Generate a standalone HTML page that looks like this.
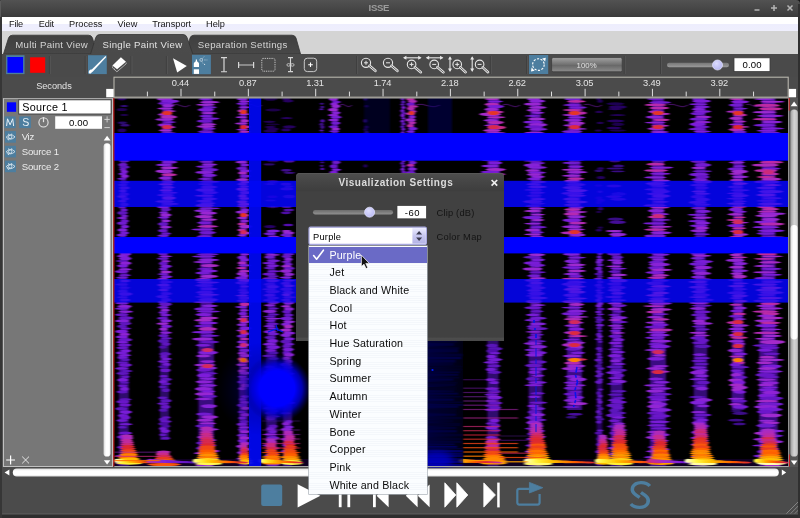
<!DOCTYPE html>
<html><head><meta charset="utf-8"><title>ISSE</title>
<style>
html,body{margin:0;padding:0;}
body{width:800px;height:518px;position:relative;overflow:hidden;background:#4b4b4b;font-family:"Liberation Sans",sans-serif;}
.a{position:absolute;}
.t{position:absolute;white-space:nowrap;line-height:1;}
#w{position:absolute;left:0;top:0;width:800px;height:518px;overflow:hidden;will-change:transform;}
</style></head><body><div id="w">
<div class="a" style="left:0px;top:0px;width:800px;height:8px;background:#161616;"></div>
<div class="a" style="left:0px;top:0px;width:800px;height:17px;background:linear-gradient(#525252 0,#4a4a4a 35%,#424242 70%,#3a3a3a 100%);border-radius:1px 4px 0 0"></div>
<div class="a" style="left:0px;top:1px;width:1.4px;height:16px;background:#5a5a5a;"></div>
<div class="t" style="left:368.60px;top:3px;font-size:9.6px;color:#9c9c9c;letter-spacing:-0.359px;font-weight:bold;">ISSE</div>
<svg class="a" style="left:750px;top:0" width="50" height="17" viewBox="750 0 50 17"><g stroke="#b4b4b4" stroke-width="1.5" fill="none"><path d="M754.5 10h5"/><path d="M771 8h6M774 5v6"/><path d="M787.5 5.5l5 5M792.5 5.5l-5 5"/></g></svg>
<div class="a" style="left:2px;top:16.6px;width:797px;height:14.2px;background:linear-gradient(#fff 0,#fff 7px,#eeeefd 7.5px,#efeffd 100%);"></div>
<div class="t" style="left:9.00px;top:20px;font-size:9.2px;color:#151515;letter-spacing:-0.207px;font-weight:normal;">File</div>
<div class="t" style="left:38.80px;top:20px;font-size:9.2px;color:#151515;letter-spacing:-0.151px;font-weight:normal;">Edit</div>
<div class="t" style="left:69.00px;top:20px;font-size:9.2px;color:#151515;letter-spacing:0.045px;font-weight:normal;">Process</div>
<div class="t" style="left:117.40px;top:20px;font-size:9.2px;color:#151515;letter-spacing:0.067px;font-weight:normal;">View</div>
<div class="t" style="left:152.20px;top:20px;font-size:9.2px;color:#151515;letter-spacing:-0.003px;font-weight:normal;">Transport</div>
<div class="t" style="left:206.00px;top:20px;font-size:9.2px;color:#151515;letter-spacing:0.025px;font-weight:normal;">Help</div>
<div class="a" style="left:2px;top:30.8px;width:797px;height:23.2px;background:#d4d4d4;"></div>
<svg class="a" style="left:0;top:31px" width="320" height="23" viewBox="0 31 320 23"><defs><linearGradient id="tg1" x1="0" y1="0" x2="0" y2="1"><stop offset="0" stop-color="#3f3f3f"/><stop offset="1" stop-color="#484848"/></linearGradient><linearGradient id="tg2" x1="0" y1="0" x2="0" y2="1"><stop offset="0" stop-color="#4c4c4c"/><stop offset="1" stop-color="#4a4a4a"/></linearGradient></defs><path d="M186 54 L190 38 Q191 35.2 194 35.2 L292 35.2 Q295 35.2 296 38 L300.5 54 Z" fill="url(#tg1)" stroke="#333" stroke-width="0.8"/><path d="M3.5 54 L8.5 38 Q9.5 35.2 12.5 35.2 L88.5 35.2 Q91.5 35.2 92.5 38 L97 54 Z" fill="url(#tg1)" stroke="#333" stroke-width="0.8"/><path d="M90.4 54.5 L95.8 37.4 Q96.8 34.5 99.8 34.5 L183 34.5 Q186 34.5 187 37.4 L193 54.5 Z" fill="url(#tg2)" stroke="#333" stroke-width="0.8"/></svg>
<div class="t" style="left:15.30px;top:40px;font-size:9.6px;color:#d4d4d4;letter-spacing:0.290px;font-weight:normal;">Multi Paint View</div>
<div class="t" style="left:102.50px;top:40px;font-size:9.6px;color:#e2e2e2;letter-spacing:0.321px;font-weight:normal;">Single Paint View</div>
<div class="t" style="left:197.80px;top:40px;font-size:9.6px;color:#d4d4d4;letter-spacing:0.317px;font-weight:normal;">Separation Settings</div>
<div class="a" style="left:2px;top:53.5px;width:797px;height:24px;background:#4a4a4a;"></div>
<svg class="a" style="left:0;top:53px" width="800" height="25" viewBox="0 53 800 25"><path d="M49.4 56v18" stroke="#3e3e3e" stroke-width="1"/><path d="M50.4 56v18" stroke="#545454" stroke-width="1"/><path d="M85.2 56v18" stroke="#3e3e3e" stroke-width="1"/><path d="M86.2 56v18" stroke="#545454" stroke-width="1"/><path d="M131 56v18" stroke="#3e3e3e" stroke-width="1"/><path d="M132 56v18" stroke="#545454" stroke-width="1"/><path d="M166.4 56v18" stroke="#3e3e3e" stroke-width="1"/><path d="M167.4 56v18" stroke="#545454" stroke-width="1"/><path d="M356.6 56v18" stroke="#3e3e3e" stroke-width="1"/><path d="M357.6 56v18" stroke="#545454" stroke-width="1"/><path d="M490.4 56v18" stroke="#3e3e3e" stroke-width="1"/><path d="M491.4 56v18" stroke="#545454" stroke-width="1"/><path d="M526.6 56v18" stroke="#3e3e3e" stroke-width="1"/><path d="M527.6 56v18" stroke="#545454" stroke-width="1"/><path d="M624.3 56v18" stroke="#3e3e3e" stroke-width="1"/><path d="M625.3 56v18" stroke="#545454" stroke-width="1"/><path d="M660.5 56v18" stroke="#3e3e3e" stroke-width="1"/><path d="M661.5 56v18" stroke="#545454" stroke-width="1"/><rect x="6.1" y="55.2" width="18.4" height="18.9" fill="#4d7e9f"/><rect x="7.4" y="57" width="15.7" height="15.8" fill="#0000ff"/><rect x="30.1" y="57.3" width="15.1" height="15.5" fill="#ff0000"/><rect x="88" y="55.2" width="18.8" height="18.9" fill="#4d7e9f"/><path d="M90.8 70.4 L105.5 56.1 L106.3 56.9 L92.4 72 Z" fill="#fff"/><ellipse cx="90.5" cy="71.5" rx="1.5" ry="2.3" transform="rotate(38 90.5 71.5)" fill="#fff"/><path d="M112.4 65.4 L120.9 57.3 L126 61.7 L117.1 69.2 Z" fill="#fff"/><path d="M112.5 66.4 V67.8 L116.9 71.8 L126.2 63.8 V62.6 M114.6 68.6 v1.2" fill="none" stroke="#d4d4d4" stroke-width=".7"/><path d="M173 58.2 L186.8 66 L177.2 72.6 Z" fill="#fff"/><rect x="192" y="54.8" width="18.9" height="19.4" fill="#4d7e9f"/><path d="M193.8 67 V63.6 Q193.8 62.4 195.8 61.2 V59.4 H197 V61.2 Q199 62.4 199 63.6 V67 Z" fill="#fff"/><rect x="193.8" y="69.3" width="5.2" height="4.6" fill="#fff"/><circle cx="201.2" cy="59.9" r="1.4" fill="none" stroke="#dfe8ee" stroke-width=".6"/><path d="M202.4 58.6l2 -2.4M202 61.4l.6 1.6" stroke="#dfe8ee" stroke-width=".6" stroke-dasharray="1 .7"/><g fill="#dfe8ee"><circle cx="204.6" cy="59.9" r=".45"/><circle cx="205.8" cy="59.9" r=".45"/><circle cx="207" cy="59.9" r=".45"/><circle cx="204.6" cy="64.4" r=".55"/><circle cx="203" cy="63.2" r=".4"/></g><path d="M224 57.6v14.2" stroke="#b4b4b4" stroke-width="1.6" fill="none"/><path d="M221 57.6h6M221 71.8h6" stroke="#d8d8d8" stroke-width="1.1" fill="none"/><path d="M238.6 62v6M253.6 62v6" stroke="#d8d8d8" stroke-width="1.2" fill="none"/><path d="M238.6 65h15" stroke="#d8d8d8" stroke-width=".9" fill="none"/><rect x="261.8" y="58.4" width="13.2" height="12.8" rx="1.6" fill="none" stroke="#e4e4e4" stroke-width=".9" stroke-dasharray=".9 .9"/><path d="M290.5 57.4v14.4M288 57.6h5M288 71.6h5" stroke="#d4d4d4" stroke-width="1.1" fill="none"/><ellipse cx="288.6" cy="64.9" rx="1.7" ry="1.3" fill="none" stroke="#d4d4d4" stroke-width=".8"/><ellipse cx="292.4" cy="64.9" rx="1.7" ry="1.3" fill="none" stroke="#d4d4d4" stroke-width=".8"/><rect x="304.3" y="58.2" width="12.4" height="13.4" rx="3" fill="none" stroke="#c8c8c8" stroke-width="1"/><path d="M308.2 64.7h4.6M310.5 62.4v4.6" stroke="#fff" stroke-width="1.1"/><circle cx="366" cy="62.8" r="4.6" fill="none" stroke="#e6e6e6" stroke-width="1.1"/><path d="M369.50 65.78L375.4 70.8" stroke="#e6e6e6" stroke-width="2.6" stroke-linecap="round"/><path d="M369.50 65.78L375.4 70.8" stroke="#555" stroke-width="0.9" stroke-linecap="round"/><path d="M364 62.8h4" stroke="#e6e6e6" stroke-width="1"/><path d="M366 60.8v4" stroke="#e6e6e6" stroke-width="1"/><circle cx="388" cy="62.8" r="4.6" fill="none" stroke="#e6e6e6" stroke-width="1.1"/><path d="M391.50 65.78L397.4 70.8" stroke="#e6e6e6" stroke-width="2.6" stroke-linecap="round"/><path d="M391.50 65.78L397.4 70.8" stroke="#555" stroke-width="0.9" stroke-linecap="round"/><path d="M386 62.8h4" stroke="#e6e6e6" stroke-width="1"/><circle cx="411.6" cy="64.4" r="4.3" fill="none" stroke="#e6e6e6" stroke-width="1.1"/><path d="M414.88 67.18L420.8 72.2" stroke="#e6e6e6" stroke-width="2.6" stroke-linecap="round"/><path d="M414.88 67.18L420.8 72.2" stroke="#555" stroke-width="0.9" stroke-linecap="round"/><path d="M409.6 64.4h4" stroke="#e6e6e6" stroke-width="1"/><path d="M411.6 62.400000000000006v4" stroke="#e6e6e6" stroke-width="1"/><path d="M404 57.8h16.6" stroke="#e6e6e6" stroke-width="1.1"/><path d="M403 57.8l3.4 -2v4zM421.6 57.8l-3.4 -2v4z" fill="#e6e6e6"/><circle cx="434.2" cy="64.4" r="4.3" fill="none" stroke="#e6e6e6" stroke-width="1.1"/><path d="M437.48 67.18L443.4 72.2" stroke="#e6e6e6" stroke-width="2.6" stroke-linecap="round"/><path d="M437.48 67.18L443.4 72.2" stroke="#555" stroke-width="0.9" stroke-linecap="round"/><path d="M432.2 64.4h4" stroke="#e6e6e6" stroke-width="1"/><path d="M426.8 57.8h15.6" stroke="#e6e6e6" stroke-width="1.1"/><path d="M425.8 57.8l3.4 -2v4zM443.4 57.8l-3.4 -2v4z" fill="#e6e6e6"/><circle cx="457.2" cy="64.4" r="4.3" fill="none" stroke="#e6e6e6" stroke-width="1.1"/><path d="M460.35 67.33L465.6 72.2" stroke="#e6e6e6" stroke-width="2.6" stroke-linecap="round"/><path d="M460.35 67.33L465.6 72.2" stroke="#555" stroke-width="0.9" stroke-linecap="round"/><path d="M455.2 64.4h4" stroke="#e6e6e6" stroke-width="1"/><path d="M457.2 62.400000000000006v4" stroke="#e6e6e6" stroke-width="1"/><path d="M450 57.6v13" stroke="#e6e6e6" stroke-width="1.1"/><path d="M450 56.2l-2 3.4h4zM450 72l-2 -3.4h4z" fill="#e6e6e6"/><circle cx="479.6" cy="64.4" r="4.3" fill="none" stroke="#e6e6e6" stroke-width="1.1"/><path d="M482.75 67.33L488 72.2" stroke="#e6e6e6" stroke-width="2.6" stroke-linecap="round"/><path d="M482.75 67.33L488 72.2" stroke="#555" stroke-width="0.9" stroke-linecap="round"/><path d="M477.6 64.4h4" stroke="#e6e6e6" stroke-width="1"/><path d="M472.2 57.6v13" stroke="#e6e6e6" stroke-width="1.1"/><path d="M472.2 56.2l-2 3.4h4zM472.2 72l-2 -3.4h4z" fill="#e6e6e6"/><rect x="529" y="55" width="19.2" height="19" fill="#4d7e9f"/><circle cx="538.4" cy="64.6" r="5.8" fill="none" stroke="#fff" stroke-width="1.1" stroke-dasharray="2.2 1.4"/><path d="M542.2 58.4l3.6 -0.6l-0.6 3.8z" fill="#fff"/><path d="M534.6 70.8l-3.6 0.6l0.6 -3.8z" fill="#fff"/><defs><linearGradient id="pg" x1="0" y1="0" x2="0" y2="1"><stop offset="0" stop-color="#b0b0b0"/><stop offset=".12" stop-color="#969696"/><stop offset=".5" stop-color="#707070"/><stop offset=".52" stop-color="#666"/><stop offset="1" stop-color="#8c8c8c"/></linearGradient><linearGradient id="trk" x1="0" y1="0" x2="0" y2="1"><stop offset="0" stop-color="#777"/><stop offset="1" stop-color="#9a9a9a"/></linearGradient><radialGradient id="knob" cx=".4" cy=".35" r=".7"><stop offset="0" stop-color="#dcdcff"/><stop offset="1" stop-color="#b4b4f0"/></radialGradient></defs><rect x="551.6" y="57.6" width="70.6" height="14.2" rx="1.5" fill="url(#pg)" stroke="#3c3c3c" stroke-width=".8"/><rect x="667" y="62.8" width="62" height="4.4" rx="2.2" fill="url(#trk)"/><circle cx="717.5" cy="65" r="5" fill="url(#knob)" stroke="#e8e8ff" stroke-width=".7"/><rect x="734" y="57.8" width="36" height="13.8" fill="#fff" stroke="#3a3a3a" stroke-width=".8"/></svg>
<div class="t" style="left:576.50px;top:62px;font-size:7.8px;color:#e0e0e0;letter-spacing:0.083px;font-weight:normal;">100%</div>
<div class="t" style="left:742.60px;top:60px;font-size:9.6px;color:#000;letter-spacing:0.073px;font-weight:normal;">0.00</div>
<div class="a" style="left:2px;top:76.5px;width:797px;height:21.5px;background:#4b4b4b;"></div>
<svg class="a" style="left:100px;top:76px" width="700" height="23" viewBox="100 76 700 23"><rect x="114" y="77.2" width="674.2" height="20" fill="#4b4b4b" stroke="#b9b7ae" stroke-width="1.1"/><rect x="106.2" y="88.9" width="7.4" height="8.4" fill="#fff"/><rect x="788.9" y="88.9" width="7.2" height="8.4" fill="#fff"/><path d="M181.00 88.8v7.6" stroke="#e0e0e0" stroke-width="1"/><path d="M248.35 88.8v7.6" stroke="#e0e0e0" stroke-width="1"/><path d="M315.70 88.8v7.6" stroke="#e0e0e0" stroke-width="1"/><path d="M383.05 88.8v7.6" stroke="#e0e0e0" stroke-width="1"/><path d="M450.40 88.8v7.6" stroke="#e0e0e0" stroke-width="1"/><path d="M517.75 88.8v7.6" stroke="#e0e0e0" stroke-width="1"/><path d="M585.10 88.8v7.6" stroke="#e0e0e0" stroke-width="1"/><path d="M652.45 88.8v7.6" stroke="#e0e0e0" stroke-width="1"/><path d="M719.80 88.8v7.6" stroke="#e0e0e0" stroke-width="1"/><path d="M147.40 91.6v4.8" stroke="#e0e0e0" stroke-width="1"/><path d="M214.75 91.6v4.8" stroke="#e0e0e0" stroke-width="1"/><path d="M282.10 91.6v4.8" stroke="#e0e0e0" stroke-width="1"/><path d="M349.45 91.6v4.8" stroke="#e0e0e0" stroke-width="1"/><path d="M416.80 91.6v4.8" stroke="#e0e0e0" stroke-width="1"/><path d="M484.15 91.6v4.8" stroke="#e0e0e0" stroke-width="1"/><path d="M551.50 91.6v4.8" stroke="#e0e0e0" stroke-width="1"/><path d="M618.85 91.6v4.8" stroke="#e0e0e0" stroke-width="1"/><path d="M686.20 91.6v4.8" stroke="#e0e0e0" stroke-width="1"/><path d="M753.55 91.6v4.8" stroke="#e0e0e0" stroke-width="1"/></svg>
<div class="t" style="left:36.20px;top:82px;font-size:9.2px;color:#e4e4e4;letter-spacing:-0.034px;font-weight:normal;">Seconds</div>
<div class="t" style="left:140.40px;width:80px;text-align:center;top:79px;font-size:9.3px;color:#e4e4e4;letter-spacing:-0.15px;font-weight:normal;">0.44</div>
<div class="t" style="left:207.75px;width:80px;text-align:center;top:79px;font-size:9.3px;color:#e4e4e4;letter-spacing:-0.15px;font-weight:normal;">0.87</div>
<div class="t" style="left:275.10px;width:80px;text-align:center;top:79px;font-size:9.3px;color:#e4e4e4;letter-spacing:-0.15px;font-weight:normal;">1.31</div>
<div class="t" style="left:342.45px;width:80px;text-align:center;top:79px;font-size:9.3px;color:#e4e4e4;letter-spacing:-0.15px;font-weight:normal;">1.74</div>
<div class="t" style="left:409.80px;width:80px;text-align:center;top:79px;font-size:9.3px;color:#e4e4e4;letter-spacing:-0.15px;font-weight:normal;">2.18</div>
<div class="t" style="left:477.15px;width:80px;text-align:center;top:79px;font-size:9.3px;color:#e4e4e4;letter-spacing:-0.15px;font-weight:normal;">2.62</div>
<div class="t" style="left:544.50px;width:80px;text-align:center;top:79px;font-size:9.3px;color:#e4e4e4;letter-spacing:-0.15px;font-weight:normal;">3.05</div>
<div class="t" style="left:611.85px;width:80px;text-align:center;top:79px;font-size:9.3px;color:#e4e4e4;letter-spacing:-0.15px;font-weight:normal;">3.49</div>
<div class="t" style="left:679.20px;width:80px;text-align:center;top:79px;font-size:9.3px;color:#e4e4e4;letter-spacing:-0.15px;font-weight:normal;">3.92</div>
<div class="a" style="left:2px;top:98px;width:797px;height:369px;background:#555;"></div>
<div class="a" style="left:3px;top:98px;width:109.5px;height:368.6px;background:#777;box-sizing:border-box;border:1px solid #c0c0c0;border-top-color:#a8a8a8"></div>
<svg class="a" style="left:0;top:98px" width="114" height="370" viewBox="0 98 114 370"><rect x="6.9" y="102.3" width="9.2" height="9.5" fill="#0000ff"/><rect x="18.7" y="99.8" width="92.4" height="14.2" fill="#fff" stroke="#3a3a3a" stroke-width=".9"/><rect x="4.6" y="116.4" width="11.1" height="11.7" fill="#4d7e9f"/><rect x="19.2" y="116.4" width="11.7" height="11.7" fill="#4d7e9f"/><path d="M6.6 126 L7.5 118.8 L10.1 124.8 L12.7 118.8 L13.6 126" fill="none" stroke="#e8f0f6" stroke-width="1" stroke-linejoin="round"/><circle cx="43.5" cy="122.4" r="4.6" fill="none" stroke="#e6e6e6" stroke-width="1.1"/><path d="M43.5 117.2v5" stroke="#e6e6e6" stroke-width="1.2"/><rect x="55.2" y="116.3" width="46.8" height="12.5" fill="#fff"/><path d="M104.4 119.4h5.4M107.1 116.4v6" stroke="#d8d8d8" stroke-width=".9"/><path d="M104.4 127.6h5.4" stroke="#d8d8d8" stroke-width=".9"/><rect x="4.9" y="131.1" width="11.1" height="11.6" fill="#4d7e9f"/><path d="M6.200000000000001 137.1q4.2 -4.6 8.8 -.2q-4.4 4.4 -8.8 .2z" fill="none" stroke="#e4eef4" stroke-width=".8"/><circle cx="10.200000000000001" cy="136.9" r="1.7" fill="none" stroke="#e4eef4" stroke-width=".8"/><path d="M8.000000000000002 134.29999999999998h1.2M11.000000000000002 134.2h1.2M7.200000000000001 138.7q.6 1.4 2 1.2" stroke="#e4eef4" stroke-width=".8" fill="none"/><rect x="4.9" y="145.8" width="11.1" height="11.6" fill="#4d7e9f"/><path d="M6.200000000000001 151.8q4.2 -4.6 8.8 -.2q-4.4 4.4 -8.8 .2z" fill="none" stroke="#e4eef4" stroke-width=".8"/><circle cx="10.200000000000001" cy="151.60000000000002" r="1.7" fill="none" stroke="#e4eef4" stroke-width=".8"/><path d="M8.000000000000002 149.0h1.2M11.000000000000002 148.9h1.2M7.200000000000001 153.4q.6 1.4 2 1.2" stroke="#e4eef4" stroke-width=".8" fill="none"/><rect x="4.9" y="160.6" width="11.1" height="11.6" fill="#4d7e9f"/><path d="M6.200000000000001 166.6q4.2 -4.6 8.8 -.2q-4.4 4.4 -8.8 .2z" fill="none" stroke="#e4eef4" stroke-width=".8"/><circle cx="10.200000000000001" cy="166.4" r="1.7" fill="none" stroke="#e4eef4" stroke-width=".8"/><path d="M8.000000000000002 163.79999999999998h1.2M11.000000000000002 163.7h1.2M7.200000000000001 168.2q.6 1.4 2 1.2" stroke="#e4eef4" stroke-width=".8" fill="none"/><defs><linearGradient id="vs" x1="0" y1="0" x2="1" y2="0"><stop offset="0" stop-color="#d8d8d8"/><stop offset=".35" stop-color="#fff"/><stop offset=".8" stop-color="#fff"/><stop offset="1" stop-color="#e0e0e0"/></linearGradient></defs><path d="M107.1 135.8l3.4 4.6h-6.8z" fill="#fff"/><rect x="103.6" y="143.2" width="6.9" height="313.4" rx="3.4" fill="url(#vs)"/><path d="M107.1 464.6l3.2 -4.4h-6.4z" fill="#fff"/><path d="M6.2 460h8.8M10.6 455.6v8.8" stroke="#fff" stroke-width="1.2"/><path d="M22.2 456.6l6.8 6.8M29 456.6l-6.8 6.8" stroke="#f0f0f0" stroke-width=".9"/></svg>
<div class="t" style="left:22.30px;top:102px;font-size:10.8px;color:#000;letter-spacing:0.283px;font-weight:normal;">Source 1</div>
<div class="t" style="left:22.30px;top:117px;font-size:10.6px;color:#e8f0f6;letter-spacing:-1.570px;font-weight:normal;">S</div>
<div class="t" style="left:69.00px;top:118px;font-size:9.6px;color:#000;letter-spacing:0.173px;font-weight:normal;">0.00</div>
<div class="t" style="left:21.70px;top:132px;font-size:9.6px;color:#ececec;letter-spacing:-0.331px;font-weight:normal;">Viz</div>
<div class="t" style="left:21.70px;top:147px;font-size:9.6px;color:#ececec;letter-spacing:-0.160px;font-weight:normal;">Source 1</div>
<div class="t" style="left:21.70px;top:162px;font-size:9.6px;color:#ececec;letter-spacing:-0.160px;font-weight:normal;">Source 2</div>
<svg class="a" style="left:113px;top:98px" width="677" height="370" viewBox="113 98 677 370"><defs><filter id="sb" x="-2%" y="-2%" width="104%" height="104%"><feGaussianBlur stdDeviation="1.2 0.7"/></filter><filter id="sb2"><feGaussianBlur stdDeviation="0.8 0.35"/></filter><filter id="sb3"><feGaussianBlur stdDeviation="3"/></filter><radialGradient id="blob"><stop offset="0" stop-color="#0000ff"/><stop offset=".52" stop-color="#0000ff"/><stop offset=".74" stop-color="#0000d8" stop-opacity=".8"/><stop offset="1" stop-color="#000080" stop-opacity="0"/></radialGradient><radialGradient id="blob2"><stop offset="0" stop-color="#0000a0" stop-opacity=".55"/><stop offset="1" stop-color="#000060" stop-opacity="0"/></radialGradient><linearGradient id="dk" x1="0" y1="0" x2="1" y2="0"><stop offset="0" stop-color="#000070"/><stop offset=".5" stop-color="#000048"/><stop offset="1" stop-color="#000020"/></linearGradient><clipPath id="semi"><rect x="114" y="180.8" width="674" height="26.2"/><rect x="114" y="279" width="674" height="23.6"/></clipPath><g id="stripes"><g filter="url(#sb)"><rect x="114" y="459" width="674" height="7" fill="#2a0860" opacity=".35"/><ellipse cx="122.0" cy="99.0" rx="4.3" ry="1.4" fill="#29066a"/><ellipse cx="124.1" cy="106.0" rx="4.0" ry="1.0" fill="#2f0874"/><ellipse cx="121.9" cy="109.4" rx="5.3" ry="1.5" fill="#200553"/><ellipse cx="124.2" cy="115.0" rx="3.9" ry="0.9" fill="#200554"/><ellipse cx="122.4" cy="122.8" rx="4.7" ry="1.3" fill="#2b076d"/><ellipse cx="124.9" cy="125.3" rx="4.8" ry="1.2" fill="#35097d"/><ellipse cx="122.0" cy="130.4" rx="4.2" ry="1.8" fill="#260663"/><rect x="120.8" y="160" width="5.4" height="77" fill="#440d97" opacity="0.8"/><ellipse cx="124.3" cy="161.0" rx="5.2" ry="1.3" fill="#5812b8"/><ellipse cx="122.9" cy="164.7" rx="4.7" ry="1.6" fill="#6a18c9"/><ellipse cx="124.4" cy="167.1" rx="5.3" ry="1.6" fill="#5c13bc"/><ellipse cx="122.9" cy="169.3" rx="3.5" ry="1.6" fill="#6e19cc"/><ellipse cx="124.5" cy="171.6" rx="3.8" ry="1.6" fill="#7f1fd9"/><ellipse cx="122.8" cy="173.9" rx="4.3" ry="1.1" fill="#751cd4"/><ellipse cx="124.9" cy="176.3" rx="4.0" ry="1.7" fill="#8822d7"/><ellipse cx="122.0" cy="178.7" rx="4.7" ry="1.0" fill="#6a18c9"/><ellipse cx="124.3" cy="182.3" rx="4.9" ry="1.2" fill="#6215c1"/><ellipse cx="122.9" cy="184.9" rx="4.6" ry="1.1" fill="#6115c0"/><ellipse cx="124.5" cy="187.9" rx="5.3" ry="1.3" fill="#761cd5"/><ellipse cx="122.8" cy="190.9" rx="3.7" ry="1.7" fill="#8120d9"/><ellipse cx="124.2" cy="194.2" rx="4.9" ry="1.7" fill="#6416c3"/><ellipse cx="122.0" cy="196.6" rx="4.6" ry="1.3" fill="#8722d7"/><ellipse cx="125.1" cy="198.8" rx="3.9" ry="1.5" fill="#6e19cd"/><ellipse cx="122.3" cy="201.2" rx="4.0" ry="1.1" fill="#7e1fd9"/><ellipse cx="124.3" cy="204.4" rx="4.5" ry="1.7" fill="#5b13bb"/><ellipse cx="122.0" cy="207.5" rx="3.8" ry="0.9" fill="#6516c4"/><ellipse cx="124.1" cy="209.9" rx="3.8" ry="1.2" fill="#6c19cb"/><ellipse cx="122.6" cy="212.9" rx="5.2" ry="1.8" fill="#5e14be"/><ellipse cx="124.7" cy="216.0" rx="3.7" ry="0.9" fill="#781dd6"/><ellipse cx="122.2" cy="218.0" rx="5.3" ry="0.9" fill="#8421d8"/><ellipse cx="124.8" cy="221.1" rx="4.1" ry="1.8" fill="#6e19cd"/><ellipse cx="122.2" cy="223.2" rx="5.2" ry="1.6" fill="#711ad0"/><ellipse cx="125.0" cy="226.4" rx="4.1" ry="1.5" fill="#7c1eda"/><ellipse cx="122.5" cy="230.0" rx="5.0" ry="1.7" fill="#8220d8"/><ellipse cx="124.5" cy="232.9" rx="4.6" ry="1.4" fill="#751cd3"/><ellipse cx="121.9" cy="235.1" rx="5.2" ry="1.6" fill="#751cd4"/><rect x="120.0" y="253" width="7.5" height="87" fill="#480e9e" opacity="0.8"/><rect x="118.8" y="340" width="10.0" height="126" fill="#3c0b8a" opacity="0.8"/><ellipse cx="125.4" cy="254.0" rx="6.0" ry="1.7" fill="#801fd9"/><ellipse cx="123.0" cy="256.1" rx="6.4" ry="1.3" fill="#8120d9"/><ellipse cx="125.2" cy="258.5" rx="6.4" ry="1.7" fill="#7e1fda"/><ellipse cx="122.5" cy="261.0" rx="6.6" ry="1.1" fill="#5d14bc"/><ellipse cx="125.5" cy="263.3" rx="6.0" ry="1.7" fill="#8c23d5"/><ellipse cx="122.7" cy="265.8" rx="5.9" ry="1.6" fill="#7c1eda"/><ellipse cx="125.1" cy="269.4" rx="6.4" ry="1.2" fill="#8b23d6"/><ellipse cx="121.7" cy="271.6" rx="7.1" ry="1.5" fill="#741bd2"/><ellipse cx="124.8" cy="275.2" rx="6.0" ry="1.1" fill="#6918c8"/><ellipse cx="122.1" cy="277.6" rx="6.1" ry="1.2" fill="#701ace"/><ellipse cx="125.2" cy="281.0" rx="5.0" ry="0.9" fill="#9225d4"/><ellipse cx="121.9" cy="284.5" rx="6.3" ry="1.2" fill="#5e14be"/><ellipse cx="124.7" cy="287.8" rx="6.0" ry="0.9" fill="#5d14bd"/><ellipse cx="122.8" cy="291.2" rx="4.9" ry="1.5" fill="#6717c6"/><ellipse cx="125.5" cy="294.0" rx="7.0" ry="1.8" fill="#7a1dd8"/><ellipse cx="122.3" cy="297.2" rx="5.2" ry="0.9" fill="#6516c5"/><ellipse cx="124.8" cy="300.0" rx="5.5" ry="1.2" fill="#7f1fd9"/><ellipse cx="122.1" cy="303.2" rx="6.8" ry="1.3" fill="#751cd3"/><ellipse cx="124.6" cy="306.5" rx="7.3" ry="1.6" fill="#8c23d5"/><ellipse cx="122.1" cy="308.7" rx="7.3" ry="1.2" fill="#711ad0"/><ellipse cx="125.7" cy="311.7" rx="7.3" ry="1.3" fill="#8a23d6"/><ellipse cx="121.9" cy="314.8" rx="7.0" ry="1.5" fill="#6617c5"/><ellipse cx="125.8" cy="318.0" rx="7.4" ry="1.8" fill="#6617c5"/><ellipse cx="122.5" cy="320.9" rx="7.3" ry="1.7" fill="#8421d8"/><ellipse cx="125.2" cy="323.5" rx="6.3" ry="1.6" fill="#6015bf"/><ellipse cx="121.8" cy="326.3" rx="4.9" ry="1.6" fill="#5d14bd"/><ellipse cx="125.7" cy="328.6" rx="5.1" ry="1.0" fill="#6c19cb"/><ellipse cx="121.7" cy="331.5" rx="6.6" ry="1.8" fill="#7f1fd9"/><ellipse cx="124.6" cy="334.4" rx="5.4" ry="1.4" fill="#8f24d5"/><ellipse cx="122.0" cy="336.9" rx="6.2" ry="1.7" fill="#801fd9"/><ellipse cx="125.1" cy="339.8" rx="7.1" ry="1.7" fill="#6b18ca"/><ellipse cx="122.2" cy="342.2" rx="5.8" ry="1.3" fill="#7d1eda"/><ellipse cx="124.5" cy="345.1" rx="6.9" ry="1.6" fill="#6d19cc"/><ellipse cx="122.3" cy="347.8" rx="6.2" ry="1.2" fill="#6b18ca"/><ellipse cx="125.9" cy="350.7" rx="5.0" ry="1.5" fill="#7c1eda"/><ellipse cx="121.6" cy="352.9" rx="5.6" ry="1.4" fill="#761cd4"/><ellipse cx="124.7" cy="355.2" rx="6.4" ry="1.1" fill="#7b1ed9"/><ellipse cx="122.5" cy="357.5" rx="5.2" ry="1.7" fill="#701acf"/><ellipse cx="125.3" cy="359.7" rx="4.9" ry="1.3" fill="#5812b8"/><ellipse cx="122.4" cy="362.6" rx="5.7" ry="1.2" fill="#6316c3"/><ellipse cx="125.3" cy="365.0" rx="6.6" ry="1.7" fill="#6e19cd"/><ellipse cx="121.8" cy="368.4" rx="6.7" ry="1.4" fill="#731bd1"/><ellipse cx="126.0" cy="371.0" rx="6.7" ry="1.2" fill="#5c13bc"/><ellipse cx="122.9" cy="373.4" rx="6.5" ry="1.5" fill="#5e14be"/><ellipse cx="125.5" cy="376.7" rx="4.3" ry="1.3" fill="#6416c4"/><ellipse cx="122.8" cy="379.9" rx="5.6" ry="1.8" fill="#7d1eda"/><ellipse cx="124.6" cy="382.7" rx="4.5" ry="1.1" fill="#5b13bb"/><ellipse cx="122.8" cy="385.7" rx="4.8" ry="1.3" fill="#6b18ca"/><ellipse cx="124.6" cy="389.1" rx="4.4" ry="2.0" fill="#7b1ed9"/><ellipse cx="122.3" cy="391.9" rx="5.7" ry="1.5" fill="#6115c1"/><ellipse cx="125.2" cy="399.5" rx="6.3" ry="1.5" fill="#5b13bb"/><ellipse cx="123.0" cy="401.8" rx="6.7" ry="1.8" fill="#6918c8"/><ellipse cx="125.1" cy="405.0" rx="5.9" ry="1.6" fill="#6e19cd"/><ellipse cx="121.6" cy="408.7" rx="6.3" ry="1.8" fill="#5e14be"/><ellipse cx="125.8" cy="412.1" rx="6.2" ry="1.8" fill="#791dd8"/><ellipse cx="122.9" cy="415.4" rx="5.2" ry="1.5" fill="#721bd1"/><ellipse cx="125.4" cy="417.4" rx="4.9" ry="2.0" fill="#6e19cd"/><ellipse cx="122.1" cy="420.5" rx="5.7" ry="1.5" fill="#6f1ace"/><ellipse cx="125.6" cy="424.2" rx="6.9" ry="1.1" fill="#711ad0"/><ellipse cx="122.4" cy="427.3" rx="4.4" ry="1.3" fill="#5e14be"/><ellipse cx="125.3" cy="433.2" rx="6.9" ry="1.6" fill="#6b18ca"/><ellipse cx="122.9" cy="436.9" rx="5.9" ry="1.8" fill="#761cd4"/><ellipse cx="125.2" cy="438.9" rx="4.7" ry="1.5" fill="#5a13ba"/><ellipse cx="122.1" cy="447.3" rx="5.3" ry="1.4" fill="#6a18c9"/><ellipse cx="125.6" cy="450.4" rx="5.1" ry="1.1" fill="#5f14bf"/><ellipse cx="121.7" cy="455.8" rx="6.3" ry="1.1" fill="#6416c3"/><ellipse cx="125.9" cy="459.5" rx="5.4" ry="1.5" fill="#5611b4"/><ellipse cx="121.6" cy="463.1" rx="6.2" ry="1.5" fill="#6a18c9"/><ellipse cx="127.2" cy="436.0" rx="6.1" ry="1.5" fill="#b12bb6"/><ellipse cx="127.4" cy="438.1" rx="6.1" ry="1.5" fill="#ac2bbe"/><ellipse cx="126.7" cy="440.2" rx="6.2" ry="1.5" fill="#bf2ca0"/><ellipse cx="127.5" cy="442.3" rx="6.4" ry="1.5" fill="#c12c9e"/><ellipse cx="127.5" cy="444.4" rx="6.7" ry="1.5" fill="#cc2b7d"/><ellipse cx="127.7" cy="446.5" rx="7.1" ry="1.5" fill="#dd2832"/><ellipse cx="128.1" cy="448.6" rx="7.5" ry="1.5" fill="#df2a2f"/><ellipse cx="128.6" cy="450.7" rx="8.0" ry="1.5" fill="#ed421a"/><ellipse cx="129.2" cy="452.8" rx="8.6" ry="1.5" fill="#f95708"/><ellipse cx="128.8" cy="454.9" rx="9.3" ry="1.5" fill="#ff8200"/><ellipse cx="127.7" cy="457.0" rx="10.1" ry="1.5" fill="#ff7000"/><ellipse cx="129.2" cy="459.1" rx="10.9" ry="1.5" fill="#ffb800"/><ellipse cx="128.5" cy="461.2" rx="11.8" ry="1.5" fill="#ffd61a"/><ellipse cx="129.3" cy="463.3" rx="12.8" ry="1.5" fill="#fff036"/><rect x="162.2" y="98" width="9.6" height="108" fill="#5a13ba" opacity="0.8"/><ellipse cx="164.9" cy="99.0" rx="8.3" ry="1.6" fill="#9526d3"/><ellipse cx="169.8" cy="101.3" rx="9.3" ry="1.7" fill="#7b1ed9"/><ellipse cx="165.5" cy="103.4" rx="7.6" ry="1.5" fill="#701acf"/><ellipse cx="168.1" cy="105.6" rx="6.4" ry="1.5" fill="#9326d4"/><ellipse cx="165.3" cy="108.5" rx="7.8" ry="1.1" fill="#9b28d1"/><ellipse cx="169.6" cy="111.1" rx="6.3" ry="1.0" fill="#a62ac7"/><ellipse cx="164.6" cy="114.5" rx="6.8" ry="1.3" fill="#9f2ad0"/><ellipse cx="168.7" cy="116.9" rx="8.4" ry="1.8" fill="#ad2bbc"/><ellipse cx="164.6" cy="119.5" rx="9.3" ry="1.3" fill="#9426d3"/><ellipse cx="169.6" cy="122.1" rx="6.4" ry="1.0" fill="#721bd1"/><ellipse cx="164.7" cy="125.0" rx="7.1" ry="1.6" fill="#8e24d5"/><ellipse cx="169.2" cy="127.2" rx="6.4" ry="1.2" fill="#a22acc"/><ellipse cx="165.5" cy="130.4" rx="6.6" ry="1.2" fill="#a02ad0"/><ellipse cx="168.2" cy="133.6" rx="8.6" ry="1.4" fill="#8421d8"/><ellipse cx="164.3" cy="137.2" rx="7.6" ry="1.6" fill="#bb2ba6"/><ellipse cx="168.7" cy="139.7" rx="9.4" ry="1.7" fill="#801fd9"/><ellipse cx="165.3" cy="142.1" rx="7.4" ry="1.3" fill="#8421d8"/><ellipse cx="169.0" cy="144.8" rx="8.9" ry="1.4" fill="#781dd6"/><ellipse cx="165.7" cy="148.2" rx="8.8" ry="1.7" fill="#9526d3"/><ellipse cx="169.0" cy="150.7" rx="8.0" ry="1.4" fill="#6e19cd"/><ellipse cx="164.5" cy="154.3" rx="6.3" ry="1.4" fill="#9c29d1"/><ellipse cx="168.1" cy="157.7" rx="8.7" ry="1.7" fill="#721bd0"/><ellipse cx="165.8" cy="159.8" rx="8.7" ry="1.5" fill="#9b28d1"/><ellipse cx="169.4" cy="162.2" rx="7.9" ry="1.6" fill="#791dd7"/><ellipse cx="164.2" cy="164.9" rx="8.4" ry="1.3" fill="#8220d8"/><ellipse cx="169.3" cy="167.8" rx="9.3" ry="1.3" fill="#a32acb"/><ellipse cx="164.4" cy="171.2" rx="8.9" ry="1.7" fill="#9e29d1"/><ellipse cx="169.2" cy="174.7" rx="7.9" ry="1.5" fill="#bd2ca3"/><ellipse cx="165.2" cy="178.1" rx="6.6" ry="1.6" fill="#8922d6"/><ellipse cx="168.3" cy="181.8" rx="6.8" ry="1.3" fill="#8521d7"/><ellipse cx="165.9" cy="184.3" rx="7.2" ry="1.0" fill="#bf2ca1"/><ellipse cx="168.3" cy="187.4" rx="6.3" ry="1.3" fill="#a92ac2"/><ellipse cx="166.0" cy="190.4" rx="6.5" ry="1.1" fill="#b82bab"/><ellipse cx="169.3" cy="192.7" rx="8.2" ry="1.1" fill="#7a1dd8"/><ellipse cx="165.7" cy="195.1" rx="8.7" ry="1.2" fill="#7d1eda"/><ellipse cx="168.9" cy="198.0" rx="7.0" ry="1.7" fill="#ae2bbb"/><ellipse cx="165.0" cy="201.5" rx="9.4" ry="1.3" fill="#8220d8"/><ellipse cx="169.8" cy="203.9" rx="8.9" ry="1.2" fill="#701ace"/><rect x="161.2" y="206" width="6.6" height="134" fill="#4e10a8" opacity="0.8"/><ellipse cx="163.5" cy="207.0" rx="6.6" ry="1.5" fill="#7c1eda"/><ellipse cx="165.8" cy="209.4" rx="5.1" ry="1.6" fill="#6215c2"/><ellipse cx="163.6" cy="212.6" rx="4.6" ry="1.2" fill="#8220d8"/><ellipse cx="165.8" cy="215.1" rx="5.7" ry="1.8" fill="#9627d3"/><ellipse cx="163.6" cy="217.5" rx="6.0" ry="0.9" fill="#7d1eda"/><ellipse cx="166.2" cy="220.9" rx="4.4" ry="1.1" fill="#9426d3"/><ellipse cx="163.2" cy="224.1" rx="5.3" ry="1.8" fill="#6617c6"/><ellipse cx="165.6" cy="227.1" rx="6.1" ry="1.3" fill="#9526d3"/><ellipse cx="162.7" cy="230.7" rx="4.7" ry="1.4" fill="#6d19cc"/><ellipse cx="166.3" cy="233.6" rx="4.9" ry="1.2" fill="#6a18c9"/><ellipse cx="163.2" cy="235.7" rx="5.9" ry="1.2" fill="#711ad0"/><ellipse cx="165.7" cy="238.9" rx="5.3" ry="1.8" fill="#6717c6"/><ellipse cx="163.8" cy="242.3" rx="5.1" ry="1.5" fill="#8621d7"/><ellipse cx="165.8" cy="244.7" rx="4.2" ry="1.8" fill="#7f1fd9"/><ellipse cx="163.0" cy="248.0" rx="4.9" ry="1.2" fill="#6c19cb"/><ellipse cx="165.6" cy="251.0" rx="5.1" ry="1.5" fill="#711acf"/><ellipse cx="162.9" cy="253.4" rx="5.0" ry="1.8" fill="#6c19cb"/><ellipse cx="165.6" cy="256.4" rx="6.2" ry="1.0" fill="#8b23d6"/><ellipse cx="162.9" cy="258.6" rx="5.9" ry="1.1" fill="#6617c6"/><ellipse cx="165.9" cy="261.3" rx="4.4" ry="1.1" fill="#9426d3"/><ellipse cx="163.3" cy="263.5" rx="4.4" ry="1.7" fill="#6817c7"/><ellipse cx="166.0" cy="266.3" rx="6.0" ry="1.6" fill="#7b1ed9"/><ellipse cx="163.3" cy="268.9" rx="4.2" ry="1.3" fill="#721bd1"/><ellipse cx="166.2" cy="272.1" rx="5.8" ry="1.4" fill="#9f2ad0"/><ellipse cx="163.4" cy="274.1" rx="5.8" ry="1.0" fill="#721bd1"/><ellipse cx="166.2" cy="276.8" rx="6.2" ry="1.5" fill="#7b1ed9"/><ellipse cx="162.6" cy="279.1" rx="5.5" ry="1.2" fill="#8e24d5"/><ellipse cx="166.1" cy="281.9" rx="6.6" ry="1.4" fill="#6918c8"/><ellipse cx="163.6" cy="285.1" rx="6.5" ry="1.5" fill="#9426d3"/><ellipse cx="165.5" cy="287.5" rx="5.6" ry="1.5" fill="#6617c5"/><ellipse cx="163.4" cy="290.0" rx="5.3" ry="1.0" fill="#9b28d1"/><ellipse cx="166.4" cy="293.7" rx="5.5" ry="1.4" fill="#6817c8"/><ellipse cx="162.6" cy="296.6" rx="6.6" ry="1.6" fill="#6f1ace"/><ellipse cx="166.2" cy="299.7" rx="4.9" ry="1.7" fill="#6817c7"/><ellipse cx="162.7" cy="302.1" rx="4.6" ry="1.4" fill="#801fd9"/><ellipse cx="165.4" cy="304.2" rx="6.6" ry="1.7" fill="#6316c3"/><ellipse cx="163.0" cy="307.3" rx="6.0" ry="1.2" fill="#711ad0"/><ellipse cx="165.2" cy="310.3" rx="4.7" ry="1.3" fill="#9125d4"/><ellipse cx="163.1" cy="312.6" rx="4.6" ry="1.4" fill="#751cd3"/><ellipse cx="165.6" cy="315.0" rx="5.7" ry="0.9" fill="#7f1fd9"/><ellipse cx="162.6" cy="318.2" rx="5.6" ry="1.3" fill="#6918c8"/><ellipse cx="166.1" cy="320.8" rx="6.0" ry="1.6" fill="#8421d8"/><ellipse cx="162.7" cy="323.7" rx="6.2" ry="1.3" fill="#a02ad0"/><ellipse cx="166.4" cy="326.4" rx="5.5" ry="1.4" fill="#7f1fd9"/><ellipse cx="163.4" cy="329.1" rx="4.3" ry="1.6" fill="#9928d2"/><ellipse cx="165.9" cy="332.7" rx="6.0" ry="1.2" fill="#8c23d6"/><ellipse cx="163.7" cy="335.7" rx="5.3" ry="1.4" fill="#6516c4"/><ellipse cx="166.1" cy="338.4" rx="5.5" ry="1.1" fill="#6416c4"/><rect x="160.1" y="340" width="8.8" height="100" fill="#370a81" opacity="0.8"/><ellipse cx="163.7" cy="341.0" rx="5.9" ry="2.0" fill="#5712b7"/><ellipse cx="166.2" cy="344.1" rx="4.3" ry="1.8" fill="#5f14bf"/><ellipse cx="162.8" cy="347.1" rx="4.0" ry="1.6" fill="#5010ab"/><ellipse cx="165.2" cy="353.9" rx="5.9" ry="1.8" fill="#5b13bb"/><ellipse cx="163.8" cy="356.6" rx="3.8" ry="1.9" fill="#6617c5"/><ellipse cx="166.5" cy="359.1" rx="4.9" ry="1.3" fill="#731bd2"/><ellipse cx="163.6" cy="361.6" rx="5.8" ry="1.4" fill="#721bd0"/><ellipse cx="166.5" cy="364.4" rx="4.2" ry="1.7" fill="#711ad0"/><ellipse cx="163.7" cy="366.8" rx="5.5" ry="1.4" fill="#4e0fa7"/><ellipse cx="165.3" cy="370.3" rx="5.4" ry="1.9" fill="#6b18ca"/><ellipse cx="163.6" cy="376.2" rx="4.2" ry="1.3" fill="#6a18c9"/><ellipse cx="166.0" cy="379.4" rx="5.9" ry="1.6" fill="#5d14bd"/><ellipse cx="163.0" cy="381.7" rx="4.4" ry="1.7" fill="#731bd2"/><ellipse cx="165.9" cy="383.9" rx="5.0" ry="1.1" fill="#6015bf"/><ellipse cx="162.8" cy="386.9" rx="4.0" ry="1.4" fill="#5812b8"/><ellipse cx="165.9" cy="390.2" rx="4.2" ry="1.9" fill="#5912b9"/><ellipse cx="162.6" cy="397.8" rx="4.9" ry="1.3" fill="#5d14bd"/><ellipse cx="166.0" cy="400.7" rx="5.6" ry="1.6" fill="#5c13bc"/><ellipse cx="163.2" cy="403.6" rx="6.0" ry="1.3" fill="#6918c8"/><ellipse cx="165.5" cy="406.9" rx="4.8" ry="1.8" fill="#6617c6"/><ellipse cx="163.2" cy="410.2" rx="4.3" ry="1.6" fill="#5712b7"/><ellipse cx="166.3" cy="417.4" rx="4.2" ry="1.2" fill="#6516c4"/><ellipse cx="163.3" cy="419.4" rx="4.4" ry="1.8" fill="#5f14bf"/><ellipse cx="165.9" cy="421.5" rx="5.7" ry="1.3" fill="#6516c4"/><ellipse cx="163.4" cy="423.8" rx="5.2" ry="1.6" fill="#4d0fa6"/><ellipse cx="166.2" cy="426.2" rx="4.2" ry="1.3" fill="#5010aa"/><ellipse cx="162.8" cy="428.5" rx="3.9" ry="1.5" fill="#6f1ace"/><ellipse cx="165.2" cy="431.1" rx="4.9" ry="1.8" fill="#751cd3"/><ellipse cx="162.9" cy="434.8" rx="3.8" ry="1.3" fill="#6015c0"/><ellipse cx="165.6" cy="438.3" rx="4.8" ry="1.2" fill="#5e14bd"/><ellipse cx="167.0" cy="113" rx="5.4" ry="2" fill="#e33029"/><ellipse cx="167.0" cy="127" rx="5.4" ry="2" fill="#d7294d"/><ellipse cx="163.5" cy="452.0" rx="7.2" ry="1.5" fill="#b52bb0"/><ellipse cx="162.8" cy="454.1" rx="7.4" ry="1.5" fill="#c92c8b"/><ellipse cx="163.8" cy="456.2" rx="8.2" ry="1.5" fill="#d42a5c"/><ellipse cx="164.0" cy="458.3" rx="9.5" ry="1.5" fill="#e93b20"/><ellipse cx="164.1" cy="460.4" rx="11.3" ry="1.5" fill="#ff6200"/><ellipse cx="165.7" cy="462.5" rx="13.6" ry="1.5" fill="#f24913"/><ellipse cx="164.2" cy="464.6" rx="16.5" ry="1.5" fill="#f8540a"/><rect x="202.4" y="98" width="10.2" height="102" fill="#5211af" opacity="0.8"/><ellipse cx="205.2" cy="99.0" rx="6.7" ry="1.2" fill="#7a1dd9"/><ellipse cx="209.7" cy="102.2" rx="9.8" ry="1.3" fill="#9e29d1"/><ellipse cx="205.7" cy="104.8" rx="9.4" ry="1.1" fill="#9c29d1"/><ellipse cx="209.6" cy="107.4" rx="7.1" ry="1.1" fill="#6f1ace"/><ellipse cx="205.9" cy="109.8" rx="8.1" ry="1.8" fill="#7f1fd9"/><ellipse cx="208.9" cy="113.0" rx="7.9" ry="1.0" fill="#9e29d1"/><ellipse cx="205.9" cy="116.1" rx="6.5" ry="1.1" fill="#781dd7"/><ellipse cx="210.4" cy="118.6" rx="9.1" ry="1.1" fill="#7a1dd8"/><ellipse cx="204.6" cy="121.2" rx="7.8" ry="1.6" fill="#6d19cc"/><ellipse cx="208.6" cy="124.4" rx="7.7" ry="1.2" fill="#a22acd"/><ellipse cx="205.8" cy="126.6" rx="9.3" ry="1.4" fill="#9f2ad0"/><ellipse cx="209.0" cy="128.7" rx="6.6" ry="1.0" fill="#7a1dd8"/><ellipse cx="205.8" cy="131.7" rx="8.0" ry="1.4" fill="#6717c6"/><ellipse cx="209.1" cy="133.9" rx="9.2" ry="1.5" fill="#9225d4"/><ellipse cx="205.9" cy="136.2" rx="9.1" ry="1.3" fill="#701acf"/><ellipse cx="209.0" cy="138.8" rx="7.6" ry="1.2" fill="#9e29d1"/><ellipse cx="206.4" cy="141.2" rx="8.8" ry="1.4" fill="#6717c7"/><ellipse cx="209.1" cy="144.6" rx="9.0" ry="1.7" fill="#a92ac2"/><ellipse cx="205.1" cy="146.9" rx="10.0" ry="1.7" fill="#9025d4"/><ellipse cx="208.7" cy="149.3" rx="8.1" ry="1.3" fill="#8c23d6"/><ellipse cx="205.8" cy="151.4" rx="8.3" ry="1.2" fill="#791dd8"/><ellipse cx="209.5" cy="153.7" rx="7.1" ry="1.5" fill="#7a1dd9"/><ellipse cx="205.8" cy="156.1" rx="8.0" ry="1.0" fill="#6a18c9"/><ellipse cx="209.6" cy="159.1" rx="9.1" ry="0.9" fill="#9125d4"/><ellipse cx="206.4" cy="161.8" rx="8.0" ry="0.9" fill="#781dd7"/><ellipse cx="209.5" cy="164.6" rx="7.7" ry="1.1" fill="#8822d7"/><ellipse cx="204.7" cy="166.6" rx="8.6" ry="1.1" fill="#781dd6"/><ellipse cx="209.5" cy="169.8" rx="8.8" ry="1.8" fill="#6f1ace"/><ellipse cx="204.6" cy="172.4" rx="9.3" ry="1.5" fill="#8722d7"/><ellipse cx="209.4" cy="175.4" rx="7.5" ry="1.6" fill="#7b1ed9"/><ellipse cx="204.6" cy="178.9" rx="6.6" ry="1.0" fill="#791dd8"/><ellipse cx="209.3" cy="181.8" rx="10.1" ry="1.0" fill="#761cd4"/><ellipse cx="205.1" cy="184.1" rx="7.3" ry="0.9" fill="#711ad0"/><ellipse cx="209.0" cy="187.1" rx="8.3" ry="1.5" fill="#7a1dd8"/><ellipse cx="205.3" cy="190.0" rx="9.6" ry="1.8" fill="#8b23d6"/><ellipse cx="210.3" cy="192.6" rx="7.6" ry="1.5" fill="#781dd6"/><ellipse cx="204.5" cy="195.7" rx="9.5" ry="1.0" fill="#9025d4"/><ellipse cx="209.7" cy="198.8" rx="7.8" ry="1.2" fill="#8120d9"/><rect x="200.4" y="200" width="11.7" height="140" fill="#5712b6" opacity="0.8"/><rect x="198.4" y="340" width="15.6" height="126" fill="#490e9f" opacity="0.8"/><ellipse cx="204.5" cy="201.0" rx="8.5" ry="1.2" fill="#8b23d6"/><ellipse cx="207.7" cy="203.3" rx="7.7" ry="1.0" fill="#8a23d6"/><ellipse cx="204.8" cy="205.5" rx="9.3" ry="1.6" fill="#9928d2"/><ellipse cx="209.4" cy="208.3" rx="11.1" ry="0.9" fill="#721bd0"/><ellipse cx="203.2" cy="210.7" rx="9.1" ry="1.5" fill="#8922d6"/><ellipse cx="208.2" cy="213.2" rx="8.8" ry="1.6" fill="#9a28d2"/><ellipse cx="203.8" cy="216.6" rx="9.2" ry="1.5" fill="#a42ac9"/><ellipse cx="209.3" cy="219.6" rx="7.9" ry="1.2" fill="#a52ac9"/><ellipse cx="204.6" cy="222.8" rx="7.5" ry="1.4" fill="#761cd4"/><ellipse cx="207.7" cy="226.4" rx="10.4" ry="1.3" fill="#b42bb2"/><ellipse cx="202.9" cy="229.5" rx="11.7" ry="0.9" fill="#801fd9"/><ellipse cx="207.5" cy="232.7" rx="8.6" ry="1.6" fill="#701ace"/><ellipse cx="204.3" cy="236.4" rx="7.5" ry="1.4" fill="#701ace"/><ellipse cx="208.1" cy="239.2" rx="10.8" ry="1.7" fill="#7e1fd9"/><ellipse cx="203.6" cy="241.7" rx="10.7" ry="1.8" fill="#801fd9"/><ellipse cx="208.7" cy="244.3" rx="10.8" ry="1.0" fill="#9827d2"/><ellipse cx="202.9" cy="246.6" rx="8.5" ry="1.3" fill="#6f1ace"/><ellipse cx="207.5" cy="248.8" rx="9.8" ry="1.0" fill="#7b1ed9"/><ellipse cx="204.5" cy="251.9" rx="9.5" ry="1.2" fill="#781dd6"/><ellipse cx="207.6" cy="254.3" rx="11.2" ry="1.2" fill="#6c19cb"/><ellipse cx="203.9" cy="256.5" rx="11.7" ry="1.1" fill="#731bd2"/><ellipse cx="208.4" cy="259.9" rx="10.9" ry="1.3" fill="#8722d7"/><ellipse cx="203.5" cy="262.0" rx="10.1" ry="1.1" fill="#8d24d5"/><ellipse cx="209.7" cy="265.6" rx="9.3" ry="1.7" fill="#a82ac3"/><ellipse cx="205.0" cy="268.9" rx="8.1" ry="1.0" fill="#731bd1"/><ellipse cx="209.2" cy="271.0" rx="8.7" ry="1.4" fill="#7d1eda"/><ellipse cx="202.8" cy="273.0" rx="7.5" ry="1.4" fill="#751cd3"/><ellipse cx="209.1" cy="276.4" rx="9.1" ry="1.6" fill="#a02acf"/><ellipse cx="202.8" cy="279.8" rx="7.8" ry="1.8" fill="#9e29d0"/><ellipse cx="208.0" cy="282.5" rx="11.3" ry="0.9" fill="#9928d2"/><ellipse cx="204.2" cy="285.5" rx="9.0" ry="1.5" fill="#751cd4"/><ellipse cx="208.9" cy="288.8" rx="8.9" ry="1.2" fill="#7d1eda"/><ellipse cx="204.9" cy="292.4" rx="8.8" ry="1.6" fill="#7b1ed9"/><ellipse cx="208.7" cy="294.7" rx="10.3" ry="1.1" fill="#9c29d1"/><ellipse cx="204.3" cy="296.9" rx="9.3" ry="0.9" fill="#711acf"/><ellipse cx="208.2" cy="299.8" rx="9.7" ry="1.8" fill="#8120d9"/><ellipse cx="204.3" cy="302.1" rx="10.6" ry="1.0" fill="#aa2bc1"/><ellipse cx="209.7" cy="305.8" rx="8.4" ry="1.3" fill="#8320d8"/><ellipse cx="204.4" cy="309.0" rx="10.3" ry="1.8" fill="#731bd1"/><ellipse cx="208.3" cy="311.5" rx="11.7" ry="1.0" fill="#731bd2"/><ellipse cx="203.6" cy="314.6" rx="8.3" ry="1.5" fill="#7f1fd9"/><ellipse cx="208.9" cy="318.1" rx="9.6" ry="1.4" fill="#a72ac5"/><ellipse cx="203.5" cy="320.3" rx="9.4" ry="1.5" fill="#a52ac8"/><ellipse cx="208.0" cy="323.0" rx="10.0" ry="1.4" fill="#7f1fd9"/><ellipse cx="203.6" cy="325.9" rx="9.3" ry="1.4" fill="#6b18ca"/><ellipse cx="207.8" cy="328.9" rx="9.4" ry="1.8" fill="#af2bb8"/><ellipse cx="203.4" cy="332.2" rx="11.7" ry="1.3" fill="#7a1dd8"/><ellipse cx="209.7" cy="335.7" rx="9.5" ry="1.1" fill="#701acf"/><ellipse cx="202.9" cy="339.1" rx="11.0" ry="1.6" fill="#9526d3"/><ellipse cx="209.5" cy="342.0" rx="9.7" ry="1.3" fill="#6215c2"/><ellipse cx="203.1" cy="345.3" rx="7.5" ry="1.4" fill="#791dd7"/><ellipse cx="208.0" cy="352.6" rx="10.1" ry="1.9" fill="#8120d9"/><ellipse cx="203.2" cy="355.9" rx="7.3" ry="1.4" fill="#9326d4"/><ellipse cx="207.7" cy="361.6" rx="7.4" ry="1.4" fill="#8e24d5"/><ellipse cx="204.9" cy="365.0" rx="10.9" ry="1.3" fill="#9627d3"/><ellipse cx="207.9" cy="368.1" rx="9.5" ry="1.5" fill="#8922d6"/><ellipse cx="203.6" cy="370.1" rx="7.8" ry="1.6" fill="#6e19cd"/><ellipse cx="209.0" cy="373.3" rx="8.6" ry="1.2" fill="#6516c5"/><ellipse cx="204.2" cy="375.5" rx="7.5" ry="2.0" fill="#7d1eda"/><ellipse cx="208.1" cy="378.7" rx="8.4" ry="1.2" fill="#8421d8"/><ellipse cx="204.1" cy="381.8" rx="8.6" ry="1.6" fill="#8d24d5"/><ellipse cx="208.0" cy="385.4" rx="9.1" ry="1.4" fill="#8421d8"/><ellipse cx="203.5" cy="388.9" rx="8.6" ry="1.9" fill="#8f24d5"/><ellipse cx="208.5" cy="391.5" rx="6.9" ry="1.5" fill="#7d1eda"/><ellipse cx="204.4" cy="394.0" rx="9.6" ry="1.7" fill="#9727d3"/><ellipse cx="209.5" cy="396.4" rx="7.7" ry="1.5" fill="#6516c5"/><ellipse cx="203.7" cy="399.0" rx="9.0" ry="1.2" fill="#8f24d5"/><ellipse cx="209.0" cy="406.1" rx="8.1" ry="1.9" fill="#8621d7"/><ellipse cx="204.0" cy="414.1" rx="8.0" ry="1.7" fill="#711acf"/><ellipse cx="209.7" cy="417.1" rx="8.3" ry="1.8" fill="#9827d2"/><ellipse cx="204.9" cy="420.2" rx="8.6" ry="1.5" fill="#9a28d2"/><ellipse cx="207.9" cy="423.4" rx="8.2" ry="1.2" fill="#9928d2"/><ellipse cx="204.7" cy="426.0" rx="9.4" ry="1.7" fill="#6316c2"/><ellipse cx="209.1" cy="429.3" rx="10.0" ry="1.2" fill="#8c23d6"/><ellipse cx="205.0" cy="437.2" rx="8.1" ry="1.6" fill="#9225d4"/><ellipse cx="208.1" cy="440.1" rx="8.8" ry="1.2" fill="#8a23d6"/><ellipse cx="203.9" cy="443.0" rx="7.9" ry="1.8" fill="#6316c3"/><ellipse cx="207.9" cy="445.5" rx="8.6" ry="1.6" fill="#6215c1"/><ellipse cx="203.1" cy="448.2" rx="7.3" ry="2.0" fill="#6416c3"/><ellipse cx="209.4" cy="451.1" rx="10.8" ry="1.5" fill="#7d1eda"/><ellipse cx="203.4" cy="453.2" rx="9.7" ry="1.2" fill="#8d24d5"/><ellipse cx="208.9" cy="458.9" rx="10.3" ry="1.1" fill="#9727d2"/><ellipse cx="204.3" cy="464.9" rx="8.7" ry="1.7" fill="#9426d3"/><ellipse cx="207.5" cy="350" rx="5.8" ry="2" fill="#d02a6a"/><ellipse cx="207.5" cy="366" rx="5.8" ry="2" fill="#d42a5c"/><ellipse cx="206.6" cy="428.0" rx="6.3" ry="1.5" fill="#b42bb1"/><ellipse cx="207.4" cy="430.1" rx="6.4" ry="1.5" fill="#b22bb4"/><ellipse cx="206.3" cy="432.2" rx="6.4" ry="1.5" fill="#b92baa"/><ellipse cx="206.4" cy="434.3" rx="6.6" ry="1.5" fill="#c92c8a"/><ellipse cx="206.8" cy="436.4" rx="6.7" ry="1.5" fill="#c92c8a"/><ellipse cx="206.8" cy="438.5" rx="7.0" ry="1.5" fill="#d12a67"/><ellipse cx="207.1" cy="440.6" rx="7.2" ry="1.5" fill="#d7294f"/><ellipse cx="208.0" cy="442.7" rx="7.6" ry="1.5" fill="#d72950"/><ellipse cx="207.5" cy="444.8" rx="8.0" ry="1.5" fill="#dd2834"/><ellipse cx="207.3" cy="446.9" rx="8.4" ry="1.5" fill="#f04715"/><ellipse cx="206.9" cy="449.0" rx="8.9" ry="1.5" fill="#f04716"/><ellipse cx="207.4" cy="451.1" rx="9.4" ry="1.5" fill="#fb5906"/><ellipse cx="207.4" cy="453.2" rx="10.0" ry="1.5" fill="#ff6f00"/><ellipse cx="208.0" cy="455.3" rx="10.6" ry="1.5" fill="#ff9100"/><ellipse cx="207.9" cy="457.4" rx="11.3" ry="1.5" fill="#ff7e00"/><ellipse cx="207.3" cy="459.5" rx="12.0" ry="1.5" fill="#ffd81c"/><ellipse cx="209.3" cy="461.6" rx="12.8" ry="1.5" fill="#ffe82d"/><ellipse cx="208.7" cy="463.7" rx="13.7" ry="1.5" fill="#fff857"/><rect x="240.2" y="98" width="6.6" height="242" fill="#5a13ba" opacity="0.8"/><rect x="239.1" y="340" width="8.8" height="126" fill="#4c0fa5" opacity="0.8"/><ellipse cx="242.4" cy="99.0" rx="5.7" ry="1.4" fill="#8421d8"/><ellipse cx="244.8" cy="101.5" rx="6.0" ry="0.9" fill="#8f24d5"/><ellipse cx="242.5" cy="103.7" rx="6.1" ry="1.3" fill="#7b1ed9"/><ellipse cx="244.5" cy="107.2" rx="5.8" ry="1.0" fill="#8722d7"/><ellipse cx="242.4" cy="110.8" rx="4.9" ry="1.6" fill="#af2bb9"/><ellipse cx="244.2" cy="114.2" rx="6.0" ry="0.9" fill="#9c29d1"/><ellipse cx="241.6" cy="117.2" rx="5.7" ry="0.9" fill="#9426d3"/><ellipse cx="244.9" cy="120.8" rx="4.2" ry="1.6" fill="#a72ac6"/><ellipse cx="241.5" cy="123.5" rx="6.4" ry="1.0" fill="#9f2ad0"/><ellipse cx="245.2" cy="126.9" rx="5.1" ry="1.3" fill="#ac2bbd"/><ellipse cx="242.4" cy="129.6" rx="6.0" ry="1.0" fill="#8f24d5"/><ellipse cx="245.0" cy="131.8" rx="5.5" ry="1.0" fill="#b02bb8"/><ellipse cx="241.6" cy="134.0" rx="5.5" ry="1.7" fill="#801fd9"/><ellipse cx="244.9" cy="136.4" rx="6.2" ry="1.0" fill="#8822d7"/><ellipse cx="242.8" cy="139.8" rx="5.2" ry="1.2" fill="#8d24d5"/><ellipse cx="244.8" cy="143.0" rx="5.8" ry="1.2" fill="#ba2ba8"/><ellipse cx="241.9" cy="146.3" rx="4.6" ry="1.4" fill="#731bd1"/><ellipse cx="244.4" cy="148.7" rx="5.0" ry="1.4" fill="#8320d8"/><ellipse cx="242.1" cy="151.5" rx="6.2" ry="1.2" fill="#8621d7"/><ellipse cx="245.5" cy="154.5" rx="5.0" ry="1.5" fill="#8e24d5"/><ellipse cx="241.9" cy="156.9" rx="5.6" ry="1.1" fill="#7c1eda"/><ellipse cx="244.7" cy="159.0" rx="5.9" ry="1.3" fill="#af2bba"/><ellipse cx="241.6" cy="162.1" rx="6.4" ry="1.3" fill="#9526d3"/><ellipse cx="245.2" cy="164.9" rx="4.4" ry="1.2" fill="#7a1dd8"/><ellipse cx="241.9" cy="168.4" rx="5.6" ry="1.4" fill="#6f1ace"/><ellipse cx="245.4" cy="170.9" rx="6.0" ry="1.6" fill="#7f1fd9"/><ellipse cx="242.6" cy="173.1" rx="4.7" ry="1.4" fill="#aa2bc1"/><ellipse cx="245.2" cy="176.1" rx="5.6" ry="1.7" fill="#741bd2"/><ellipse cx="242.4" cy="179.7" rx="6.5" ry="1.5" fill="#a02ad0"/><ellipse cx="245.1" cy="182.2" rx="4.8" ry="1.1" fill="#b22bb4"/><ellipse cx="242.5" cy="184.2" rx="4.9" ry="1.1" fill="#9326d4"/><ellipse cx="244.5" cy="186.5" rx="4.9" ry="1.1" fill="#8e24d5"/><ellipse cx="242.6" cy="189.3" rx="6.3" ry="1.7" fill="#b42bb1"/><ellipse cx="245.1" cy="192.4" rx="5.5" ry="1.5" fill="#9326d4"/><ellipse cx="242.5" cy="195.9" rx="4.3" ry="1.7" fill="#a92ac2"/><ellipse cx="244.5" cy="198.5" rx="5.3" ry="1.2" fill="#aa2bc0"/><ellipse cx="242.2" cy="201.8" rx="5.5" ry="1.2" fill="#bc2ba5"/><ellipse cx="244.3" cy="204.2" rx="6.5" ry="1.5" fill="#bd2ca4"/><ellipse cx="242.7" cy="206.3" rx="5.5" ry="1.0" fill="#b72bad"/><ellipse cx="245.3" cy="210.0" rx="4.3" ry="1.5" fill="#7f1fd9"/><ellipse cx="242.1" cy="212.1" rx="6.6" ry="1.5" fill="#9326d4"/><ellipse cx="244.8" cy="215.5" rx="4.4" ry="1.4" fill="#b02bb7"/><ellipse cx="242.4" cy="217.9" rx="5.4" ry="1.1" fill="#9326d4"/><ellipse cx="244.8" cy="221.1" rx="4.4" ry="1.3" fill="#8922d7"/><ellipse cx="242.1" cy="224.0" rx="4.5" ry="1.2" fill="#bf2ca0"/><ellipse cx="245.4" cy="226.6" rx="6.5" ry="1.8" fill="#a12acf"/><ellipse cx="241.6" cy="230.1" rx="4.2" ry="1.3" fill="#b22bb4"/><ellipse cx="245.0" cy="233.1" rx="5.7" ry="1.7" fill="#9f2ad0"/><ellipse cx="241.6" cy="235.3" rx="4.3" ry="1.0" fill="#9125d4"/><ellipse cx="244.2" cy="238.8" rx="4.3" ry="1.6" fill="#bd2ca3"/><ellipse cx="242.1" cy="241.9" rx="6.0" ry="1.6" fill="#9125d4"/><ellipse cx="245.2" cy="243.9" rx="6.5" ry="1.7" fill="#711acf"/><ellipse cx="242.4" cy="246.6" rx="4.2" ry="1.6" fill="#8220d8"/><ellipse cx="244.9" cy="249.1" rx="5.0" ry="1.5" fill="#9727d3"/><ellipse cx="241.7" cy="251.9" rx="4.6" ry="1.0" fill="#7a1dd8"/><ellipse cx="245.2" cy="254.3" rx="5.0" ry="1.1" fill="#8e24d5"/><ellipse cx="242.1" cy="257.4" rx="4.8" ry="1.7" fill="#7c1eda"/><ellipse cx="244.6" cy="259.7" rx="5.0" ry="1.6" fill="#7a1dd8"/><ellipse cx="242.1" cy="262.9" rx="4.4" ry="1.6" fill="#ab2bc0"/><ellipse cx="244.7" cy="265.3" rx="6.6" ry="1.2" fill="#791dd7"/><ellipse cx="241.5" cy="267.9" rx="5.1" ry="1.0" fill="#b82bab"/><ellipse cx="244.6" cy="271.2" rx="6.1" ry="1.2" fill="#aa2bc1"/><ellipse cx="241.9" cy="273.7" rx="5.3" ry="1.6" fill="#9727d2"/><ellipse cx="244.7" cy="275.7" rx="4.3" ry="1.7" fill="#8f24d5"/><ellipse cx="241.7" cy="278.0" rx="6.5" ry="1.7" fill="#781dd7"/><ellipse cx="244.3" cy="280.6" rx="5.9" ry="1.8" fill="#ba2ba8"/><ellipse cx="241.9" cy="282.9" rx="6.3" ry="1.6" fill="#741bd3"/><ellipse cx="244.7" cy="286.5" rx="4.5" ry="1.1" fill="#8c23d6"/><ellipse cx="242.6" cy="290.1" rx="5.0" ry="0.9" fill="#711acf"/><ellipse cx="244.3" cy="292.6" rx="5.5" ry="1.4" fill="#771cd5"/><ellipse cx="242.1" cy="295.6" rx="6.5" ry="1.0" fill="#a82ac4"/><ellipse cx="244.6" cy="298.0" rx="6.0" ry="1.7" fill="#711ad0"/><ellipse cx="242.4" cy="300.8" rx="5.6" ry="1.2" fill="#761cd4"/><ellipse cx="244.8" cy="304.2" rx="5.6" ry="1.7" fill="#bf2ca0"/><ellipse cx="241.6" cy="307.0" rx="6.5" ry="0.9" fill="#781dd6"/><ellipse cx="244.2" cy="310.3" rx="4.6" ry="1.1" fill="#8722d7"/><ellipse cx="242.8" cy="313.5" rx="4.7" ry="1.6" fill="#791dd7"/><ellipse cx="244.8" cy="316.4" rx="4.6" ry="0.9" fill="#9d29d1"/><ellipse cx="242.5" cy="318.9" rx="5.7" ry="1.2" fill="#9426d3"/><ellipse cx="244.6" cy="321.7" rx="5.0" ry="1.7" fill="#9a28d2"/><ellipse cx="242.1" cy="324.7" rx="5.3" ry="1.2" fill="#8922d7"/><ellipse cx="245.4" cy="328.2" rx="6.2" ry="1.7" fill="#7b1ed9"/><ellipse cx="241.5" cy="330.5" rx="4.9" ry="1.1" fill="#9326d4"/><ellipse cx="244.9" cy="333.7" rx="4.6" ry="1.8" fill="#9125d4"/><ellipse cx="241.9" cy="336.2" rx="5.0" ry="1.4" fill="#721bd1"/><ellipse cx="244.8" cy="339.0" rx="5.1" ry="0.9" fill="#ba2ba9"/><ellipse cx="242.0" cy="341.9" rx="4.9" ry="1.2" fill="#8120d9"/><ellipse cx="245.4" cy="344.7" rx="4.4" ry="1.5" fill="#9627d3"/><ellipse cx="241.7" cy="346.9" rx="5.7" ry="1.3" fill="#8421d8"/><ellipse cx="244.9" cy="350.4" rx="6.0" ry="1.5" fill="#781dd6"/><ellipse cx="242.2" cy="353.2" rx="4.6" ry="1.3" fill="#9627d3"/><ellipse cx="245.5" cy="355.6" rx="6.0" ry="1.7" fill="#9326d4"/><ellipse cx="241.8" cy="359.0" rx="4.2" ry="1.8" fill="#c92b89"/><ellipse cx="244.2" cy="361.5" rx="5.0" ry="1.4" fill="#c42c99"/><ellipse cx="241.6" cy="364.8" rx="5.3" ry="1.2" fill="#9b28d1"/><ellipse cx="245.3" cy="368.0" rx="4.5" ry="1.3" fill="#a02acf"/><ellipse cx="242.0" cy="371.1" rx="4.0" ry="1.8" fill="#a12acf"/><ellipse cx="245.2" cy="373.2" rx="5.9" ry="1.6" fill="#9025d4"/><ellipse cx="242.3" cy="376.8" rx="4.6" ry="1.1" fill="#7b1ed9"/><ellipse cx="245.0" cy="379.1" rx="5.6" ry="1.7" fill="#6e19cd"/><ellipse cx="242.6" cy="382.0" rx="5.3" ry="1.7" fill="#701acf"/><ellipse cx="245.4" cy="385.6" rx="4.4" ry="2.0" fill="#9c29d1"/><ellipse cx="242.4" cy="388.6" rx="4.4" ry="1.6" fill="#9125d4"/><ellipse cx="245.1" cy="396.6" rx="4.3" ry="1.3" fill="#7a1dd8"/><ellipse cx="242.7" cy="399.5" rx="3.9" ry="1.4" fill="#731bd1"/><ellipse cx="244.7" cy="402.4" rx="4.7" ry="1.3" fill="#8621d7"/><ellipse cx="242.3" cy="405.2" rx="5.4" ry="1.8" fill="#6918c8"/><ellipse cx="245.4" cy="408.2" rx="4.3" ry="1.6" fill="#9d29d1"/><ellipse cx="241.8" cy="411.9" rx="3.9" ry="1.2" fill="#6c19cb"/><ellipse cx="245.1" cy="414.8" rx="4.5" ry="1.8" fill="#8c23d5"/><ellipse cx="242.3" cy="417.9" rx="4.0" ry="1.5" fill="#7a1dd8"/><ellipse cx="244.3" cy="421.6" rx="4.4" ry="1.7" fill="#6516c4"/><ellipse cx="242.1" cy="424.3" rx="5.5" ry="1.5" fill="#781dd6"/><ellipse cx="244.2" cy="427.4" rx="5.5" ry="1.2" fill="#8421d8"/><ellipse cx="242.7" cy="429.5" rx="4.7" ry="1.5" fill="#6316c3"/><ellipse cx="244.8" cy="431.7" rx="5.2" ry="1.4" fill="#9627d3"/><ellipse cx="242.5" cy="435.3" rx="5.8" ry="1.6" fill="#721bd0"/><ellipse cx="244.5" cy="438.0" rx="5.7" ry="1.7" fill="#9928d2"/><ellipse cx="242.2" cy="440.8" rx="4.5" ry="1.7" fill="#791dd7"/><ellipse cx="244.8" cy="443.5" rx="4.9" ry="1.9" fill="#9025d4"/><ellipse cx="241.6" cy="446.3" rx="5.6" ry="1.5" fill="#9a28d2"/><ellipse cx="245.1" cy="449.4" rx="6.0" ry="1.7" fill="#711ad0"/><ellipse cx="242.5" cy="452.6" rx="5.6" ry="1.6" fill="#8722d7"/><ellipse cx="244.2" cy="456.2" rx="4.7" ry="1.8" fill="#8c23d6"/><ellipse cx="242.3" cy="458.7" rx="6.1" ry="1.3" fill="#6e19cc"/><ellipse cx="243.5" cy="112" rx="3.7" ry="2" fill="#e53426"/><ellipse cx="243.5" cy="127" rx="3.7" ry="2" fill="#de2830"/><ellipse cx="243.5" cy="215" rx="3.7" ry="2" fill="#e53426"/><ellipse cx="243.5" cy="232" rx="3.7" ry="2" fill="#d42a5c"/><ellipse cx="243.5" cy="320" rx="3.7" ry="2" fill="#d42a5c"/><ellipse cx="243.5" cy="332" rx="3.7" ry="2" fill="#d7294d"/><ellipse cx="243.5" cy="345" rx="3.7" ry="2" fill="#cd2b79"/><ellipse cx="243.5" cy="360" rx="3.7" ry="2" fill="#ff6c00"/><ellipse cx="244.2" cy="444.0" rx="3.6" ry="1.5" fill="#b12bb6"/><ellipse cx="243.9" cy="446.1" rx="3.6" ry="1.5" fill="#b72bad"/><ellipse cx="244.4" cy="448.2" rx="3.8" ry="1.5" fill="#cc2b7c"/><ellipse cx="244.3" cy="450.3" rx="4.0" ry="1.5" fill="#d82949"/><ellipse cx="244.8" cy="452.4" rx="4.3" ry="1.5" fill="#db283c"/><ellipse cx="244.6" cy="454.5" rx="4.7" ry="1.5" fill="#f14815"/><ellipse cx="244.0" cy="456.6" rx="5.3" ry="1.5" fill="#ff7600"/><ellipse cx="244.6" cy="458.7" rx="5.9" ry="1.5" fill="#ff8b00"/><ellipse cx="246.1" cy="460.8" rx="6.6" ry="1.5" fill="#ffb900"/><ellipse cx="245.5" cy="462.9" rx="7.3" ry="1.5" fill="#ffdf24"/><ellipse cx="270.5" cy="99.0" rx="6.7" ry="1.7" fill="#1e044d"/><ellipse cx="273.1" cy="110.0" rx="7.8" ry="1.4" fill="#1d044c"/><ellipse cx="269.4" cy="121.8" rx="6.0" ry="1.1" fill="#200553"/><ellipse cx="272.9" cy="124.4" rx="6.8" ry="1.0" fill="#18043e"/><ellipse cx="270.3" cy="126.9" rx="5.4" ry="1.0" fill="#23055b"/><ellipse cx="272.7" cy="129.1" rx="6.3" ry="1.5" fill="#210555"/><ellipse cx="270.4" cy="131.1" rx="7.0" ry="1.5" fill="#220559"/><ellipse cx="273.0" cy="161.0" rx="5.8" ry="1.3" fill="#23055b"/><ellipse cx="269.2" cy="164.4" rx="5.6" ry="1.1" fill="#2a076c"/><ellipse cx="272.5" cy="181.6" rx="6.0" ry="1.5" fill="#2c076f"/><ellipse cx="270.4" cy="184.0" rx="6.0" ry="1.1" fill="#310878"/><ellipse cx="272.4" cy="196.8" rx="5.1" ry="1.2" fill="#2a066b"/><ellipse cx="270.6" cy="200.5" rx="5.2" ry="0.9" fill="#310877"/><ellipse cx="272.8" cy="207.0" rx="6.3" ry="1.2" fill="#2d0770"/><ellipse cx="269.9" cy="226.6" rx="5.8" ry="1.7" fill="#270666"/><rect x="267.6" y="230" width="7.8" height="110" fill="#4a0fa1" opacity="0.8"/><rect x="266.3" y="340" width="10.4" height="126" fill="#3e0c8d" opacity="0.8"/><ellipse cx="273.3" cy="231.0" rx="6.9" ry="1.4" fill="#7c1eda"/><ellipse cx="269.9" cy="233.7" rx="6.3" ry="1.4" fill="#711acf"/><ellipse cx="273.7" cy="236.6" rx="5.6" ry="0.9" fill="#8822d7"/><ellipse cx="269.5" cy="239.1" rx="6.7" ry="1.2" fill="#5f14bf"/><ellipse cx="273.6" cy="241.4" rx="6.9" ry="1.5" fill="#8e24d5"/><ellipse cx="270.1" cy="244.7" rx="6.5" ry="1.7" fill="#741bd2"/><ellipse cx="273.6" cy="248.4" rx="5.2" ry="1.1" fill="#9125d4"/><ellipse cx="269.9" cy="252.0" rx="5.8" ry="1.7" fill="#781dd6"/><ellipse cx="272.4" cy="254.9" rx="7.8" ry="0.9" fill="#9727d3"/><ellipse cx="269.7" cy="257.2" rx="5.3" ry="1.4" fill="#711acf"/><ellipse cx="273.5" cy="260.8" rx="6.6" ry="1.4" fill="#731bd1"/><ellipse cx="269.3" cy="263.1" rx="6.9" ry="1.1" fill="#741bd3"/><ellipse cx="272.8" cy="265.8" rx="6.6" ry="1.5" fill="#781dd6"/><ellipse cx="269.7" cy="267.9" rx="5.6" ry="1.0" fill="#6918c8"/><ellipse cx="273.8" cy="271.2" rx="6.5" ry="1.0" fill="#6e19cd"/><ellipse cx="269.4" cy="274.2" rx="7.0" ry="1.6" fill="#6b18ca"/><ellipse cx="273.5" cy="276.3" rx="5.3" ry="1.1" fill="#6015bf"/><ellipse cx="270.0" cy="278.4" rx="7.7" ry="1.2" fill="#6617c5"/><ellipse cx="272.6" cy="280.8" rx="6.8" ry="1.5" fill="#8b23d6"/><ellipse cx="269.8" cy="284.4" rx="6.0" ry="1.6" fill="#6015c0"/><ellipse cx="272.6" cy="286.8" rx="6.4" ry="1.8" fill="#8320d8"/><ellipse cx="269.3" cy="289.3" rx="6.9" ry="1.0" fill="#6b18ca"/><ellipse cx="272.7" cy="291.6" rx="7.4" ry="1.5" fill="#6918c8"/><ellipse cx="269.7" cy="295.2" rx="6.0" ry="1.5" fill="#7f1fd9"/><ellipse cx="273.0" cy="298.1" rx="6.0" ry="1.4" fill="#6115c0"/><ellipse cx="269.2" cy="300.2" rx="6.0" ry="1.2" fill="#5f14bf"/><ellipse cx="273.7" cy="302.4" rx="5.5" ry="1.4" fill="#7b1ed9"/><ellipse cx="269.8" cy="305.3" rx="5.6" ry="1.1" fill="#8621d7"/><ellipse cx="273.6" cy="308.5" rx="5.0" ry="1.1" fill="#6215c1"/><ellipse cx="269.8" cy="311.3" rx="7.1" ry="1.6" fill="#8c23d6"/><ellipse cx="273.6" cy="314.5" rx="5.4" ry="1.0" fill="#6015c0"/><ellipse cx="269.4" cy="316.6" rx="6.0" ry="1.0" fill="#5f14bf"/><ellipse cx="273.2" cy="318.7" rx="7.6" ry="0.9" fill="#8c23d5"/><ellipse cx="270.4" cy="320.8" rx="5.3" ry="1.1" fill="#6c19cb"/><ellipse cx="272.5" cy="323.9" rx="6.5" ry="1.2" fill="#6617c5"/><ellipse cx="269.9" cy="326.2" rx="6.0" ry="1.3" fill="#791dd7"/><ellipse cx="272.6" cy="328.3" rx="5.9" ry="0.9" fill="#7c1eda"/><ellipse cx="270.1" cy="331.8" rx="6.5" ry="1.7" fill="#7a1dd8"/><ellipse cx="273.4" cy="334.0" rx="6.0" ry="1.5" fill="#701acf"/><ellipse cx="270.3" cy="337.5" rx="5.8" ry="1.6" fill="#6015bf"/><ellipse cx="272.6" cy="340.9" rx="5.5" ry="1.9" fill="#7e1fda"/><ellipse cx="269.6" cy="344.2" rx="6.9" ry="1.4" fill="#8120d9"/><ellipse cx="273.2" cy="347.2" rx="7.0" ry="2.0" fill="#7c1eda"/><ellipse cx="270.5" cy="350.6" rx="5.6" ry="1.6" fill="#801fd9"/><ellipse cx="273.3" cy="352.9" rx="5.2" ry="1.4" fill="#5712b7"/><ellipse cx="269.4" cy="355.9" rx="7.2" ry="1.3" fill="#6817c7"/><ellipse cx="273.6" cy="358.5" rx="5.0" ry="1.6" fill="#5d14bd"/><ellipse cx="269.7" cy="367.1" rx="4.6" ry="1.7" fill="#8220d8"/><ellipse cx="273.6" cy="369.5" rx="7.1" ry="1.5" fill="#741bd3"/><ellipse cx="269.6" cy="372.0" rx="5.7" ry="1.7" fill="#6215c2"/><ellipse cx="272.6" cy="374.3" rx="6.2" ry="1.2" fill="#801fd9"/><ellipse cx="269.6" cy="376.3" rx="6.1" ry="1.7" fill="#5d14bd"/><ellipse cx="273.1" cy="386.6" rx="6.9" ry="1.4" fill="#731bd1"/><ellipse cx="270.4" cy="388.8" rx="4.5" ry="1.2" fill="#5511b4"/><ellipse cx="273.2" cy="390.9" rx="6.8" ry="1.4" fill="#5a13ba"/><ellipse cx="269.3" cy="393.1" rx="6.0" ry="1.6" fill="#751cd3"/><ellipse cx="272.7" cy="396.6" rx="6.6" ry="1.7" fill="#8120d9"/><ellipse cx="269.9" cy="403.3" rx="5.9" ry="1.2" fill="#6f1ace"/><ellipse cx="273.8" cy="405.6" rx="6.7" ry="1.4" fill="#731bd1"/><ellipse cx="270.1" cy="408.3" rx="7.1" ry="1.5" fill="#781dd6"/><ellipse cx="273.8" cy="411.0" rx="4.6" ry="1.5" fill="#6416c4"/><ellipse cx="270.5" cy="413.1" rx="5.6" ry="1.6" fill="#5b13bb"/><ellipse cx="272.9" cy="416.4" rx="7.0" ry="1.3" fill="#6215c1"/><ellipse cx="270.5" cy="418.5" rx="4.8" ry="1.9" fill="#6a18c9"/><ellipse cx="273.2" cy="426.3" rx="4.6" ry="1.9" fill="#6817c7"/><ellipse cx="270.5" cy="428.8" rx="4.5" ry="1.7" fill="#771cd5"/><ellipse cx="272.6" cy="431.6" rx="4.5" ry="1.6" fill="#771cd6"/><ellipse cx="270.4" cy="434.4" rx="6.3" ry="1.2" fill="#7d1eda"/><ellipse cx="272.8" cy="438.0" rx="6.5" ry="1.9" fill="#701ace"/><ellipse cx="269.2" cy="445.4" rx="6.9" ry="1.3" fill="#6d19cc"/><ellipse cx="273.4" cy="448.3" rx="6.6" ry="1.4" fill="#5c13bc"/><ellipse cx="270.0" cy="451.0" rx="4.8" ry="1.2" fill="#751cd3"/><ellipse cx="273.3" cy="453.3" rx="5.5" ry="1.4" fill="#6a18c9"/><ellipse cx="270.5" cy="455.6" rx="6.4" ry="1.6" fill="#6f1ace"/><ellipse cx="273.6" cy="458.7" rx="7.2" ry="1.5" fill="#6f1ace"/><ellipse cx="270.1" cy="461.8" rx="6.3" ry="1.4" fill="#6717c6"/><ellipse cx="273.3" cy="464.4" rx="6.8" ry="1.4" fill="#781dd6"/><ellipse cx="270.6" cy="440.0" rx="5.0" ry="1.5" fill="#a42acb"/><ellipse cx="271.8" cy="442.1" rx="5.0" ry="1.5" fill="#ad2bbc"/><ellipse cx="271.0" cy="444.2" rx="5.1" ry="1.5" fill="#cc2b7d"/><ellipse cx="270.8" cy="446.3" rx="5.4" ry="1.5" fill="#cc2b7c"/><ellipse cx="272.0" cy="448.4" rx="5.7" ry="1.5" fill="#d22a64"/><ellipse cx="271.0" cy="450.5" rx="6.1" ry="1.5" fill="#ec401c"/><ellipse cx="272.6" cy="452.6" rx="6.6" ry="1.5" fill="#ea3c1f"/><ellipse cx="273.0" cy="454.7" rx="7.1" ry="1.5" fill="#f44d10"/><ellipse cx="272.3" cy="456.8" rx="7.8" ry="1.5" fill="#ff6700"/><ellipse cx="272.2" cy="458.9" rx="8.6" ry="1.5" fill="#ff7200"/><ellipse cx="272.3" cy="461.0" rx="9.4" ry="1.5" fill="#ff7f00"/><ellipse cx="272.0" cy="463.1" rx="10.4" ry="1.5" fill="#ff9100"/><ellipse cx="286.4" cy="99.0" rx="4.6" ry="1.0" fill="#280669"/><ellipse cx="288.2" cy="101.1" rx="5.3" ry="1.4" fill="#250661"/><ellipse cx="286.7" cy="118.1" rx="6.1" ry="1.0" fill="#250660"/><ellipse cx="289.3" cy="126.8" rx="6.5" ry="1.6" fill="#250660"/><ellipse cx="286.0" cy="129.9" rx="4.6" ry="1.4" fill="#280668"/><ellipse cx="289.1" cy="161.0" rx="5.6" ry="1.6" fill="#5010aa"/><ellipse cx="286.3" cy="170.3" rx="5.3" ry="1.4" fill="#3f0c8f"/><ellipse cx="289.3" cy="172.8" rx="6.1" ry="0.9" fill="#400c90"/><ellipse cx="286.0" cy="184.2" rx="5.2" ry="1.4" fill="#4b0fa2"/><ellipse cx="289.1" cy="186.5" rx="4.4" ry="1.0" fill="#3d0b8b"/><ellipse cx="286.8" cy="188.9" rx="6.6" ry="1.7" fill="#4a0fa1"/><ellipse cx="289.2" cy="196.5" rx="6.2" ry="1.7" fill="#3a0b86"/><ellipse cx="286.7" cy="207.0" rx="5.0" ry="1.1" fill="#460d9a"/><ellipse cx="288.7" cy="210.1" rx="5.3" ry="1.3" fill="#5211ae"/><ellipse cx="285.9" cy="212.8" rx="5.0" ry="1.4" fill="#4f10a8"/><ellipse cx="288.2" cy="225.0" rx="4.9" ry="1.2" fill="#5511b2"/><rect x="284.2" y="230" width="6.6" height="110" fill="#5211af" opacity="0.8"/><rect x="283.1" y="340" width="8.8" height="126" fill="#450d99" opacity="0.8"/><ellipse cx="286.3" cy="231.0" rx="4.6" ry="1.0" fill="#9c29d1"/><ellipse cx="288.5" cy="233.0" rx="5.9" ry="1.6" fill="#9627d3"/><ellipse cx="286.4" cy="235.2" rx="6.0" ry="1.6" fill="#6f1ace"/><ellipse cx="288.6" cy="237.7" rx="5.3" ry="1.6" fill="#7e1fda"/><ellipse cx="285.6" cy="240.1" rx="5.6" ry="1.8" fill="#9a28d2"/><ellipse cx="289.5" cy="243.7" rx="4.7" ry="1.6" fill="#6e19cd"/><ellipse cx="286.3" cy="245.9" rx="6.2" ry="1.5" fill="#751cd4"/><ellipse cx="289.3" cy="248.3" rx="5.4" ry="0.9" fill="#a12acf"/><ellipse cx="286.3" cy="250.8" rx="6.5" ry="1.4" fill="#751cd3"/><ellipse cx="288.5" cy="254.2" rx="5.9" ry="1.2" fill="#6918c8"/><ellipse cx="286.8" cy="256.5" rx="5.2" ry="1.4" fill="#6918c8"/><ellipse cx="288.5" cy="259.2" rx="4.2" ry="1.5" fill="#8621d7"/><ellipse cx="286.3" cy="261.8" rx="4.8" ry="0.9" fill="#8120d9"/><ellipse cx="288.3" cy="264.3" rx="4.3" ry="1.3" fill="#751cd3"/><ellipse cx="286.4" cy="266.3" rx="5.3" ry="1.4" fill="#9f2ad0"/><ellipse cx="289.2" cy="268.4" rx="5.5" ry="1.3" fill="#6b18ca"/><ellipse cx="286.2" cy="271.0" rx="6.1" ry="1.7" fill="#9526d3"/><ellipse cx="289.0" cy="274.5" rx="5.3" ry="1.4" fill="#9326d4"/><ellipse cx="285.8" cy="277.5" rx="6.3" ry="0.9" fill="#8320d8"/><ellipse cx="288.9" cy="280.7" rx="6.4" ry="0.9" fill="#8a23d6"/><ellipse cx="285.6" cy="283.5" rx="4.6" ry="1.4" fill="#791dd7"/><ellipse cx="288.8" cy="285.8" rx="6.0" ry="1.2" fill="#9526d3"/><ellipse cx="286.5" cy="289.3" rx="6.0" ry="1.7" fill="#6617c5"/><ellipse cx="288.3" cy="292.6" rx="5.9" ry="1.6" fill="#741bd2"/><ellipse cx="286.1" cy="294.7" rx="4.3" ry="1.3" fill="#a52ac9"/><ellipse cx="289.3" cy="297.3" rx="6.4" ry="1.0" fill="#6b18ca"/><ellipse cx="286.0" cy="300.0" rx="4.4" ry="1.2" fill="#741bd2"/><ellipse cx="288.7" cy="302.7" rx="5.6" ry="1.7" fill="#7f1fd9"/><ellipse cx="285.7" cy="306.3" rx="4.7" ry="1.1" fill="#a22acd"/><ellipse cx="289.0" cy="309.1" rx="5.0" ry="1.8" fill="#8d24d5"/><ellipse cx="286.7" cy="311.6" rx="4.7" ry="1.6" fill="#6617c6"/><ellipse cx="288.5" cy="315.1" rx="4.8" ry="1.6" fill="#6817c7"/><ellipse cx="286.7" cy="318.6" rx="6.5" ry="1.8" fill="#731bd2"/><ellipse cx="289.1" cy="321.8" rx="6.0" ry="1.4" fill="#9025d5"/><ellipse cx="286.0" cy="324.3" rx="5.0" ry="1.5" fill="#8320d8"/><ellipse cx="288.4" cy="326.5" rx="4.7" ry="1.8" fill="#a82ac3"/><ellipse cx="285.7" cy="330.1" rx="6.2" ry="1.6" fill="#a42aca"/><ellipse cx="289.1" cy="333.1" rx="6.2" ry="1.7" fill="#8822d7"/><ellipse cx="285.9" cy="335.2" rx="5.4" ry="1.7" fill="#8521d8"/><ellipse cx="289.1" cy="338.9" rx="5.8" ry="1.5" fill="#7d1eda"/><ellipse cx="285.7" cy="341.5" rx="5.5" ry="1.8" fill="#5f14be"/><ellipse cx="289.1" cy="344.3" rx="5.1" ry="1.2" fill="#711ad0"/><ellipse cx="286.5" cy="346.3" rx="4.3" ry="1.5" fill="#6717c6"/><ellipse cx="288.2" cy="349.5" rx="5.8" ry="1.6" fill="#7c1eda"/><ellipse cx="286.4" cy="352.7" rx="3.9" ry="1.7" fill="#6c19cb"/><ellipse cx="289.0" cy="354.8" rx="5.2" ry="1.8" fill="#8c23d6"/><ellipse cx="286.2" cy="358.4" rx="3.8" ry="1.7" fill="#9125d4"/><ellipse cx="288.6" cy="361.5" rx="3.8" ry="1.8" fill="#781dd7"/><ellipse cx="285.7" cy="364.6" rx="5.6" ry="2.0" fill="#781dd6"/><ellipse cx="288.2" cy="367.4" rx="4.5" ry="1.4" fill="#6e19cd"/><ellipse cx="285.9" cy="371.0" rx="4.0" ry="1.4" fill="#6918c8"/><ellipse cx="288.7" cy="373.7" rx="5.7" ry="1.4" fill="#781dd6"/><ellipse cx="286.5" cy="377.4" rx="3.8" ry="1.4" fill="#751cd3"/><ellipse cx="288.9" cy="380.9" rx="4.4" ry="1.6" fill="#731bd1"/><ellipse cx="285.8" cy="383.0" rx="5.6" ry="1.7" fill="#6918c8"/><ellipse cx="288.2" cy="386.0" rx="4.1" ry="1.8" fill="#801fd9"/><ellipse cx="286.6" cy="389.5" rx="5.1" ry="1.7" fill="#8220d8"/><ellipse cx="288.8" cy="392.5" rx="4.4" ry="2.0" fill="#9025d4"/><ellipse cx="286.4" cy="399.6" rx="5.2" ry="1.4" fill="#6617c5"/><ellipse cx="289.3" cy="402.8" rx="6.0" ry="1.3" fill="#9225d4"/><ellipse cx="285.9" cy="413.2" rx="5.0" ry="1.1" fill="#6215c1"/><ellipse cx="288.7" cy="421.7" rx="3.8" ry="1.7" fill="#731bd2"/><ellipse cx="285.9" cy="423.8" rx="4.0" ry="1.7" fill="#8d24d5"/><ellipse cx="288.9" cy="427.0" rx="4.7" ry="1.6" fill="#8220d8"/><ellipse cx="286.4" cy="429.5" rx="5.6" ry="1.4" fill="#8a23d6"/><ellipse cx="288.9" cy="437.2" rx="3.9" ry="1.2" fill="#9125d4"/><ellipse cx="285.6" cy="439.3" rx="4.5" ry="1.3" fill="#791dd7"/><ellipse cx="288.8" cy="441.6" rx="4.8" ry="1.4" fill="#5d14bd"/><ellipse cx="286.1" cy="445.2" rx="4.0" ry="1.1" fill="#8621d7"/><ellipse cx="289.1" cy="448.3" rx="4.3" ry="1.7" fill="#5e14be"/><ellipse cx="286.6" cy="451.7" rx="6.1" ry="1.9" fill="#6717c6"/><ellipse cx="288.6" cy="455.3" rx="5.9" ry="1.2" fill="#5e14be"/><ellipse cx="286.4" cy="462.9" rx="4.2" ry="1.5" fill="#5f14bf"/><ellipse cx="288.2" cy="432.0" rx="5.0" ry="1.5" fill="#ad2bbc"/><ellipse cx="288.2" cy="434.1" rx="5.0" ry="1.5" fill="#b42bb1"/><ellipse cx="289.9" cy="436.2" rx="5.1" ry="1.5" fill="#bc2ba5"/><ellipse cx="290.0" cy="438.3" rx="5.2" ry="1.5" fill="#c22c9c"/><ellipse cx="289.3" cy="440.4" rx="5.4" ry="1.5" fill="#ca2b86"/><ellipse cx="288.7" cy="442.5" rx="5.6" ry="1.5" fill="#da293f"/><ellipse cx="289.9" cy="444.6" rx="5.9" ry="1.5" fill="#de2832"/><ellipse cx="290.8" cy="446.7" rx="6.2" ry="1.5" fill="#eb3e1d"/><ellipse cx="289.5" cy="448.8" rx="6.6" ry="1.5" fill="#f44d10"/><ellipse cx="290.1" cy="450.9" rx="7.0" ry="1.5" fill="#f04715"/><ellipse cx="290.4" cy="453.0" rx="7.5" ry="1.5" fill="#fb5906"/><ellipse cx="290.8" cy="455.1" rx="8.0" ry="1.5" fill="#fe5f01"/><ellipse cx="289.7" cy="457.2" rx="8.6" ry="1.5" fill="#ff8600"/><ellipse cx="291.6" cy="459.3" rx="9.2" ry="1.5" fill="#ff9e00"/><ellipse cx="291.6" cy="461.4" rx="9.9" ry="1.5" fill="#ffeb31"/><ellipse cx="291.9" cy="463.5" rx="10.6" ry="1.5" fill="#fff74d"/><ellipse cx="321.8" cy="103.7" rx="2.2" ry="1.0" fill="#3b0b88"/><ellipse cx="322.3" cy="107.0" rx="2.2" ry="1.0" fill="#460e9a"/><ellipse cx="321.4" cy="109.3" rx="2.2" ry="1.0" fill="#4d0fa5"/><ellipse cx="322.5" cy="120.9" rx="2.3" ry="1.7" fill="#5311b0"/><ellipse cx="321.6" cy="124.3" rx="2.2" ry="1.6" fill="#3c0b89"/><ellipse cx="322.4" cy="127.1" rx="2.3" ry="1.8" fill="#3f0c8e"/><ellipse cx="321.6" cy="130.4" rx="2.2" ry="1.0" fill="#5812b8"/><ellipse cx="322.3" cy="133.5" rx="2.2" ry="1.0" fill="#470e9c"/><ellipse cx="321.4" cy="140.1" rx="2.2" ry="1.3" fill="#5110ac"/><ellipse cx="322.4" cy="142.1" rx="2.2" ry="1.3" fill="#4a0ea0"/><ellipse cx="321.3" cy="149.9" rx="2.2" ry="1.0" fill="#4b0fa3"/><ellipse cx="322.6" cy="152.4" rx="2.2" ry="0.9" fill="#4a0fa1"/><ellipse cx="321.6" cy="159.7" rx="2.2" ry="1.4" fill="#4b0fa2"/><ellipse cx="322.3" cy="162.4" rx="2.2" ry="0.9" fill="#3b0b88"/><ellipse cx="321.8" cy="165.8" rx="2.2" ry="1.1" fill="#390a84"/><ellipse cx="322.4" cy="168.9" rx="2.2" ry="1.2" fill="#5110ac"/><rect x="332.0" y="98" width="6.0" height="77" fill="#5211af" opacity="0.8"/><ellipse cx="333.3" cy="99.0" rx="4.6" ry="1.8" fill="#8f24d5"/><ellipse cx="336.4" cy="102.0" rx="4.5" ry="1.0" fill="#731bd1"/><ellipse cx="334.1" cy="104.1" rx="4.0" ry="1.6" fill="#8a23d6"/><ellipse cx="335.9" cy="106.3" rx="4.6" ry="1.7" fill="#9526d3"/><ellipse cx="333.2" cy="109.7" rx="5.1" ry="1.7" fill="#9c29d1"/><ellipse cx="336.0" cy="112.8" rx="4.6" ry="1.4" fill="#8822d7"/><ellipse cx="333.4" cy="115.2" rx="5.4" ry="1.1" fill="#8c23d5"/><ellipse cx="336.1" cy="117.2" rx="5.7" ry="1.4" fill="#791dd7"/><ellipse cx="333.7" cy="120.1" rx="5.3" ry="1.4" fill="#8a23d6"/><ellipse cx="335.7" cy="123.1" rx="4.8" ry="1.7" fill="#721bd0"/><ellipse cx="333.7" cy="126.7" rx="4.9" ry="1.3" fill="#751cd3"/><ellipse cx="335.7" cy="129.0" rx="4.3" ry="1.2" fill="#9827d2"/><ellipse cx="334.3" cy="131.3" rx="5.0" ry="1.1" fill="#6f1ace"/><ellipse cx="336.3" cy="134.4" rx="4.9" ry="1.5" fill="#8922d6"/><ellipse cx="333.6" cy="136.9" rx="4.3" ry="1.6" fill="#7e1fd9"/><ellipse cx="336.3" cy="139.9" rx="5.0" ry="1.6" fill="#a92ac3"/><ellipse cx="333.9" cy="142.4" rx="5.4" ry="1.5" fill="#791dd7"/><ellipse cx="336.8" cy="144.7" rx="4.9" ry="1.8" fill="#a72ac6"/><ellipse cx="334.3" cy="147.8" rx="3.8" ry="1.4" fill="#7a1dd8"/><ellipse cx="336.5" cy="151.0" rx="4.8" ry="1.6" fill="#8a23d6"/><ellipse cx="333.7" cy="154.0" rx="5.3" ry="1.4" fill="#8c23d6"/><ellipse cx="336.4" cy="156.2" rx="4.7" ry="1.8" fill="#8f24d5"/><ellipse cx="333.8" cy="159.0" rx="4.6" ry="1.0" fill="#6e19cd"/><ellipse cx="336.5" cy="162.5" rx="4.2" ry="1.4" fill="#6f1acd"/><ellipse cx="333.4" cy="166.2" rx="3.8" ry="1.8" fill="#6a18c9"/><ellipse cx="336.4" cy="169.7" rx="4.8" ry="1.0" fill="#7d1eda"/><ellipse cx="333.4" cy="172.3" rx="4.1" ry="1.4" fill="#7d1eda"/><ellipse cx="365.5" cy="99.0" rx="2.2" ry="1.8" fill="#2f0874"/><ellipse cx="366.6" cy="106.2" rx="2.2" ry="1.2" fill="#200553"/><ellipse cx="365.4" cy="120.9" rx="2.2" ry="1.8" fill="#2f0874"/><ellipse cx="366.6" cy="127.1" rx="2.2" ry="1.7" fill="#270664"/><ellipse cx="365.6" cy="129.6" rx="2.2" ry="1.4" fill="#270664"/><ellipse cx="366.6" cy="132.5" rx="2.2" ry="1.8" fill="#33097b"/><ellipse cx="365.7" cy="146.0" rx="2.2" ry="0.9" fill="#200552"/><ellipse cx="366.6" cy="148.6" rx="2.3" ry="1.4" fill="#34097c"/><ellipse cx="365.6" cy="152.1" rx="2.2" ry="1.0" fill="#23055c"/><ellipse cx="366.5" cy="155.7" rx="2.2" ry="1.1" fill="#23055a"/><ellipse cx="365.4" cy="165.9" rx="2.2" ry="1.6" fill="#23055b"/><rect x="401.8" y="98" width="2.4" height="77" fill="#3e0c8d" opacity="0.8"/><ellipse cx="402.5" cy="99.0" rx="2.2" ry="1.0" fill="#6617c5"/><ellipse cx="403.3" cy="102.1" rx="2.2" ry="1.4" fill="#5712b6"/><ellipse cx="402.4" cy="104.4" rx="2.2" ry="1.0" fill="#5e14bd"/><ellipse cx="403.5" cy="107.6" rx="2.2" ry="1.4" fill="#7d1eda"/><ellipse cx="402.4" cy="110.8" rx="2.2" ry="1.6" fill="#761cd4"/><ellipse cx="403.5" cy="113.0" rx="2.2" ry="1.4" fill="#5812b8"/><ellipse cx="402.6" cy="115.4" rx="2.2" ry="1.8" fill="#7b1ed9"/><ellipse cx="403.5" cy="118.2" rx="2.2" ry="1.0" fill="#731bd2"/><ellipse cx="402.4" cy="121.3" rx="2.2" ry="1.4" fill="#7a1dd8"/><ellipse cx="403.6" cy="123.9" rx="2.2" ry="1.3" fill="#6316c3"/><ellipse cx="402.4" cy="126.8" rx="2.2" ry="1.3" fill="#5912b9"/><ellipse cx="403.4" cy="129.2" rx="2.2" ry="1.3" fill="#6c19cb"/><ellipse cx="402.7" cy="132.6" rx="2.2" ry="1.1" fill="#6a18c9"/><ellipse cx="403.5" cy="135.1" rx="2.2" ry="1.0" fill="#7b1ed9"/><ellipse cx="402.7" cy="138.1" rx="2.2" ry="0.9" fill="#5812b7"/><ellipse cx="403.4" cy="141.7" rx="2.2" ry="1.6" fill="#7b1ed9"/><ellipse cx="402.4" cy="144.8" rx="2.2" ry="1.1" fill="#5311b0"/><ellipse cx="403.4" cy="148.1" rx="2.2" ry="1.6" fill="#731bd2"/><ellipse cx="402.7" cy="151.2" rx="2.2" ry="1.1" fill="#6918c8"/><ellipse cx="403.5" cy="154.0" rx="2.2" ry="1.4" fill="#6c19cb"/><ellipse cx="402.4" cy="157.1" rx="2.2" ry="1.7" fill="#6416c3"/><ellipse cx="403.6" cy="160.8" rx="2.2" ry="1.4" fill="#761cd4"/><ellipse cx="402.4" cy="163.2" rx="2.2" ry="1.5" fill="#5712b6"/><ellipse cx="403.4" cy="166.2" rx="2.2" ry="1.2" fill="#6c19cb"/><ellipse cx="402.6" cy="169.4" rx="2.2" ry="1.3" fill="#781dd6"/><ellipse cx="403.6" cy="172.1" rx="2.2" ry="1.6" fill="#6d19cc"/><rect x="408.8" y="98" width="5.4" height="77" fill="#5a13ba" opacity="0.8"/><ellipse cx="410.5" cy="99.0" rx="4.3" ry="1.5" fill="#bf2ca1"/><ellipse cx="412.5" cy="101.5" rx="4.5" ry="1.4" fill="#af2bb9"/><ellipse cx="410.7" cy="104.2" rx="4.4" ry="1.8" fill="#6d19cc"/><ellipse cx="413.1" cy="106.4" rx="5.0" ry="1.2" fill="#b72bac"/><ellipse cx="410.9" cy="108.4" rx="4.0" ry="1.7" fill="#b52bb0"/><ellipse cx="412.9" cy="111.6" rx="3.8" ry="1.4" fill="#af2bba"/><ellipse cx="410.4" cy="113.7" rx="5.0" ry="1.2" fill="#ad2bbc"/><ellipse cx="412.3" cy="116.9" rx="3.5" ry="1.4" fill="#8822d7"/><ellipse cx="410.5" cy="119.9" rx="5.3" ry="1.6" fill="#a22acd"/><ellipse cx="412.2" cy="122.8" rx="4.0" ry="1.4" fill="#b42bb1"/><ellipse cx="410.2" cy="125.8" rx="3.5" ry="1.7" fill="#bd2ca3"/><ellipse cx="412.9" cy="128.6" rx="4.7" ry="1.7" fill="#781dd7"/><ellipse cx="410.5" cy="131.6" rx="4.3" ry="1.2" fill="#7b1ed9"/><ellipse cx="412.3" cy="134.6" rx="3.7" ry="0.9" fill="#751cd4"/><ellipse cx="410.5" cy="137.5" rx="5.2" ry="1.4" fill="#a52ac9"/><ellipse cx="413.0" cy="140.6" rx="4.1" ry="1.7" fill="#7d1eda"/><ellipse cx="410.2" cy="143.0" rx="3.8" ry="1.6" fill="#bd2ca4"/><ellipse cx="412.4" cy="145.2" rx="4.1" ry="1.2" fill="#8621d7"/><ellipse cx="410.9" cy="147.5" rx="5.0" ry="1.2" fill="#8722d7"/><ellipse cx="413.1" cy="150.7" rx="5.2" ry="1.5" fill="#8922d6"/><ellipse cx="410.0" cy="154.2" rx="4.2" ry="1.4" fill="#b92bab"/><ellipse cx="412.4" cy="156.3" rx="4.7" ry="0.9" fill="#8421d8"/><ellipse cx="410.5" cy="159.6" rx="4.4" ry="1.7" fill="#711ad0"/><ellipse cx="412.8" cy="162.6" rx="3.9" ry="1.5" fill="#751cd4"/><ellipse cx="410.5" cy="165.3" rx="4.0" ry="1.2" fill="#bd2ca3"/><ellipse cx="412.3" cy="169.0" rx="4.5" ry="1.5" fill="#8320d8"/><ellipse cx="410.6" cy="172.6" rx="4.9" ry="1.3" fill="#711ad0"/><ellipse cx="411.5" cy="113" rx="3.1" ry="2" fill="#e53426"/><rect x="487.8" y="98" width="11.4" height="77" fill="#5d14bd" opacity="0.8"/><ellipse cx="492.1" cy="99.0" rx="7.4" ry="1.1" fill="#a82ac4"/><ellipse cx="495.3" cy="101.5" rx="7.7" ry="0.9" fill="#7b1ed9"/><ellipse cx="492.0" cy="104.4" rx="7.6" ry="1.6" fill="#b22bb5"/><ellipse cx="495.8" cy="106.5" rx="8.5" ry="1.6" fill="#791dd7"/><ellipse cx="491.5" cy="109.4" rx="7.3" ry="1.6" fill="#9928d2"/><ellipse cx="494.9" cy="112.1" rx="9.0" ry="1.4" fill="#ba2ba9"/><ellipse cx="490.2" cy="114.3" rx="11.1" ry="1.8" fill="#a52ac9"/><ellipse cx="496.0" cy="117.3" rx="9.2" ry="1.1" fill="#af2bba"/><ellipse cx="490.8" cy="120.3" rx="7.4" ry="1.2" fill="#9225d4"/><ellipse cx="495.7" cy="122.5" rx="8.4" ry="1.6" fill="#b22bb4"/><ellipse cx="491.5" cy="125.4" rx="7.2" ry="1.0" fill="#9326d4"/><ellipse cx="496.6" cy="127.5" rx="9.5" ry="1.7" fill="#c82c8c"/><ellipse cx="492.1" cy="130.4" rx="9.0" ry="1.4" fill="#a92ac3"/><ellipse cx="495.4" cy="133.1" rx="10.0" ry="1.1" fill="#a52ac8"/><ellipse cx="491.2" cy="135.9" rx="7.5" ry="1.1" fill="#9025d4"/><ellipse cx="495.7" cy="139.1" rx="11.4" ry="1.4" fill="#7a1dd8"/><ellipse cx="490.2" cy="142.4" rx="8.8" ry="1.3" fill="#b32bb3"/><ellipse cx="495.7" cy="145.7" rx="8.4" ry="1.4" fill="#721bd1"/><ellipse cx="491.2" cy="148.9" rx="10.1" ry="1.0" fill="#be2ca3"/><ellipse cx="496.0" cy="152.0" rx="9.3" ry="1.4" fill="#c52c97"/><ellipse cx="491.9" cy="154.7" rx="10.5" ry="1.4" fill="#7b1ed9"/><ellipse cx="496.5" cy="156.8" rx="9.9" ry="1.1" fill="#a12ace"/><ellipse cx="491.2" cy="160.4" rx="9.1" ry="1.0" fill="#7b1ed9"/><ellipse cx="495.0" cy="162.9" rx="7.4" ry="1.5" fill="#7b1ed9"/><ellipse cx="490.2" cy="166.0" rx="9.0" ry="1.3" fill="#8120d9"/><ellipse cx="495.7" cy="169.6" rx="10.3" ry="1.6" fill="#a52ac8"/><ellipse cx="490.7" cy="172.1" rx="10.3" ry="1.4" fill="#751cd3"/><ellipse cx="495.0" cy="174.3" rx="10.6" ry="1.5" fill="#b02bb8"/><rect x="487.4" y="341" width="11.2" height="125" fill="#3c0b8a" opacity="0.8"/><ellipse cx="492.1" cy="345.6" rx="6.0" ry="1.9" fill="#5812b8"/><ellipse cx="495.2" cy="348.7" rx="7.4" ry="1.7" fill="#5612b5"/><ellipse cx="491.9" cy="351.0" rx="5.7" ry="2.0" fill="#5211ae"/><ellipse cx="495.1" cy="353.1" rx="5.6" ry="1.2" fill="#721bd1"/><ellipse cx="491.2" cy="356.5" rx="5.0" ry="1.8" fill="#7a1dd8"/><ellipse cx="494.7" cy="359.6" rx="7.8" ry="1.5" fill="#741bd2"/><ellipse cx="491.2" cy="362.4" rx="7.7" ry="1.3" fill="#751cd3"/><ellipse cx="493.9" cy="365.9" rx="6.6" ry="1.7" fill="#6215c1"/><ellipse cx="490.9" cy="369.5" rx="5.3" ry="1.7" fill="#721bd1"/><ellipse cx="494.4" cy="372.3" rx="7.0" ry="1.6" fill="#5f14bf"/><ellipse cx="490.8" cy="379.7" rx="5.0" ry="1.4" fill="#771cd5"/><ellipse cx="494.2" cy="382.5" rx="4.8" ry="1.5" fill="#761cd5"/><ellipse cx="492.0" cy="388.9" rx="6.5" ry="1.6" fill="#6a18c9"/><ellipse cx="494.7" cy="391.4" rx="5.9" ry="1.6" fill="#5a13ba"/><ellipse cx="491.7" cy="394.6" rx="7.1" ry="1.3" fill="#6d19cc"/><ellipse cx="494.7" cy="397.6" rx="7.6" ry="2.0" fill="#751cd4"/><ellipse cx="491.1" cy="400.9" rx="5.2" ry="1.3" fill="#5f14be"/><ellipse cx="495.4" cy="403.1" rx="7.2" ry="1.6" fill="#6416c3"/><ellipse cx="492.0" cy="405.7" rx="7.4" ry="1.4" fill="#5511b2"/><ellipse cx="495.1" cy="407.7" rx="6.2" ry="2.0" fill="#6316c3"/><ellipse cx="492.1" cy="409.8" rx="7.6" ry="1.4" fill="#6f1ace"/><ellipse cx="494.7" cy="420.6" rx="5.0" ry="1.8" fill="#7a1dd8"/><ellipse cx="491.2" cy="423.4" rx="5.3" ry="1.2" fill="#6e19cd"/><ellipse cx="495.4" cy="425.6" rx="4.9" ry="1.8" fill="#6015bf"/><ellipse cx="491.8" cy="427.8" rx="6.6" ry="1.6" fill="#7b1ed9"/><ellipse cx="495.0" cy="430.4" rx="5.9" ry="1.6" fill="#5912b9"/><ellipse cx="491.1" cy="437.6" rx="5.4" ry="1.5" fill="#7b1ed9"/><ellipse cx="494.1" cy="439.6" rx="6.3" ry="1.6" fill="#5611b4"/><ellipse cx="491.0" cy="442.0" rx="4.9" ry="1.9" fill="#6015c0"/><ellipse cx="494.9" cy="444.8" rx="5.1" ry="1.9" fill="#6015bf"/><ellipse cx="491.4" cy="447.1" rx="7.7" ry="1.3" fill="#5611b4"/><ellipse cx="494.1" cy="449.4" rx="5.4" ry="1.6" fill="#6e19cd"/><ellipse cx="490.7" cy="456.4" rx="5.4" ry="1.4" fill="#761cd4"/><ellipse cx="494.8" cy="459.4" rx="5.5" ry="1.3" fill="#6e19cd"/><ellipse cx="493.5" cy="113" rx="6.0" ry="2" fill="#e53426"/><ellipse cx="493.5" cy="127" rx="6.0" ry="2" fill="#d7294d"/><ellipse cx="492.8" cy="440.0" rx="6.6" ry="1.5" fill="#a02ad0"/><ellipse cx="491.5" cy="442.1" rx="6.7" ry="1.5" fill="#c22c9d"/><ellipse cx="492.6" cy="444.2" rx="6.8" ry="1.5" fill="#cd2b7a"/><ellipse cx="492.3" cy="446.3" rx="7.1" ry="1.5" fill="#c62c97"/><ellipse cx="492.3" cy="448.4" rx="7.6" ry="1.5" fill="#d52954"/><ellipse cx="492.4" cy="450.5" rx="8.1" ry="1.5" fill="#da2941"/><ellipse cx="492.9" cy="452.6" rx="8.7" ry="1.5" fill="#e43227"/><ellipse cx="492.7" cy="454.7" rx="9.5" ry="1.5" fill="#fa5707"/><ellipse cx="494.2" cy="456.8" rx="10.4" ry="1.5" fill="#ff8900"/><ellipse cx="494.2" cy="458.9" rx="11.4" ry="1.5" fill="#ff8b00"/><ellipse cx="494.3" cy="461.0" rx="12.6" ry="1.5" fill="#ff8600"/><ellipse cx="493.6" cy="463.1" rx="13.8" ry="1.5" fill="#ff9f00"/><rect x="530.4" y="98" width="10.2" height="242" fill="#4e10a8" opacity="0.8"/><rect x="528.7" y="340" width="13.6" height="126" fill="#420c93" opacity="0.8"/><ellipse cx="533.8" cy="99.0" rx="7.1" ry="1.3" fill="#8c23d5"/><ellipse cx="537.0" cy="101.2" rx="8.3" ry="1.6" fill="#8b23d6"/><ellipse cx="533.0" cy="104.2" rx="9.1" ry="1.6" fill="#9928d2"/><ellipse cx="537.7" cy="107.4" rx="8.9" ry="1.4" fill="#9a28d2"/><ellipse cx="533.9" cy="110.3" rx="7.2" ry="1.4" fill="#9c29d1"/><ellipse cx="537.8" cy="112.8" rx="6.5" ry="1.1" fill="#8a23d6"/><ellipse cx="533.1" cy="115.9" rx="8.2" ry="1.0" fill="#761cd4"/><ellipse cx="536.7" cy="119.0" rx="8.8" ry="1.5" fill="#9e29d1"/><ellipse cx="533.4" cy="122.1" rx="10.2" ry="1.7" fill="#7b1ed9"/><ellipse cx="537.9" cy="124.8" rx="9.5" ry="1.8" fill="#9225d4"/><ellipse cx="534.0" cy="126.9" rx="9.5" ry="1.7" fill="#6c19cb"/><ellipse cx="538.3" cy="129.3" rx="9.2" ry="1.4" fill="#7a1dd8"/><ellipse cx="534.3" cy="132.9" rx="10.1" ry="1.2" fill="#9a28d2"/><ellipse cx="537.1" cy="135.9" rx="7.6" ry="1.7" fill="#8d24d5"/><ellipse cx="534.3" cy="139.2" rx="8.8" ry="1.6" fill="#9e29d0"/><ellipse cx="537.1" cy="142.9" rx="6.8" ry="1.1" fill="#8b23d6"/><ellipse cx="533.8" cy="145.3" rx="7.0" ry="1.0" fill="#801fd9"/><ellipse cx="536.8" cy="148.5" rx="8.4" ry="1.8" fill="#9225d4"/><ellipse cx="532.8" cy="151.1" rx="6.5" ry="1.7" fill="#7d1eda"/><ellipse cx="537.2" cy="154.4" rx="8.3" ry="1.7" fill="#8c23d6"/><ellipse cx="533.2" cy="156.5" rx="10.0" ry="1.0" fill="#6617c5"/><ellipse cx="538.1" cy="158.8" rx="8.6" ry="1.5" fill="#791dd7"/><ellipse cx="533.3" cy="160.9" rx="9.2" ry="1.0" fill="#6c19cb"/><ellipse cx="537.4" cy="163.1" rx="7.7" ry="1.1" fill="#711ad0"/><ellipse cx="532.5" cy="165.2" rx="8.8" ry="1.7" fill="#8521d7"/><ellipse cx="537.3" cy="167.4" rx="9.6" ry="1.4" fill="#8320d8"/><ellipse cx="532.5" cy="170.5" rx="7.0" ry="1.3" fill="#9a28d2"/><ellipse cx="537.0" cy="172.6" rx="9.1" ry="1.2" fill="#7f1fd9"/><ellipse cx="534.2" cy="174.6" rx="7.5" ry="1.4" fill="#9827d2"/><ellipse cx="538.0" cy="176.7" rx="6.9" ry="1.5" fill="#8f24d5"/><ellipse cx="534.3" cy="178.9" rx="7.5" ry="1.3" fill="#7c1eda"/><ellipse cx="538.4" cy="181.9" rx="7.7" ry="1.2" fill="#8621d7"/><ellipse cx="533.7" cy="184.2" rx="7.3" ry="1.1" fill="#8c23d6"/><ellipse cx="537.4" cy="186.9" rx="9.5" ry="1.3" fill="#9426d3"/><ellipse cx="533.6" cy="189.9" rx="9.2" ry="1.0" fill="#6e19cd"/><ellipse cx="537.1" cy="192.7" rx="7.7" ry="1.1" fill="#6e19cd"/><ellipse cx="534.0" cy="195.7" rx="7.4" ry="1.1" fill="#6416c3"/><ellipse cx="538.3" cy="199.1" rx="7.0" ry="1.1" fill="#8822d7"/><ellipse cx="532.8" cy="201.6" rx="9.6" ry="1.7" fill="#7b1ed9"/><ellipse cx="537.2" cy="203.6" rx="8.1" ry="0.9" fill="#6316c2"/><ellipse cx="532.7" cy="206.2" rx="7.2" ry="1.2" fill="#6817c7"/><ellipse cx="536.7" cy="208.5" rx="8.1" ry="1.1" fill="#9526d3"/><ellipse cx="533.0" cy="211.0" rx="9.2" ry="1.2" fill="#a02ad0"/><ellipse cx="537.8" cy="214.6" rx="7.3" ry="0.9" fill="#9d29d1"/><ellipse cx="532.7" cy="217.5" rx="10.2" ry="1.6" fill="#7a1dd8"/><ellipse cx="537.8" cy="220.0" rx="6.6" ry="1.1" fill="#9f2ad0"/><ellipse cx="533.0" cy="223.6" rx="8.9" ry="0.9" fill="#9125d4"/><ellipse cx="538.1" cy="227.2" rx="8.5" ry="1.3" fill="#711acf"/><ellipse cx="532.8" cy="230.1" rx="7.9" ry="1.7" fill="#9a28d2"/><ellipse cx="537.2" cy="232.4" rx="6.6" ry="1.3" fill="#731bd2"/><ellipse cx="532.8" cy="234.4" rx="8.3" ry="1.0" fill="#9e29d1"/><ellipse cx="537.1" cy="236.8" rx="6.8" ry="1.3" fill="#8f24d5"/><ellipse cx="533.7" cy="239.8" rx="8.5" ry="1.6" fill="#6817c7"/><ellipse cx="537.0" cy="242.5" rx="9.3" ry="1.0" fill="#9f2ad0"/><ellipse cx="534.1" cy="246.1" rx="9.5" ry="1.7" fill="#7e1fda"/><ellipse cx="538.5" cy="248.3" rx="7.8" ry="1.6" fill="#9727d2"/><ellipse cx="533.7" cy="251.5" rx="7.6" ry="1.6" fill="#7f1fd9"/><ellipse cx="536.7" cy="254.8" rx="8.6" ry="1.5" fill="#9c29d1"/><ellipse cx="532.7" cy="257.2" rx="9.4" ry="1.5" fill="#6316c2"/><ellipse cx="538.2" cy="259.8" rx="6.8" ry="1.6" fill="#781dd6"/><ellipse cx="532.5" cy="263.0" rx="8.8" ry="1.7" fill="#791dd7"/><ellipse cx="537.1" cy="265.3" rx="8.3" ry="1.6" fill="#761cd4"/><ellipse cx="532.7" cy="269.0" rx="10.1" ry="1.6" fill="#9928d2"/><ellipse cx="537.4" cy="272.2" rx="8.3" ry="1.0" fill="#6617c5"/><ellipse cx="534.0" cy="275.8" rx="6.8" ry="1.4" fill="#741bd3"/><ellipse cx="537.8" cy="278.3" rx="8.1" ry="1.0" fill="#9c29d1"/><ellipse cx="533.2" cy="280.4" rx="8.3" ry="1.4" fill="#8822d7"/><ellipse cx="536.6" cy="283.1" rx="7.3" ry="1.6" fill="#9928d2"/><ellipse cx="533.6" cy="285.7" rx="7.6" ry="1.6" fill="#721bd1"/><ellipse cx="538.0" cy="287.8" rx="7.7" ry="1.6" fill="#7e1fd9"/><ellipse cx="534.3" cy="290.4" rx="7.6" ry="1.4" fill="#8320d8"/><ellipse cx="536.6" cy="293.5" rx="8.5" ry="1.7" fill="#791dd7"/><ellipse cx="533.2" cy="295.9" rx="7.3" ry="1.0" fill="#6c19cb"/><ellipse cx="538.3" cy="298.1" rx="9.3" ry="1.4" fill="#8421d8"/><ellipse cx="533.9" cy="301.5" rx="7.9" ry="1.8" fill="#9526d3"/><ellipse cx="537.8" cy="305.1" rx="7.7" ry="1.0" fill="#8521d8"/><ellipse cx="533.2" cy="307.7" rx="8.9" ry="1.5" fill="#6d19cc"/><ellipse cx="536.9" cy="311.3" rx="6.8" ry="1.2" fill="#6215c1"/><ellipse cx="532.8" cy="314.8" rx="7.1" ry="1.2" fill="#791dd7"/><ellipse cx="538.0" cy="318.2" rx="8.7" ry="1.5" fill="#701acf"/><ellipse cx="532.5" cy="320.2" rx="7.9" ry="1.2" fill="#741bd2"/><ellipse cx="537.9" cy="323.9" rx="8.3" ry="1.5" fill="#8120d9"/><ellipse cx="533.9" cy="326.6" rx="7.3" ry="1.5" fill="#6f1ace"/><ellipse cx="537.6" cy="328.7" rx="10.2" ry="1.6" fill="#6817c7"/><ellipse cx="534.1" cy="331.9" rx="8.4" ry="0.9" fill="#8c23d5"/><ellipse cx="536.8" cy="334.7" rx="6.9" ry="1.2" fill="#6316c3"/><ellipse cx="534.3" cy="337.6" rx="6.9" ry="1.8" fill="#6d19cb"/><ellipse cx="536.9" cy="341.2" rx="9.1" ry="1.1" fill="#5e14be"/><ellipse cx="532.6" cy="343.5" rx="8.9" ry="1.4" fill="#8822d7"/><ellipse cx="538.5" cy="346.7" rx="8.6" ry="1.8" fill="#8421d8"/><ellipse cx="532.6" cy="349.9" rx="7.9" ry="1.1" fill="#721bd1"/><ellipse cx="537.5" cy="352.7" rx="9.3" ry="1.8" fill="#781dd7"/><ellipse cx="534.5" cy="355.1" rx="9.3" ry="1.5" fill="#8320d8"/><ellipse cx="537.9" cy="362.0" rx="8.8" ry="1.7" fill="#6215c2"/><ellipse cx="533.7" cy="365.5" rx="8.7" ry="1.8" fill="#6516c5"/><ellipse cx="538.0" cy="369.2" rx="8.8" ry="1.6" fill="#701acf"/><ellipse cx="534.2" cy="372.3" rx="5.9" ry="1.7" fill="#7f1fd9"/><ellipse cx="538.1" cy="375.7" rx="6.4" ry="1.2" fill="#801fd9"/><ellipse cx="532.6" cy="378.9" rx="6.6" ry="1.9" fill="#5f14bf"/><ellipse cx="537.6" cy="382.5" rx="9.2" ry="1.5" fill="#781dd6"/><ellipse cx="533.8" cy="385.2" rx="9.2" ry="1.1" fill="#801fd9"/><ellipse cx="537.7" cy="393.3" rx="7.3" ry="1.2" fill="#6717c6"/><ellipse cx="534.4" cy="396.8" rx="6.4" ry="1.3" fill="#7d1eda"/><ellipse cx="538.2" cy="402.7" rx="9.0" ry="1.3" fill="#6a18c9"/><ellipse cx="533.1" cy="406.0" rx="6.0" ry="1.5" fill="#7b1ed9"/><ellipse cx="537.9" cy="408.7" rx="7.3" ry="1.6" fill="#711ad0"/><ellipse cx="534.2" cy="412.1" rx="6.8" ry="2.0" fill="#6115c1"/><ellipse cx="537.9" cy="414.8" rx="7.2" ry="1.8" fill="#8822d7"/><ellipse cx="533.2" cy="417.6" rx="8.3" ry="1.7" fill="#6f1ace"/><ellipse cx="537.9" cy="419.9" rx="8.7" ry="1.3" fill="#6c19cb"/><ellipse cx="533.5" cy="422.6" rx="7.5" ry="2.0" fill="#8822d7"/><ellipse cx="536.8" cy="425.9" rx="7.2" ry="1.2" fill="#6f1ace"/><ellipse cx="532.5" cy="428.6" rx="7.8" ry="1.2" fill="#6e19cd"/><ellipse cx="537.4" cy="430.9" rx="7.6" ry="1.5" fill="#701ace"/><ellipse cx="533.5" cy="434.0" rx="6.7" ry="1.6" fill="#5a13ba"/><ellipse cx="538.0" cy="436.8" rx="8.1" ry="1.6" fill="#8822d7"/><ellipse cx="533.7" cy="439.0" rx="8.0" ry="1.3" fill="#6115c1"/><ellipse cx="536.6" cy="442.5" rx="7.5" ry="1.4" fill="#8922d7"/><ellipse cx="532.6" cy="445.4" rx="7.4" ry="1.4" fill="#731bd2"/><ellipse cx="538.4" cy="448.7" rx="6.6" ry="1.2" fill="#6416c4"/><ellipse cx="532.8" cy="451.6" rx="8.1" ry="1.6" fill="#8120d9"/><ellipse cx="538.2" cy="454.1" rx="7.9" ry="2.0" fill="#6c19cb"/><ellipse cx="533.6" cy="457.5" rx="9.2" ry="1.8" fill="#731bd2"/><ellipse cx="537.3" cy="459.8" rx="8.6" ry="1.5" fill="#771cd5"/><ellipse cx="532.6" cy="463.0" rx="9.1" ry="1.5" fill="#751cd3"/><ellipse cx="536.3" cy="424.0" rx="6.6" ry="1.5" fill="#af2bba"/><ellipse cx="536.1" cy="426.1" rx="6.6" ry="1.5" fill="#a82ac4"/><ellipse cx="536.5" cy="428.2" rx="6.7" ry="1.5" fill="#b42bb1"/><ellipse cx="535.9" cy="430.3" rx="6.8" ry="1.5" fill="#ba2ba9"/><ellipse cx="536.0" cy="432.4" rx="6.9" ry="1.5" fill="#c42c9a"/><ellipse cx="537.3" cy="434.5" rx="7.1" ry="1.5" fill="#cf2a6e"/><ellipse cx="536.9" cy="436.6" rx="7.4" ry="1.5" fill="#d62950"/><ellipse cx="536.5" cy="438.7" rx="7.7" ry="1.5" fill="#de2930"/><ellipse cx="537.1" cy="440.8" rx="8.0" ry="1.5" fill="#de292f"/><ellipse cx="537.5" cy="442.9" rx="8.3" ry="1.5" fill="#e12d2c"/><ellipse cx="537.8" cy="445.0" rx="8.7" ry="1.5" fill="#f95608"/><ellipse cx="538.0" cy="447.1" rx="9.2" ry="1.5" fill="#ec3f1c"/><ellipse cx="536.5" cy="449.2" rx="9.7" ry="1.5" fill="#f6510d"/><ellipse cx="537.1" cy="451.3" rx="10.2" ry="1.5" fill="#ff7100"/><ellipse cx="537.7" cy="453.4" rx="10.8" ry="1.5" fill="#ff6800"/><ellipse cx="537.6" cy="455.5" rx="11.4" ry="1.5" fill="#ff8d00"/><ellipse cx="537.9" cy="457.6" rx="12.1" ry="1.5" fill="#ffac00"/><ellipse cx="538.2" cy="459.7" rx="12.8" ry="1.5" fill="#ffd91d"/><ellipse cx="538.5" cy="461.8" rx="13.6" ry="1.5" fill="#fff339"/><ellipse cx="538.3" cy="463.9" rx="14.4" ry="1.5" fill="#fffa73"/><rect x="568.8" y="98" width="11.4" height="242" fill="#5a13ba" opacity="0.8"/><rect x="566.9" y="340" width="15.2" height="70" fill="#4c0fa5" opacity="0.8"/><ellipse cx="573.2" cy="99.0" rx="9.1" ry="1.5" fill="#731bd2"/><ellipse cx="576.3" cy="101.4" rx="9.3" ry="1.3" fill="#be2ca3"/><ellipse cx="572.8" cy="105.0" rx="9.9" ry="1.2" fill="#761cd4"/><ellipse cx="577.7" cy="107.6" rx="9.1" ry="1.4" fill="#741bd3"/><ellipse cx="573.1" cy="110.0" rx="10.1" ry="1.0" fill="#bb2ba7"/><ellipse cx="577.8" cy="113.0" rx="9.1" ry="1.7" fill="#b72bad"/><ellipse cx="571.1" cy="115.0" rx="8.8" ry="0.9" fill="#9c29d1"/><ellipse cx="576.8" cy="117.4" rx="8.8" ry="1.2" fill="#8421d8"/><ellipse cx="572.9" cy="120.3" rx="9.4" ry="1.4" fill="#8d24d5"/><ellipse cx="576.7" cy="123.2" rx="8.1" ry="1.7" fill="#a52ac8"/><ellipse cx="572.4" cy="125.4" rx="8.9" ry="1.1" fill="#9627d3"/><ellipse cx="576.9" cy="128.9" rx="9.8" ry="1.0" fill="#9326d4"/><ellipse cx="572.1" cy="131.6" rx="10.3" ry="1.7" fill="#741bd3"/><ellipse cx="576.7" cy="135.2" rx="10.0" ry="1.2" fill="#731bd2"/><ellipse cx="571.4" cy="138.8" rx="7.5" ry="1.2" fill="#8f24d5"/><ellipse cx="576.8" cy="142.0" rx="10.8" ry="1.6" fill="#b02bb7"/><ellipse cx="572.2" cy="144.7" rx="7.7" ry="1.7" fill="#a22ace"/><ellipse cx="576.2" cy="148.1" rx="10.5" ry="0.9" fill="#b62bae"/><ellipse cx="572.2" cy="151.0" rx="8.8" ry="1.4" fill="#7f1fd9"/><ellipse cx="577.1" cy="153.7" rx="8.4" ry="1.1" fill="#a72ac5"/><ellipse cx="572.4" cy="156.1" rx="9.3" ry="1.6" fill="#8120d9"/><ellipse cx="576.3" cy="159.8" rx="9.4" ry="0.9" fill="#7c1eda"/><ellipse cx="572.0" cy="162.9" rx="9.7" ry="1.2" fill="#6f1ace"/><ellipse cx="575.7" cy="166.6" rx="7.7" ry="1.1" fill="#801fd9"/><ellipse cx="572.6" cy="169.8" rx="10.9" ry="1.0" fill="#a52ac8"/><ellipse cx="576.9" cy="172.2" rx="10.5" ry="1.2" fill="#9627d3"/><ellipse cx="571.8" cy="175.7" rx="9.6" ry="1.1" fill="#9b28d1"/><ellipse cx="575.7" cy="178.7" rx="8.6" ry="1.2" fill="#bc2ba6"/><ellipse cx="571.9" cy="181.1" rx="7.8" ry="1.5" fill="#a92ac3"/><ellipse cx="575.7" cy="184.6" rx="9.7" ry="1.7" fill="#711acf"/><ellipse cx="572.4" cy="187.6" rx="9.6" ry="1.7" fill="#9025d4"/><ellipse cx="576.7" cy="190.6" rx="10.9" ry="1.6" fill="#a62ac7"/><ellipse cx="572.7" cy="193.4" rx="11.3" ry="1.5" fill="#7f1fd9"/><ellipse cx="576.6" cy="195.6" rx="9.7" ry="1.2" fill="#9125d4"/><ellipse cx="571.5" cy="199.1" rx="8.3" ry="1.7" fill="#8e24d5"/><ellipse cx="576.6" cy="202.0" rx="11.2" ry="1.4" fill="#9326d3"/><ellipse cx="572.3" cy="204.9" rx="8.3" ry="1.3" fill="#8421d8"/><ellipse cx="576.5" cy="207.4" rx="7.3" ry="1.5" fill="#711ad0"/><ellipse cx="572.6" cy="209.6" rx="8.4" ry="1.4" fill="#b82bac"/><ellipse cx="576.3" cy="212.0" rx="11.1" ry="0.9" fill="#a32acb"/><ellipse cx="571.8" cy="214.1" rx="8.3" ry="1.5" fill="#b52bb0"/><ellipse cx="576.3" cy="216.8" rx="9.5" ry="1.5" fill="#9025d4"/><ellipse cx="572.1" cy="220.2" rx="9.6" ry="1.7" fill="#7b1ed9"/><ellipse cx="577.7" cy="223.0" rx="8.9" ry="1.3" fill="#b32bb3"/><ellipse cx="572.1" cy="226.7" rx="10.5" ry="1.4" fill="#9627d3"/><ellipse cx="576.2" cy="229.5" rx="8.8" ry="0.9" fill="#9d29d1"/><ellipse cx="571.7" cy="232.8" rx="11.3" ry="1.6" fill="#af2bba"/><ellipse cx="577.7" cy="234.9" rx="7.7" ry="1.7" fill="#8f24d5"/><ellipse cx="572.9" cy="238.3" rx="10.3" ry="1.5" fill="#751cd4"/><ellipse cx="576.1" cy="240.4" rx="10.8" ry="1.4" fill="#9225d4"/><ellipse cx="573.3" cy="242.4" rx="11.0" ry="1.7" fill="#8722d7"/><ellipse cx="577.8" cy="245.6" rx="8.3" ry="1.5" fill="#6d19cc"/><ellipse cx="573.1" cy="248.9" rx="8.2" ry="1.6" fill="#9526d3"/><ellipse cx="577.8" cy="251.1" rx="8.9" ry="1.0" fill="#8521d7"/><ellipse cx="571.6" cy="254.2" rx="8.7" ry="1.6" fill="#8320d8"/><ellipse cx="576.9" cy="257.6" rx="9.1" ry="1.0" fill="#771cd5"/><ellipse cx="572.0" cy="261.2" rx="7.5" ry="1.8" fill="#8220d8"/><ellipse cx="575.9" cy="264.8" rx="10.0" ry="1.3" fill="#9f2ad0"/><ellipse cx="573.0" cy="267.6" rx="10.8" ry="1.4" fill="#791dd7"/><ellipse cx="576.6" cy="270.9" rx="9.5" ry="1.2" fill="#a52ac8"/><ellipse cx="571.6" cy="274.0" rx="8.4" ry="1.2" fill="#8a23d6"/><ellipse cx="576.1" cy="276.2" rx="7.3" ry="1.3" fill="#6f1ace"/><ellipse cx="573.3" cy="278.8" rx="11.3" ry="1.0" fill="#b52bb0"/><ellipse cx="576.2" cy="282.2" rx="9.8" ry="1.2" fill="#8421d8"/><ellipse cx="571.8" cy="284.2" rx="10.2" ry="1.8" fill="#741bd3"/><ellipse cx="576.4" cy="286.7" rx="9.4" ry="1.2" fill="#a82ac3"/><ellipse cx="572.8" cy="289.4" rx="9.0" ry="1.7" fill="#b92baa"/><ellipse cx="576.9" cy="292.1" rx="8.7" ry="1.5" fill="#ad2bbc"/><ellipse cx="571.1" cy="295.3" rx="7.6" ry="1.7" fill="#8521d7"/><ellipse cx="576.7" cy="298.5" rx="10.4" ry="0.9" fill="#a22acd"/><ellipse cx="572.4" cy="301.6" rx="10.3" ry="1.5" fill="#b32bb3"/><ellipse cx="576.7" cy="304.5" rx="7.7" ry="1.4" fill="#a92ac3"/><ellipse cx="572.3" cy="307.7" rx="10.7" ry="0.9" fill="#761cd4"/><ellipse cx="576.5" cy="311.2" rx="10.1" ry="1.4" fill="#8320d8"/><ellipse cx="572.4" cy="313.7" rx="10.9" ry="1.8" fill="#761cd4"/><ellipse cx="577.2" cy="316.9" rx="11.0" ry="1.0" fill="#a02ad0"/><ellipse cx="573.3" cy="319.2" rx="9.4" ry="1.3" fill="#b12bb6"/><ellipse cx="576.2" cy="322.7" rx="7.5" ry="1.3" fill="#9a28d2"/><ellipse cx="572.0" cy="325.7" rx="7.5" ry="1.2" fill="#8d24d5"/><ellipse cx="576.1" cy="329.1" rx="8.0" ry="1.7" fill="#7e1fda"/><ellipse cx="572.6" cy="332.6" rx="8.8" ry="1.7" fill="#a32acb"/><ellipse cx="577.6" cy="336.1" rx="10.1" ry="1.0" fill="#bd2ca4"/><ellipse cx="571.7" cy="339.7" rx="8.7" ry="0.9" fill="#761cd5"/><ellipse cx="576.1" cy="342.8" rx="9.3" ry="1.5" fill="#9928d2"/><ellipse cx="571.6" cy="344.9" rx="9.7" ry="1.9" fill="#a82ac4"/><ellipse cx="576.4" cy="347.2" rx="7.3" ry="1.8" fill="#9025d5"/><ellipse cx="572.6" cy="349.2" rx="7.7" ry="1.5" fill="#6918c8"/><ellipse cx="577.9" cy="352.8" rx="7.5" ry="1.3" fill="#781dd6"/><ellipse cx="572.2" cy="355.9" rx="9.5" ry="1.4" fill="#8d24d5"/><ellipse cx="576.9" cy="359.5" rx="10.3" ry="1.5" fill="#d52955"/><ellipse cx="572.6" cy="363.1" rx="8.6" ry="1.6" fill="#b62bae"/><ellipse cx="576.1" cy="366.0" rx="9.4" ry="1.6" fill="#9627d3"/><ellipse cx="571.1" cy="368.7" rx="9.5" ry="1.6" fill="#9b28d1"/><ellipse cx="575.8" cy="370.9" rx="8.0" ry="1.4" fill="#731bd2"/><ellipse cx="572.8" cy="376.5" rx="8.3" ry="1.4" fill="#801fd9"/><ellipse cx="577.8" cy="379.3" rx="9.1" ry="2.0" fill="#8e24d5"/><ellipse cx="571.8" cy="382.7" rx="8.0" ry="1.2" fill="#7d1eda"/><ellipse cx="575.7" cy="385.4" rx="9.9" ry="1.1" fill="#8922d6"/><ellipse cx="572.8" cy="388.3" rx="9.0" ry="1.7" fill="#721bd0"/><ellipse cx="575.7" cy="391.8" rx="6.8" ry="1.2" fill="#6516c5"/><ellipse cx="571.4" cy="394.1" rx="8.0" ry="1.5" fill="#6a18c9"/><ellipse cx="575.7" cy="397.5" rx="8.5" ry="1.9" fill="#7c1eda"/><ellipse cx="572.2" cy="400.4" rx="8.5" ry="1.7" fill="#8621d7"/><ellipse cx="577.8" cy="403.6" rx="9.8" ry="1.7" fill="#a02ad0"/><ellipse cx="571.4" cy="407.0" rx="8.3" ry="1.1" fill="#6c19cb"/><ellipse cx="574.9" cy="414.3" rx="7.7" ry="1.4" fill="#490ea0"/><ellipse cx="571.4" cy="417.3" rx="5.6" ry="1.3" fill="#33097a"/><ellipse cx="574.5" cy="113" rx="6.0" ry="2" fill="#e53426"/><ellipse cx="574.5" cy="127" rx="6.0" ry="2" fill="#db293f"/><ellipse cx="574.5" cy="232" rx="6.0" ry="2" fill="#e33029"/><ellipse cx="574.5" cy="322" rx="6.0" ry="2" fill="#d42a5c"/><ellipse cx="574.5" cy="333" rx="6.0" ry="2" fill="#db293f"/><ellipse cx="574.5" cy="345" rx="6.0" ry="2" fill="#db293f"/><ellipse cx="574.5" cy="360" rx="6.0" ry="2" fill="#ff8300"/><ellipse cx="598.7" cy="99.0" rx="2.7" ry="1.1" fill="#270665"/><ellipse cx="600.1" cy="101.2" rx="2.9" ry="1.6" fill="#220558"/><ellipse cx="599.0" cy="111.9" rx="3.6" ry="1.2" fill="#210557"/><ellipse cx="600.2" cy="122.9" rx="3.6" ry="1.1" fill="#200552"/><ellipse cx="598.3" cy="130.4" rx="3.5" ry="1.0" fill="#220559"/><ellipse cx="599.9" cy="138.2" rx="2.8" ry="1.6" fill="#2b076d"/><ellipse cx="598.3" cy="146.9" rx="2.7" ry="1.2" fill="#210556"/><ellipse cx="600.6" cy="168.5" rx="3.5" ry="1.3" fill="#280667"/><ellipse cx="598.7" cy="170.8" rx="4.2" ry="1.3" fill="#2b076d"/><ellipse cx="600.8" cy="177.6" rx="4.2" ry="1.5" fill="#24055c"/><ellipse cx="598.6" cy="185.6" rx="3.7" ry="1.1" fill="#270665"/><ellipse cx="600.1" cy="191.8" rx="2.9" ry="1.3" fill="#310877"/><ellipse cx="598.9" cy="198.0" rx="3.4" ry="1.4" fill="#210556"/><ellipse cx="600.7" cy="200.3" rx="4.1" ry="1.5" fill="#29066a"/><ellipse cx="598.8" cy="202.5" rx="2.8" ry="1.5" fill="#24055d"/><ellipse cx="600.5" cy="208.8" rx="3.0" ry="1.7" fill="#290669"/><ellipse cx="598.7" cy="212.0" rx="2.7" ry="1.1" fill="#210556"/><ellipse cx="600.4" cy="227.6" rx="2.8" ry="1.2" fill="#200553"/><ellipse cx="598.8" cy="230.2" rx="3.2" ry="1.2" fill="#270664"/><ellipse cx="600.4" cy="248.4" rx="2.8" ry="1.7" fill="#34097c"/><rect x="597.4" y="250" width="4.2" height="90" fill="#3a0a86" opacity="0.8"/><rect x="596.7" y="340" width="5.6" height="126" fill="#300875" opacity="0.8"/><ellipse cx="598.8" cy="251.0" rx="3.9" ry="1.3" fill="#4d0fa5"/><ellipse cx="600.1" cy="253.3" rx="2.9" ry="1.5" fill="#771cd5"/><ellipse cx="599.1" cy="257.0" rx="2.7" ry="1.1" fill="#6b18ca"/><ellipse cx="600.0" cy="260.1" rx="3.7" ry="1.5" fill="#761cd4"/><ellipse cx="598.8" cy="262.2" rx="3.2" ry="1.6" fill="#731bd2"/><ellipse cx="600.0" cy="265.1" rx="3.6" ry="1.0" fill="#6817c7"/><ellipse cx="598.5" cy="268.5" rx="3.7" ry="1.8" fill="#6e19cd"/><ellipse cx="600.2" cy="271.9" rx="2.7" ry="1.8" fill="#6c19cb"/><ellipse cx="598.6" cy="274.0" rx="4.2" ry="1.3" fill="#4e10a8"/><ellipse cx="600.1" cy="276.4" rx="3.2" ry="1.2" fill="#4d0fa5"/><ellipse cx="598.2" cy="278.8" rx="4.2" ry="1.1" fill="#721bd1"/><ellipse cx="600.3" cy="282.0" rx="3.4" ry="1.2" fill="#5511b2"/><ellipse cx="598.4" cy="285.3" rx="3.8" ry="1.5" fill="#5812b7"/><ellipse cx="600.6" cy="287.5" rx="4.1" ry="1.1" fill="#5211af"/><ellipse cx="598.4" cy="290.6" rx="2.9" ry="1.1" fill="#6d19cc"/><ellipse cx="600.2" cy="292.7" rx="3.7" ry="1.0" fill="#6b18ca"/><ellipse cx="598.7" cy="295.8" rx="3.6" ry="1.8" fill="#5a13ba"/><ellipse cx="600.0" cy="298.1" rx="2.9" ry="1.5" fill="#6e19cd"/><ellipse cx="598.3" cy="300.3" rx="3.0" ry="1.5" fill="#711acf"/><ellipse cx="600.3" cy="303.4" rx="3.2" ry="1.7" fill="#761cd5"/><ellipse cx="598.8" cy="305.8" rx="3.3" ry="1.7" fill="#741bd2"/><ellipse cx="600.5" cy="309.1" rx="4.2" ry="1.3" fill="#5611b4"/><ellipse cx="598.5" cy="312.0" rx="3.3" ry="1.2" fill="#6918c8"/><ellipse cx="600.2" cy="314.3" rx="3.9" ry="0.9" fill="#6817c7"/><ellipse cx="598.4" cy="317.6" rx="3.9" ry="1.2" fill="#5411b2"/><ellipse cx="600.1" cy="319.8" rx="4.2" ry="1.6" fill="#5712b7"/><ellipse cx="598.6" cy="321.8" rx="3.4" ry="1.4" fill="#4c0fa5"/><ellipse cx="600.0" cy="325.3" rx="4.2" ry="1.3" fill="#711acf"/><ellipse cx="598.9" cy="328.1" rx="2.9" ry="1.2" fill="#5411b1"/><ellipse cx="600.1" cy="331.0" rx="2.8" ry="1.0" fill="#5912b9"/><ellipse cx="598.7" cy="334.5" rx="2.9" ry="1.8" fill="#6115c0"/><ellipse cx="600.0" cy="336.6" rx="3.1" ry="1.3" fill="#6f1acd"/><ellipse cx="598.6" cy="339.3" rx="3.7" ry="1.0" fill="#6b18ca"/><ellipse cx="600.3" cy="341.8" rx="2.5" ry="1.2" fill="#5912b9"/><ellipse cx="598.9" cy="348.4" rx="3.3" ry="1.5" fill="#5d14bd"/><ellipse cx="600.2" cy="350.9" rx="2.5" ry="1.3" fill="#4f10a8"/><ellipse cx="598.7" cy="354.4" rx="2.8" ry="1.4" fill="#6215c1"/><ellipse cx="599.9" cy="357.3" rx="3.0" ry="1.2" fill="#5a13ba"/><ellipse cx="598.3" cy="360.1" rx="3.8" ry="1.5" fill="#6817c8"/><ellipse cx="600.2" cy="362.6" rx="2.5" ry="1.8" fill="#480e9d"/><ellipse cx="598.4" cy="365.9" rx="3.5" ry="1.6" fill="#4b0fa2"/><ellipse cx="600.7" cy="368.6" rx="3.8" ry="1.4" fill="#5912b9"/><ellipse cx="598.4" cy="371.6" rx="3.0" ry="1.4" fill="#6817c7"/><ellipse cx="600.4" cy="374.1" rx="3.2" ry="1.7" fill="#6015bf"/><ellipse cx="598.5" cy="376.1" rx="3.6" ry="1.3" fill="#6115c0"/><ellipse cx="600.6" cy="379.7" rx="2.7" ry="1.3" fill="#5e14be"/><ellipse cx="598.8" cy="382.0" rx="3.8" ry="1.8" fill="#6817c7"/><ellipse cx="600.6" cy="389.6" rx="2.8" ry="1.1" fill="#6416c3"/><ellipse cx="598.5" cy="393.1" rx="2.4" ry="1.9" fill="#5511b3"/><ellipse cx="600.2" cy="396.1" rx="2.7" ry="1.6" fill="#6015c0"/><ellipse cx="598.9" cy="399.6" rx="2.6" ry="1.3" fill="#5b13bb"/><ellipse cx="600.1" cy="402.1" rx="2.7" ry="1.8" fill="#6a18c9"/><ellipse cx="598.7" cy="405.7" rx="2.5" ry="1.2" fill="#5010ab"/><ellipse cx="600.6" cy="408.6" rx="3.1" ry="1.6" fill="#4d0fa6"/><ellipse cx="598.3" cy="411.8" rx="2.6" ry="1.8" fill="#6918c8"/><ellipse cx="600.0" cy="413.8" rx="2.6" ry="1.3" fill="#4e10a8"/><ellipse cx="598.6" cy="417.2" rx="3.5" ry="1.6" fill="#5a13b9"/><ellipse cx="600.3" cy="419.3" rx="3.9" ry="1.3" fill="#4c0fa3"/><ellipse cx="598.8" cy="421.9" rx="3.0" ry="1.5" fill="#5f14bf"/><ellipse cx="600.2" cy="430.6" rx="3.4" ry="1.1" fill="#6918c8"/><ellipse cx="598.6" cy="433.0" rx="3.9" ry="1.6" fill="#5210ae"/><ellipse cx="600.7" cy="436.1" rx="3.0" ry="1.1" fill="#4e10a7"/><ellipse cx="598.7" cy="438.9" rx="2.5" ry="1.9" fill="#4c0fa4"/><ellipse cx="600.4" cy="441.7" rx="3.0" ry="1.8" fill="#5b13bb"/><ellipse cx="598.5" cy="444.5" rx="2.6" ry="1.7" fill="#6316c3"/><ellipse cx="600.2" cy="448.2" rx="2.4" ry="1.7" fill="#440d97"/><ellipse cx="598.6" cy="451.7" rx="3.5" ry="1.6" fill="#5f14bf"/><ellipse cx="600.4" cy="455.0" rx="2.5" ry="1.6" fill="#5812b8"/><ellipse cx="598.3" cy="463.3" rx="3.4" ry="1.6" fill="#6817c7"/><ellipse cx="602.7" cy="436.0" rx="4.1" ry="1.5" fill="#a82ac4"/><ellipse cx="603.2" cy="438.1" rx="4.2" ry="1.5" fill="#b12bb6"/><ellipse cx="602.7" cy="440.2" rx="4.2" ry="1.5" fill="#c12c9d"/><ellipse cx="603.4" cy="442.3" rx="4.4" ry="1.5" fill="#ca2b83"/><ellipse cx="603.7" cy="444.4" rx="4.6" ry="1.5" fill="#d82949"/><ellipse cx="602.7" cy="446.5" rx="4.8" ry="1.5" fill="#de2830"/><ellipse cx="602.6" cy="448.6" rx="5.1" ry="1.5" fill="#da2940"/><ellipse cx="603.6" cy="450.7" rx="5.5" ry="1.5" fill="#e53525"/><ellipse cx="603.6" cy="452.8" rx="5.9" ry="1.5" fill="#ef4418"/><ellipse cx="603.7" cy="454.9" rx="6.3" ry="1.5" fill="#ff7700"/><ellipse cx="603.7" cy="457.0" rx="6.9" ry="1.5" fill="#ff9500"/><ellipse cx="603.7" cy="459.1" rx="7.4" ry="1.5" fill="#ffa000"/><ellipse cx="604.5" cy="461.2" rx="8.1" ry="1.5" fill="#ffbf02"/><ellipse cx="603.7" cy="463.3" rx="8.8" ry="1.5" fill="#ffbf01"/><ellipse cx="615.2" cy="103.7" rx="8.9" ry="1.4" fill="#1f0552"/><ellipse cx="617.8" cy="107.0" rx="8.9" ry="1.7" fill="#260663"/><ellipse cx="615.2" cy="109.0" rx="7.3" ry="1.2" fill="#260662"/><ellipse cx="617.7" cy="115.1" rx="8.0" ry="1.0" fill="#210556"/><ellipse cx="615.5" cy="121.0" rx="8.7" ry="1.5" fill="#270664"/><ellipse cx="618.0" cy="124.4" rx="6.3" ry="1.6" fill="#1f0550"/><ellipse cx="613.8" cy="128.0" rx="7.4" ry="1.3" fill="#260663"/><ellipse cx="617.7" cy="130.5" rx="8.5" ry="0.9" fill="#1e044e"/><ellipse cx="614.9" cy="161.0" rx="5.8" ry="1.5" fill="#370a81"/><ellipse cx="618.4" cy="165.9" rx="5.8" ry="1.4" fill="#360a7f"/><ellipse cx="615.1" cy="168.5" rx="8.6" ry="1.0" fill="#35097e"/><ellipse cx="617.7" cy="171.3" rx="7.3" ry="0.9" fill="#390a84"/><ellipse cx="613.9" cy="186.0" rx="7.6" ry="1.5" fill="#490e9e"/><ellipse cx="618.7" cy="193.9" rx="7.4" ry="1.8" fill="#2f0874"/><ellipse cx="613.9" cy="196.6" rx="8.2" ry="1.3" fill="#5010aa"/><ellipse cx="618.2" cy="199.3" rx="8.0" ry="1.4" fill="#5010aa"/><ellipse cx="615.4" cy="219.2" rx="7.9" ry="1.6" fill="#390a85"/><ellipse cx="617.5" cy="222.3" rx="8.3" ry="1.7" fill="#440d97"/><rect x="612.0" y="230" width="9.0" height="110" fill="#4e10a8" opacity="0.8"/><rect x="610.5" y="340" width="12.0" height="126" fill="#420c93" opacity="0.8"/><ellipse cx="614.1" cy="231.0" rx="8.5" ry="1.0" fill="#9e29d0"/><ellipse cx="617.8" cy="234.5" rx="8.7" ry="1.6" fill="#9326d4"/><ellipse cx="615.4" cy="238.0" rx="6.3" ry="1.6" fill="#9827d2"/><ellipse cx="618.8" cy="240.3" rx="8.4" ry="1.3" fill="#731bd2"/><ellipse cx="613.8" cy="243.0" rx="7.8" ry="1.2" fill="#8922d6"/><ellipse cx="618.5" cy="245.4" rx="8.1" ry="1.1" fill="#6b18ca"/><ellipse cx="614.6" cy="248.7" rx="7.4" ry="1.3" fill="#8220d8"/><ellipse cx="618.6" cy="250.7" rx="8.6" ry="1.8" fill="#7d1eda"/><ellipse cx="614.1" cy="253.8" rx="7.1" ry="1.8" fill="#6a18c9"/><ellipse cx="617.5" cy="257.4" rx="5.9" ry="1.5" fill="#6617c5"/><ellipse cx="615.0" cy="260.3" rx="7.7" ry="1.0" fill="#8421d8"/><ellipse cx="617.8" cy="262.6" rx="6.1" ry="1.5" fill="#8c23d6"/><ellipse cx="614.0" cy="266.3" rx="8.1" ry="0.9" fill="#9b28d1"/><ellipse cx="618.4" cy="268.6" rx="8.5" ry="0.9" fill="#801fd9"/><ellipse cx="614.2" cy="271.6" rx="6.0" ry="1.3" fill="#6516c4"/><ellipse cx="618.8" cy="274.9" rx="8.3" ry="1.2" fill="#9f2ad0"/><ellipse cx="614.7" cy="278.0" rx="7.7" ry="1.3" fill="#7d1eda"/><ellipse cx="618.6" cy="280.7" rx="8.9" ry="1.7" fill="#8e24d5"/><ellipse cx="614.7" cy="284.0" rx="7.3" ry="1.6" fill="#6717c6"/><ellipse cx="617.4" cy="287.6" rx="8.6" ry="1.8" fill="#6c19ca"/><ellipse cx="614.9" cy="290.2" rx="7.0" ry="1.5" fill="#8220d8"/><ellipse cx="618.1" cy="293.3" rx="7.3" ry="1.3" fill="#9928d2"/><ellipse cx="613.9" cy="297.0" rx="8.9" ry="0.9" fill="#7c1eda"/><ellipse cx="618.3" cy="300.3" rx="7.8" ry="1.0" fill="#7a1dd8"/><ellipse cx="615.0" cy="303.3" rx="7.5" ry="1.3" fill="#8922d6"/><ellipse cx="619.1" cy="305.6" rx="7.8" ry="1.4" fill="#6e19cd"/><ellipse cx="614.2" cy="308.9" rx="7.0" ry="1.4" fill="#9426d3"/><ellipse cx="619.1" cy="311.5" rx="6.0" ry="1.2" fill="#6516c4"/><ellipse cx="614.0" cy="314.9" rx="5.8" ry="1.0" fill="#711ad0"/><ellipse cx="618.8" cy="317.7" rx="8.7" ry="1.6" fill="#8421d8"/><ellipse cx="615.5" cy="320.0" rx="7.2" ry="1.2" fill="#9f2ad0"/><ellipse cx="619.2" cy="322.0" rx="8.9" ry="1.2" fill="#6c19cb"/><ellipse cx="615.5" cy="325.7" rx="7.7" ry="1.1" fill="#8c23d5"/><ellipse cx="617.8" cy="328.2" rx="6.9" ry="0.9" fill="#8b23d6"/><ellipse cx="615.4" cy="330.8" rx="6.0" ry="1.3" fill="#711ad0"/><ellipse cx="617.9" cy="332.9" rx="6.9" ry="1.0" fill="#9b28d1"/><ellipse cx="615.5" cy="336.3" rx="6.9" ry="1.7" fill="#6b18ca"/><ellipse cx="618.4" cy="339.8" rx="5.9" ry="1.7" fill="#791dd7"/><ellipse cx="615.3" cy="343.1" rx="6.7" ry="1.4" fill="#801fd9"/><ellipse cx="617.9" cy="346.1" rx="5.2" ry="1.2" fill="#711ad0"/><ellipse cx="614.4" cy="349.4" rx="5.9" ry="1.3" fill="#6f1ace"/><ellipse cx="618.2" cy="352.1" rx="7.1" ry="1.3" fill="#791dd8"/><ellipse cx="614.9" cy="355.7" rx="7.0" ry="1.7" fill="#7d1eda"/><ellipse cx="618.8" cy="358.6" rx="6.1" ry="1.6" fill="#6516c4"/><ellipse cx="615.5" cy="360.9" rx="5.7" ry="1.6" fill="#8320d8"/><ellipse cx="618.7" cy="364.0" rx="7.1" ry="1.2" fill="#771cd6"/><ellipse cx="614.7" cy="366.9" rx="8.3" ry="1.5" fill="#5812b8"/><ellipse cx="618.4" cy="370.2" rx="8.4" ry="1.7" fill="#5a13ba"/><ellipse cx="613.9" cy="372.7" rx="7.9" ry="1.6" fill="#771cd5"/><ellipse cx="618.9" cy="375.5" rx="5.5" ry="2.0" fill="#6717c6"/><ellipse cx="615.0" cy="378.1" rx="7.1" ry="1.1" fill="#741bd2"/><ellipse cx="618.9" cy="381.6" rx="7.7" ry="1.8" fill="#8220d8"/><ellipse cx="614.3" cy="383.9" rx="7.7" ry="1.3" fill="#5b13bb"/><ellipse cx="618.5" cy="391.2" rx="8.0" ry="1.3" fill="#5b13bb"/><ellipse cx="615.4" cy="394.7" rx="7.6" ry="1.3" fill="#5912b9"/><ellipse cx="618.9" cy="398.2" rx="6.2" ry="1.2" fill="#5c13bc"/><ellipse cx="614.7" cy="400.2" rx="7.0" ry="1.2" fill="#6d19cc"/><ellipse cx="618.7" cy="402.2" rx="8.1" ry="1.6" fill="#6c19ca"/><ellipse cx="614.7" cy="405.4" rx="8.4" ry="2.0" fill="#6215c1"/><ellipse cx="618.0" cy="407.8" rx="6.0" ry="2.0" fill="#6516c5"/><ellipse cx="614.1" cy="410.5" rx="5.4" ry="1.8" fill="#5c13bc"/><ellipse cx="618.0" cy="412.9" rx="8.3" ry="1.4" fill="#5a13ba"/><ellipse cx="614.2" cy="415.4" rx="8.3" ry="1.9" fill="#6316c2"/><ellipse cx="618.8" cy="417.5" rx="7.0" ry="1.2" fill="#7c1eda"/><ellipse cx="614.2" cy="420.7" rx="5.7" ry="1.4" fill="#6e19cd"/><ellipse cx="619.0" cy="423.7" rx="6.0" ry="1.5" fill="#8a23d6"/><ellipse cx="614.9" cy="426.6" rx="8.2" ry="1.4" fill="#5c13bc"/><ellipse cx="619.1" cy="430.1" rx="8.3" ry="1.1" fill="#701ace"/><ellipse cx="614.9" cy="433.1" rx="5.6" ry="1.9" fill="#6617c6"/><ellipse cx="619.0" cy="436.1" rx="6.8" ry="1.6" fill="#731bd2"/><ellipse cx="614.4" cy="438.8" rx="6.7" ry="1.2" fill="#8822d7"/><ellipse cx="617.8" cy="445.8" rx="5.8" ry="1.5" fill="#6a18c9"/><ellipse cx="615.4" cy="448.1" rx="7.9" ry="1.5" fill="#791dd7"/><ellipse cx="618.1" cy="450.4" rx="5.1" ry="1.3" fill="#6918c8"/><ellipse cx="614.5" cy="454.0" rx="5.4" ry="1.2" fill="#6c19cb"/><ellipse cx="619.0" cy="457.5" rx="6.1" ry="1.5" fill="#6717c6"/><ellipse cx="613.8" cy="460.8" rx="5.8" ry="1.3" fill="#6516c4"/><ellipse cx="618.2" cy="463.7" rx="7.7" ry="1.3" fill="#711acf"/><ellipse cx="619.8" cy="426.0" rx="6.1" ry="1.5" fill="#ae2bbb"/><ellipse cx="618.8" cy="428.1" rx="6.1" ry="1.5" fill="#ac2bbe"/><ellipse cx="618.8" cy="430.2" rx="6.1" ry="1.5" fill="#ba2ba9"/><ellipse cx="620.2" cy="432.3" rx="6.2" ry="1.5" fill="#c32c9b"/><ellipse cx="620.1" cy="434.4" rx="6.4" ry="1.5" fill="#c52c98"/><ellipse cx="619.5" cy="436.5" rx="6.6" ry="1.5" fill="#d62950"/><ellipse cx="618.9" cy="438.6" rx="6.8" ry="1.5" fill="#d32a5e"/><ellipse cx="620.5" cy="440.7" rx="7.1" ry="1.5" fill="#dd2835"/><ellipse cx="619.4" cy="442.8" rx="7.4" ry="1.5" fill="#e12c2c"/><ellipse cx="619.3" cy="444.9" rx="7.8" ry="1.5" fill="#f34c11"/><ellipse cx="620.6" cy="447.0" rx="8.2" ry="1.5" fill="#f44e10"/><ellipse cx="619.8" cy="449.1" rx="8.7" ry="1.5" fill="#fa5707"/><ellipse cx="620.0" cy="451.2" rx="9.2" ry="1.5" fill="#ff6a00"/><ellipse cx="621.0" cy="453.3" rx="9.7" ry="1.5" fill="#ff7f00"/><ellipse cx="621.1" cy="455.4" rx="10.3" ry="1.5" fill="#ff9800"/><ellipse cx="620.2" cy="457.5" rx="11.0" ry="1.5" fill="#ff8d00"/><ellipse cx="621.0" cy="459.6" rx="11.6" ry="1.5" fill="#ffd013"/><ellipse cx="620.8" cy="461.7" rx="12.4" ry="1.5" fill="#fff747"/><ellipse cx="620.1" cy="463.8" rx="13.1" ry="1.5" fill="#fff137"/><rect x="652.0" y="98" width="12.0" height="242" fill="#5812b8" opacity="0.8"/><rect x="650.0" y="340" width="16.0" height="126" fill="#4b0fa2" opacity="0.8"/><ellipse cx="655.5" cy="99.0" rx="9.0" ry="0.9" fill="#6e19cc"/><ellipse cx="660.0" cy="102.5" rx="11.0" ry="1.5" fill="#6f1acd"/><ellipse cx="655.7" cy="104.9" rx="11.2" ry="1.3" fill="#b82bab"/><ellipse cx="659.3" cy="108.0" rx="10.1" ry="1.4" fill="#b82bac"/><ellipse cx="656.2" cy="111.7" rx="8.2" ry="1.4" fill="#a52ac9"/><ellipse cx="661.5" cy="113.9" rx="8.4" ry="1.1" fill="#aa2bc0"/><ellipse cx="654.6" cy="117.1" rx="9.0" ry="1.6" fill="#8c23d5"/><ellipse cx="661.4" cy="119.8" rx="8.5" ry="1.2" fill="#bc2ba5"/><ellipse cx="655.4" cy="122.6" rx="10.6" ry="1.0" fill="#8a23d6"/><ellipse cx="660.2" cy="125.7" rx="8.8" ry="1.1" fill="#a92ac2"/><ellipse cx="656.3" cy="128.7" rx="8.9" ry="1.5" fill="#9526d3"/><ellipse cx="659.6" cy="132.0" rx="9.2" ry="1.0" fill="#9025d5"/><ellipse cx="654.8" cy="135.7" rx="8.7" ry="1.1" fill="#8922d6"/><ellipse cx="660.8" cy="137.9" rx="10.0" ry="1.2" fill="#8320d8"/><ellipse cx="655.0" cy="140.1" rx="8.4" ry="1.8" fill="#7a1dd8"/><ellipse cx="659.2" cy="143.6" rx="11.2" ry="0.9" fill="#741bd3"/><ellipse cx="655.8" cy="146.7" rx="10.2" ry="0.9" fill="#8c23d5"/><ellipse cx="659.3" cy="150.0" rx="8.8" ry="1.7" fill="#ab2bbf"/><ellipse cx="654.9" cy="152.3" rx="12.0" ry="1.8" fill="#731bd1"/><ellipse cx="659.2" cy="154.6" rx="8.1" ry="1.2" fill="#721bd1"/><ellipse cx="656.4" cy="158.3" rx="9.3" ry="1.4" fill="#a22acd"/><ellipse cx="659.7" cy="160.5" rx="8.9" ry="0.9" fill="#6e19cd"/><ellipse cx="655.7" cy="164.2" rx="9.5" ry="1.4" fill="#ba2ba9"/><ellipse cx="661.4" cy="167.6" rx="11.8" ry="1.1" fill="#8521d8"/><ellipse cx="656.1" cy="170.6" rx="12.0" ry="1.4" fill="#b82bac"/><ellipse cx="660.1" cy="173.7" rx="10.5" ry="1.1" fill="#7f1fd9"/><ellipse cx="655.4" cy="177.4" rx="11.0" ry="1.2" fill="#8320d8"/><ellipse cx="661.1" cy="180.6" rx="9.0" ry="1.2" fill="#9f2ad0"/><ellipse cx="655.7" cy="183.6" rx="10.1" ry="1.6" fill="#8822d7"/><ellipse cx="659.5" cy="185.8" rx="9.9" ry="1.1" fill="#771cd5"/><ellipse cx="655.7" cy="189.4" rx="11.0" ry="1.2" fill="#761cd5"/><ellipse cx="660.9" cy="191.5" rx="9.1" ry="1.8" fill="#781dd6"/><ellipse cx="655.6" cy="193.8" rx="9.1" ry="1.2" fill="#7c1eda"/><ellipse cx="661.0" cy="196.0" rx="9.2" ry="1.8" fill="#8c23d5"/><ellipse cx="655.9" cy="199.0" rx="8.8" ry="1.0" fill="#8120d9"/><ellipse cx="661.1" cy="201.8" rx="7.9" ry="0.9" fill="#8f24d5"/><ellipse cx="655.1" cy="205.4" rx="11.5" ry="1.2" fill="#801fd9"/><ellipse cx="659.9" cy="207.7" rx="9.8" ry="0.9" fill="#a42ac9"/><ellipse cx="656.3" cy="210.7" rx="8.4" ry="1.7" fill="#8722d7"/><ellipse cx="660.0" cy="214.2" rx="9.1" ry="1.2" fill="#8521d7"/><ellipse cx="656.8" cy="216.9" rx="9.2" ry="1.4" fill="#b82bab"/><ellipse cx="660.9" cy="219.9" rx="9.5" ry="1.0" fill="#7e1fd9"/><ellipse cx="655.1" cy="223.4" rx="11.7" ry="1.1" fill="#761cd5"/><ellipse cx="660.0" cy="226.7" rx="11.6" ry="1.0" fill="#a42aca"/><ellipse cx="655.5" cy="229.6" rx="11.5" ry="1.3" fill="#ba2ba8"/><ellipse cx="660.9" cy="232.7" rx="10.8" ry="1.5" fill="#8b23d6"/><ellipse cx="655.2" cy="236.0" rx="11.1" ry="1.6" fill="#771cd5"/><ellipse cx="659.2" cy="238.3" rx="11.9" ry="1.5" fill="#9025d4"/><ellipse cx="656.0" cy="240.7" rx="10.1" ry="1.6" fill="#9526d3"/><ellipse cx="660.8" cy="244.2" rx="10.0" ry="1.4" fill="#bb2ba7"/><ellipse cx="654.7" cy="246.4" rx="11.9" ry="1.6" fill="#6d19cc"/><ellipse cx="659.7" cy="248.8" rx="9.0" ry="1.6" fill="#9627d3"/><ellipse cx="654.9" cy="252.3" rx="10.7" ry="1.5" fill="#6c19cb"/><ellipse cx="661.0" cy="254.6" rx="8.5" ry="1.1" fill="#801fd9"/><ellipse cx="656.2" cy="257.4" rx="8.3" ry="1.1" fill="#741bd3"/><ellipse cx="660.0" cy="259.6" rx="8.2" ry="1.1" fill="#8521d8"/><ellipse cx="656.1" cy="262.3" rx="7.8" ry="1.6" fill="#6f1ace"/><ellipse cx="659.5" cy="264.5" rx="10.6" ry="1.8" fill="#8922d6"/><ellipse cx="656.3" cy="267.7" rx="8.3" ry="1.7" fill="#701ace"/><ellipse cx="661.0" cy="269.8" rx="11.3" ry="1.3" fill="#a22acc"/><ellipse cx="655.2" cy="272.5" rx="9.7" ry="1.5" fill="#801fd9"/><ellipse cx="660.6" cy="275.3" rx="8.8" ry="1.3" fill="#ab2bbf"/><ellipse cx="656.7" cy="277.7" rx="9.4" ry="1.3" fill="#b32bb2"/><ellipse cx="660.8" cy="280.7" rx="8.2" ry="1.1" fill="#711acf"/><ellipse cx="654.4" cy="283.2" rx="7.9" ry="1.7" fill="#6f1ace"/><ellipse cx="660.6" cy="286.4" rx="10.0" ry="1.3" fill="#b52bb0"/><ellipse cx="656.4" cy="289.3" rx="10.2" ry="1.6" fill="#7e1fd9"/><ellipse cx="660.7" cy="293.0" rx="8.5" ry="1.4" fill="#b22bb4"/><ellipse cx="655.0" cy="295.3" rx="9.3" ry="1.2" fill="#ad2bbc"/><ellipse cx="659.4" cy="298.8" rx="10.5" ry="1.3" fill="#8722d7"/><ellipse cx="656.3" cy="301.0" rx="8.4" ry="1.4" fill="#ad2bbd"/><ellipse cx="660.3" cy="303.4" rx="11.7" ry="1.4" fill="#7e1fd9"/><ellipse cx="654.6" cy="306.1" rx="11.6" ry="0.9" fill="#aa2bc1"/><ellipse cx="660.9" cy="309.5" rx="10.8" ry="1.5" fill="#a42aca"/><ellipse cx="654.9" cy="311.9" rx="8.7" ry="1.4" fill="#b52bb0"/><ellipse cx="660.7" cy="314.2" rx="8.2" ry="0.9" fill="#781dd6"/><ellipse cx="654.6" cy="317.2" rx="7.7" ry="1.2" fill="#9627d3"/><ellipse cx="661.1" cy="319.4" rx="8.3" ry="1.3" fill="#b32bb3"/><ellipse cx="655.6" cy="322.6" rx="10.0" ry="1.1" fill="#9627d3"/><ellipse cx="660.4" cy="324.7" rx="8.2" ry="1.7" fill="#741bd2"/><ellipse cx="655.2" cy="327.2" rx="10.5" ry="1.6" fill="#6c19cb"/><ellipse cx="660.8" cy="330.0" rx="11.7" ry="1.6" fill="#b32bb3"/><ellipse cx="656.3" cy="332.4" rx="10.4" ry="1.2" fill="#8621d7"/><ellipse cx="659.6" cy="335.2" rx="10.2" ry="1.6" fill="#8120d9"/><ellipse cx="655.3" cy="337.8" rx="10.3" ry="1.4" fill="#721bd1"/><ellipse cx="660.6" cy="341.2" rx="10.9" ry="1.6" fill="#8c23d6"/><ellipse cx="655.9" cy="344.1" rx="8.0" ry="1.3" fill="#711acf"/><ellipse cx="660.2" cy="346.4" rx="10.3" ry="1.8" fill="#7d1eda"/><ellipse cx="655.2" cy="350.0" rx="10.9" ry="1.2" fill="#8a23d6"/><ellipse cx="659.5" cy="355.3" rx="6.8" ry="1.2" fill="#9526d3"/><ellipse cx="655.9" cy="358.7" rx="8.7" ry="1.7" fill="#7e1fda"/><ellipse cx="660.7" cy="366.1" rx="8.0" ry="1.1" fill="#8e24d5"/><ellipse cx="655.4" cy="368.5" rx="9.4" ry="1.4" fill="#9627d3"/><ellipse cx="660.7" cy="371.7" rx="9.1" ry="1.3" fill="#a62ac7"/><ellipse cx="655.9" cy="379.0" rx="7.7" ry="1.4" fill="#7e1fd9"/><ellipse cx="661.5" cy="382.3" rx="8.4" ry="1.4" fill="#8120d8"/><ellipse cx="654.7" cy="385.4" rx="10.4" ry="1.1" fill="#8822d7"/><ellipse cx="661.1" cy="388.5" rx="10.3" ry="1.3" fill="#8621d7"/><ellipse cx="655.1" cy="391.1" rx="9.3" ry="1.6" fill="#9125d4"/><ellipse cx="661.5" cy="394.3" rx="10.2" ry="1.5" fill="#6a18c9"/><ellipse cx="656.7" cy="397.3" rx="9.7" ry="1.8" fill="#6c19cb"/><ellipse cx="659.9" cy="399.7" rx="10.1" ry="1.3" fill="#761cd5"/><ellipse cx="655.1" cy="402.2" rx="7.3" ry="1.2" fill="#9326d4"/><ellipse cx="659.6" cy="404.3" rx="8.0" ry="1.9" fill="#8421d8"/><ellipse cx="655.2" cy="406.4" rx="8.2" ry="1.8" fill="#9125d4"/><ellipse cx="660.6" cy="409.9" rx="10.9" ry="2.0" fill="#8220d8"/><ellipse cx="655.6" cy="413.1" rx="8.7" ry="1.7" fill="#6717c6"/><ellipse cx="661.0" cy="415.9" rx="9.3" ry="1.8" fill="#6b18ca"/><ellipse cx="656.4" cy="418.2" rx="8.3" ry="1.3" fill="#6617c6"/><ellipse cx="659.4" cy="421.8" rx="10.7" ry="1.2" fill="#7a1dd8"/><ellipse cx="656.6" cy="425.3" rx="9.6" ry="1.2" fill="#731bd1"/><ellipse cx="660.8" cy="428.4" rx="9.9" ry="1.2" fill="#6e19cd"/><ellipse cx="654.6" cy="432.0" rx="8.3" ry="1.2" fill="#8f24d5"/><ellipse cx="659.5" cy="434.7" rx="10.1" ry="1.8" fill="#8621d7"/><ellipse cx="655.8" cy="437.5" rx="10.3" ry="1.6" fill="#9426d3"/><ellipse cx="659.7" cy="440.8" rx="9.4" ry="1.4" fill="#6817c7"/><ellipse cx="656.3" cy="447.2" rx="8.4" ry="1.6" fill="#751cd3"/><ellipse cx="660.1" cy="449.2" rx="9.9" ry="1.2" fill="#7b1ed9"/><ellipse cx="655.3" cy="451.3" rx="9.5" ry="1.3" fill="#8b23d6"/><ellipse cx="660.3" cy="453.6" rx="9.0" ry="1.2" fill="#8621d7"/><ellipse cx="654.9" cy="457.2" rx="11.0" ry="1.4" fill="#741bd3"/><ellipse cx="659.5" cy="459.9" rx="7.8" ry="1.4" fill="#791dd7"/><ellipse cx="658.0" cy="113" rx="6.0" ry="2" fill="#e53426"/><ellipse cx="658.0" cy="127" rx="6.0" ry="2" fill="#db293f"/><ellipse cx="658.0" cy="216" rx="6.0" ry="2" fill="#cd2b79"/><ellipse cx="658.0" cy="352" rx="6.0" ry="2" fill="#d42a5c"/><ellipse cx="658.0" cy="372" rx="6.0" ry="2" fill="#db293f"/><ellipse cx="659.7" cy="432.0" rx="6.1" ry="1.5" fill="#b12bb5"/><ellipse cx="658.8" cy="434.1" rx="6.1" ry="1.5" fill="#af2bb9"/><ellipse cx="658.4" cy="436.2" rx="6.2" ry="1.5" fill="#c72c90"/><ellipse cx="659.1" cy="438.3" rx="6.3" ry="1.5" fill="#c62c96"/><ellipse cx="659.9" cy="440.4" rx="6.5" ry="1.5" fill="#d22a61"/><ellipse cx="660.6" cy="442.5" rx="6.8" ry="1.5" fill="#de2830"/><ellipse cx="660.6" cy="444.6" rx="7.2" ry="1.5" fill="#df292f"/><ellipse cx="659.3" cy="446.7" rx="7.6" ry="1.5" fill="#e83a21"/><ellipse cx="659.6" cy="448.8" rx="8.0" ry="1.5" fill="#ef4617"/><ellipse cx="660.8" cy="450.9" rx="8.5" ry="1.5" fill="#ff6500"/><ellipse cx="660.6" cy="453.0" rx="9.1" ry="1.5" fill="#f6510c"/><ellipse cx="661.0" cy="455.1" rx="9.8" ry="1.5" fill="#ff7f00"/><ellipse cx="660.7" cy="457.2" rx="10.5" ry="1.5" fill="#ff7600"/><ellipse cx="660.6" cy="459.3" rx="11.3" ry="1.5" fill="#ff9000"/><ellipse cx="660.5" cy="461.4" rx="12.1" ry="1.5" fill="#ff9e00"/><ellipse cx="661.0" cy="463.5" rx="13.0" ry="1.5" fill="#ffa100"/><rect x="695.4" y="98" width="10.2" height="242" fill="#4e10a8" opacity="0.8"/><rect x="693.7" y="340" width="13.6" height="126" fill="#420c93" opacity="0.8"/><ellipse cx="698.4" cy="99.0" rx="6.7" ry="1.5" fill="#6717c6"/><ellipse cx="701.5" cy="101.1" rx="9.4" ry="1.7" fill="#7a1dd8"/><ellipse cx="698.5" cy="104.3" rx="9.3" ry="1.0" fill="#791dd7"/><ellipse cx="701.9" cy="106.9" rx="8.2" ry="1.2" fill="#7a1dd8"/><ellipse cx="698.6" cy="109.2" rx="6.9" ry="1.4" fill="#8120d9"/><ellipse cx="702.2" cy="111.6" rx="9.1" ry="1.4" fill="#7f1fd9"/><ellipse cx="697.9" cy="113.6" rx="7.7" ry="1.6" fill="#731bd1"/><ellipse cx="703.1" cy="117.0" rx="8.1" ry="1.3" fill="#9a28d2"/><ellipse cx="698.9" cy="119.2" rx="9.4" ry="1.6" fill="#701acf"/><ellipse cx="702.4" cy="122.2" rx="8.9" ry="1.2" fill="#8e24d5"/><ellipse cx="697.7" cy="124.3" rx="8.3" ry="1.7" fill="#7c1eda"/><ellipse cx="701.8" cy="126.9" rx="8.1" ry="1.2" fill="#6e19cd"/><ellipse cx="697.5" cy="129.1" rx="9.4" ry="1.3" fill="#711ad0"/><ellipse cx="702.2" cy="131.5" rx="8.8" ry="1.2" fill="#7b1ed9"/><ellipse cx="698.9" cy="134.6" rx="7.3" ry="1.4" fill="#8e24d5"/><ellipse cx="703.2" cy="137.5" rx="8.2" ry="1.3" fill="#9727d2"/><ellipse cx="699.2" cy="140.9" rx="7.9" ry="1.0" fill="#801fd9"/><ellipse cx="702.8" cy="144.0" rx="6.7" ry="1.3" fill="#8f24d5"/><ellipse cx="697.9" cy="146.0" rx="7.2" ry="1.5" fill="#8822d7"/><ellipse cx="703.4" cy="148.1" rx="7.3" ry="1.5" fill="#6918c8"/><ellipse cx="698.6" cy="151.7" rx="8.1" ry="1.3" fill="#8e24d5"/><ellipse cx="702.6" cy="154.0" rx="9.3" ry="1.3" fill="#9025d5"/><ellipse cx="699.2" cy="156.4" rx="9.2" ry="1.4" fill="#6f1acd"/><ellipse cx="702.3" cy="159.0" rx="7.8" ry="1.1" fill="#9e29d1"/><ellipse cx="698.4" cy="161.5" rx="8.0" ry="1.3" fill="#6e19cd"/><ellipse cx="702.8" cy="164.9" rx="8.4" ry="1.8" fill="#731bd2"/><ellipse cx="698.7" cy="167.9" rx="7.2" ry="1.1" fill="#9b28d1"/><ellipse cx="702.1" cy="171.3" rx="9.6" ry="1.0" fill="#6717c6"/><ellipse cx="699.0" cy="174.5" rx="10.0" ry="1.7" fill="#751cd4"/><ellipse cx="702.7" cy="176.9" rx="6.7" ry="1.8" fill="#6817c7"/><ellipse cx="699.4" cy="179.5" rx="8.3" ry="1.4" fill="#721bd0"/><ellipse cx="702.6" cy="181.7" rx="9.5" ry="1.7" fill="#8922d6"/><ellipse cx="698.8" cy="185.1" rx="8.8" ry="1.3" fill="#781dd6"/><ellipse cx="701.8" cy="187.9" rx="6.8" ry="1.5" fill="#6e19cd"/><ellipse cx="698.9" cy="191.5" rx="7.2" ry="1.0" fill="#9f2ad0"/><ellipse cx="702.2" cy="193.7" rx="7.8" ry="1.1" fill="#9225d4"/><ellipse cx="697.5" cy="196.8" rx="6.5" ry="1.7" fill="#6b18ca"/><ellipse cx="702.5" cy="199.5" rx="7.3" ry="1.7" fill="#781dd6"/><ellipse cx="697.7" cy="202.4" rx="8.9" ry="1.7" fill="#7e1fda"/><ellipse cx="702.0" cy="204.6" rx="8.4" ry="1.1" fill="#711acf"/><ellipse cx="698.7" cy="208.1" rx="8.0" ry="1.2" fill="#6c19cb"/><ellipse cx="703.1" cy="211.4" rx="7.8" ry="1.7" fill="#7a1dd9"/><ellipse cx="697.6" cy="214.8" rx="9.9" ry="1.1" fill="#761cd4"/><ellipse cx="702.0" cy="217.7" rx="9.7" ry="1.2" fill="#9627d3"/><ellipse cx="697.6" cy="221.1" rx="9.7" ry="1.2" fill="#751cd3"/><ellipse cx="702.7" cy="223.1" rx="7.6" ry="1.7" fill="#8320d8"/><ellipse cx="699.0" cy="225.8" rx="9.2" ry="1.4" fill="#7c1eda"/><ellipse cx="702.1" cy="228.1" rx="7.0" ry="1.6" fill="#9b28d1"/><ellipse cx="698.6" cy="230.8" rx="8.5" ry="1.5" fill="#9125d4"/><ellipse cx="701.7" cy="234.3" rx="8.3" ry="1.0" fill="#6a18c9"/><ellipse cx="698.8" cy="237.6" rx="6.8" ry="1.1" fill="#731bd1"/><ellipse cx="702.0" cy="240.3" rx="7.5" ry="1.6" fill="#6f1ace"/><ellipse cx="698.2" cy="242.5" rx="6.5" ry="1.6" fill="#7b1ed9"/><ellipse cx="701.6" cy="245.7" rx="6.7" ry="1.7" fill="#6e19cd"/><ellipse cx="698.3" cy="247.8" rx="8.9" ry="1.3" fill="#8220d8"/><ellipse cx="703.1" cy="250.6" rx="6.8" ry="1.1" fill="#791dd7"/><ellipse cx="698.2" cy="253.4" rx="7.9" ry="1.8" fill="#771cd5"/><ellipse cx="701.6" cy="255.8" rx="9.5" ry="1.0" fill="#9a28d2"/><ellipse cx="697.6" cy="258.3" rx="7.0" ry="1.4" fill="#771cd5"/><ellipse cx="703.0" cy="261.6" rx="10.2" ry="1.6" fill="#7a1dd8"/><ellipse cx="698.4" cy="264.0" rx="9.3" ry="1.8" fill="#721bd1"/><ellipse cx="702.8" cy="267.5" rx="9.1" ry="1.7" fill="#8f24d5"/><ellipse cx="699.0" cy="270.9" rx="8.0" ry="1.8" fill="#6a18c9"/><ellipse cx="702.1" cy="273.4" rx="9.1" ry="1.7" fill="#9225d4"/><ellipse cx="698.3" cy="277.1" rx="7.1" ry="1.7" fill="#801fd9"/><ellipse cx="703.3" cy="279.4" rx="8.4" ry="1.3" fill="#6817c7"/><ellipse cx="698.1" cy="281.8" rx="9.7" ry="1.3" fill="#9a28d2"/><ellipse cx="701.7" cy="284.6" rx="6.5" ry="1.4" fill="#7b1ed9"/><ellipse cx="697.9" cy="287.2" rx="9.0" ry="1.4" fill="#9426d3"/><ellipse cx="702.9" cy="289.6" rx="7.4" ry="1.3" fill="#801fd9"/><ellipse cx="698.6" cy="291.7" rx="7.3" ry="1.5" fill="#8722d7"/><ellipse cx="701.5" cy="295.1" rx="8.6" ry="1.8" fill="#6d19cb"/><ellipse cx="698.2" cy="297.2" rx="9.1" ry="0.9" fill="#9125d4"/><ellipse cx="703.5" cy="299.9" rx="10.2" ry="1.5" fill="#6416c3"/><ellipse cx="699.2" cy="302.9" rx="10.1" ry="1.2" fill="#8f24d5"/><ellipse cx="701.7" cy="305.6" rx="9.9" ry="1.1" fill="#6215c2"/><ellipse cx="698.0" cy="308.5" rx="8.1" ry="1.5" fill="#8b23d6"/><ellipse cx="702.3" cy="311.9" rx="8.6" ry="1.5" fill="#6c19cb"/><ellipse cx="699.0" cy="314.9" rx="7.8" ry="1.7" fill="#6316c3"/><ellipse cx="702.7" cy="317.9" rx="7.6" ry="1.8" fill="#6f1ace"/><ellipse cx="698.7" cy="321.1" rx="6.9" ry="1.6" fill="#9727d3"/><ellipse cx="703.1" cy="323.4" rx="9.7" ry="1.4" fill="#9526d3"/><ellipse cx="698.9" cy="326.5" rx="6.9" ry="1.0" fill="#6316c2"/><ellipse cx="702.5" cy="329.4" rx="7.0" ry="1.1" fill="#6516c4"/><ellipse cx="698.2" cy="332.8" rx="8.8" ry="1.1" fill="#9f2ad0"/><ellipse cx="701.7" cy="335.5" rx="7.9" ry="1.1" fill="#9827d2"/><ellipse cx="698.0" cy="337.9" rx="7.7" ry="1.8" fill="#6918c8"/><ellipse cx="703.1" cy="340.4" rx="6.0" ry="2.0" fill="#6918c8"/><ellipse cx="699.4" cy="342.8" rx="7.8" ry="1.2" fill="#6717c6"/><ellipse cx="702.6" cy="346.2" rx="8.0" ry="1.7" fill="#5a13ba"/><ellipse cx="699.5" cy="354.6" rx="6.9" ry="1.3" fill="#7a1dd8"/><ellipse cx="701.9" cy="358.1" rx="8.5" ry="1.2" fill="#6a18c9"/><ellipse cx="699.0" cy="360.9" rx="7.7" ry="1.3" fill="#6918c8"/><ellipse cx="701.6" cy="364.1" rx="7.2" ry="1.1" fill="#6316c2"/><ellipse cx="698.4" cy="367.6" rx="8.0" ry="1.4" fill="#731bd2"/><ellipse cx="702.1" cy="370.5" rx="6.3" ry="1.5" fill="#8120d9"/><ellipse cx="697.7" cy="372.6" rx="8.0" ry="2.0" fill="#8c23d6"/><ellipse cx="702.2" cy="375.9" rx="6.5" ry="1.7" fill="#8220d8"/><ellipse cx="698.2" cy="379.2" rx="8.8" ry="1.1" fill="#7e1fd9"/><ellipse cx="703.2" cy="382.6" rx="6.8" ry="1.9" fill="#6316c2"/><ellipse cx="699.1" cy="386.0" rx="7.8" ry="1.3" fill="#5d14bc"/><ellipse cx="701.9" cy="388.6" rx="6.4" ry="1.8" fill="#8421d8"/><ellipse cx="697.7" cy="397.0" rx="8.9" ry="1.2" fill="#5c13bc"/><ellipse cx="703.4" cy="400.0" rx="8.9" ry="1.9" fill="#8a23d6"/><ellipse cx="697.8" cy="402.6" rx="8.0" ry="1.9" fill="#8120d9"/><ellipse cx="703.3" cy="405.9" rx="6.5" ry="1.4" fill="#8421d8"/><ellipse cx="698.5" cy="412.1" rx="7.7" ry="1.2" fill="#8922d6"/><ellipse cx="702.9" cy="415.0" rx="8.8" ry="1.5" fill="#6617c5"/><ellipse cx="698.8" cy="417.8" rx="6.6" ry="1.2" fill="#6015c0"/><ellipse cx="702.3" cy="420.2" rx="6.2" ry="1.6" fill="#7a1dd8"/><ellipse cx="698.7" cy="422.7" rx="7.0" ry="1.8" fill="#8120d9"/><ellipse cx="703.4" cy="426.1" rx="6.0" ry="2.0" fill="#6717c7"/><ellipse cx="699.3" cy="432.4" rx="8.1" ry="1.9" fill="#8621d7"/><ellipse cx="701.9" cy="435.5" rx="6.1" ry="1.9" fill="#8220d8"/><ellipse cx="698.7" cy="437.9" rx="8.6" ry="1.3" fill="#8722d7"/><ellipse cx="701.8" cy="440.8" rx="7.4" ry="1.1" fill="#751cd3"/><ellipse cx="699.0" cy="444.5" rx="8.7" ry="1.5" fill="#6817c7"/><ellipse cx="701.9" cy="451.0" rx="6.0" ry="1.6" fill="#801fd9"/><ellipse cx="698.9" cy="456.2" rx="8.4" ry="1.1" fill="#6c19cb"/><ellipse cx="703.5" cy="458.7" rx="7.0" ry="1.5" fill="#6316c3"/><ellipse cx="698.5" cy="462.3" rx="9.5" ry="1.8" fill="#6316c2"/><ellipse cx="699.2" cy="424.0" rx="6.6" ry="1.5" fill="#a52ac9"/><ellipse cx="700.6" cy="426.1" rx="6.6" ry="1.5" fill="#b02bb8"/><ellipse cx="700.8" cy="428.2" rx="6.7" ry="1.5" fill="#b62bae"/><ellipse cx="700.7" cy="430.3" rx="6.8" ry="1.5" fill="#ca2b84"/><ellipse cx="700.6" cy="432.4" rx="6.9" ry="1.5" fill="#cf2a70"/><ellipse cx="700.9" cy="434.5" rx="7.1" ry="1.5" fill="#c72c91"/><ellipse cx="701.2" cy="436.6" rx="7.4" ry="1.5" fill="#d02a6c"/><ellipse cx="700.7" cy="438.7" rx="7.7" ry="1.5" fill="#e22e2b"/><ellipse cx="699.9" cy="440.8" rx="8.0" ry="1.5" fill="#e53426"/><ellipse cx="701.3" cy="442.9" rx="8.3" ry="1.5" fill="#ea3c1f"/><ellipse cx="700.2" cy="445.0" rx="8.7" ry="1.5" fill="#f95609"/><ellipse cx="701.7" cy="447.1" rx="9.2" ry="1.5" fill="#ef4418"/><ellipse cx="701.2" cy="449.2" rx="9.7" ry="1.5" fill="#ff6000"/><ellipse cx="700.5" cy="451.3" rx="10.2" ry="1.5" fill="#ff8600"/><ellipse cx="700.7" cy="453.4" rx="10.8" ry="1.5" fill="#ff9000"/><ellipse cx="701.9" cy="455.5" rx="11.4" ry="1.5" fill="#ff7c00"/><ellipse cx="702.2" cy="457.6" rx="12.1" ry="1.5" fill="#ff9100"/><ellipse cx="702.4" cy="459.7" rx="12.8" ry="1.5" fill="#ffc406"/><ellipse cx="701.4" cy="461.8" rx="13.6" ry="1.5" fill="#ffef34"/><ellipse cx="702.8" cy="463.9" rx="14.4" ry="1.5" fill="#fffda7"/><rect x="733.2" y="98" width="9.6" height="242" fill="#5c13bb" opacity="0.8"/><rect x="731.6" y="340" width="12.8" height="70" fill="#4e10a8" opacity="0.8"/><ellipse cx="736.9" cy="99.0" rx="7.6" ry="1.0" fill="#b02bb7"/><ellipse cx="740.0" cy="101.8" rx="9.1" ry="1.6" fill="#801fd9"/><ellipse cx="736.1" cy="105.1" rx="7.5" ry="1.6" fill="#721bd0"/><ellipse cx="740.6" cy="108.6" rx="7.2" ry="0.9" fill="#6f1ace"/><ellipse cx="735.2" cy="111.7" rx="8.9" ry="1.3" fill="#aa2bc1"/><ellipse cx="740.0" cy="115.0" rx="7.2" ry="1.5" fill="#bb2ba6"/><ellipse cx="735.9" cy="118.4" rx="6.7" ry="1.6" fill="#a72ac5"/><ellipse cx="739.8" cy="121.5" rx="6.2" ry="1.1" fill="#a82ac3"/><ellipse cx="736.4" cy="124.5" rx="7.5" ry="1.0" fill="#8f24d5"/><ellipse cx="740.7" cy="126.9" rx="8.6" ry="1.0" fill="#ae2bbb"/><ellipse cx="737.0" cy="129.6" rx="8.6" ry="1.5" fill="#b22bb4"/><ellipse cx="739.6" cy="132.0" rx="7.2" ry="1.5" fill="#6f1ace"/><ellipse cx="735.7" cy="134.2" rx="6.2" ry="1.4" fill="#781dd6"/><ellipse cx="739.7" cy="136.8" rx="7.3" ry="1.6" fill="#8521d8"/><ellipse cx="735.7" cy="140.4" rx="9.1" ry="1.0" fill="#9928d2"/><ellipse cx="740.4" cy="143.2" rx="9.2" ry="1.0" fill="#701acf"/><ellipse cx="736.0" cy="145.9" rx="6.3" ry="1.3" fill="#9e29d1"/><ellipse cx="740.7" cy="148.4" rx="6.4" ry="1.4" fill="#9c29d1"/><ellipse cx="736.7" cy="151.2" rx="7.7" ry="1.0" fill="#8922d6"/><ellipse cx="740.6" cy="154.4" rx="6.9" ry="1.1" fill="#8120d8"/><ellipse cx="735.4" cy="156.7" rx="9.1" ry="1.4" fill="#a92ac2"/><ellipse cx="740.0" cy="159.8" rx="6.5" ry="1.7" fill="#8722d7"/><ellipse cx="736.8" cy="162.5" rx="7.9" ry="1.1" fill="#9125d4"/><ellipse cx="739.6" cy="166.2" rx="6.4" ry="1.1" fill="#731bd1"/><ellipse cx="735.8" cy="169.0" rx="8.2" ry="1.6" fill="#731bd1"/><ellipse cx="739.6" cy="171.6" rx="8.5" ry="1.8" fill="#9f2ad0"/><ellipse cx="735.5" cy="173.9" rx="7.0" ry="0.9" fill="#a42aca"/><ellipse cx="740.1" cy="176.8" rx="8.8" ry="1.2" fill="#9426d3"/><ellipse cx="736.6" cy="180.2" rx="6.9" ry="1.3" fill="#a72ac5"/><ellipse cx="740.0" cy="183.6" rx="7.9" ry="1.3" fill="#ba2ba9"/><ellipse cx="735.7" cy="186.9" rx="7.9" ry="1.4" fill="#701acf"/><ellipse cx="739.9" cy="190.3" rx="9.4" ry="1.1" fill="#751cd3"/><ellipse cx="735.6" cy="193.4" rx="8.3" ry="1.0" fill="#801fd9"/><ellipse cx="739.8" cy="195.6" rx="8.9" ry="1.7" fill="#8621d7"/><ellipse cx="736.2" cy="198.6" rx="9.4" ry="1.0" fill="#741bd2"/><ellipse cx="740.2" cy="201.3" rx="6.8" ry="0.9" fill="#7f1fd9"/><ellipse cx="736.2" cy="203.6" rx="9.0" ry="1.1" fill="#9526d3"/><ellipse cx="739.0" cy="206.7" rx="7.8" ry="1.1" fill="#c02ca0"/><ellipse cx="735.6" cy="209.4" rx="7.0" ry="1.8" fill="#7e1fd9"/><ellipse cx="740.2" cy="211.7" rx="6.5" ry="1.1" fill="#8120d8"/><ellipse cx="735.5" cy="214.3" rx="8.2" ry="1.2" fill="#a22ace"/><ellipse cx="739.7" cy="217.3" rx="6.5" ry="0.9" fill="#c62c96"/><ellipse cx="735.2" cy="220.0" rx="8.5" ry="1.1" fill="#c22c9c"/><ellipse cx="739.8" cy="222.7" rx="8.8" ry="0.9" fill="#9928d2"/><ellipse cx="735.9" cy="225.6" rx="8.9" ry="1.6" fill="#7b1ed9"/><ellipse cx="739.0" cy="228.2" rx="7.1" ry="1.0" fill="#bc2ba5"/><ellipse cx="735.9" cy="231.3" rx="6.3" ry="1.0" fill="#a02ad0"/><ellipse cx="740.7" cy="234.6" rx="7.6" ry="1.4" fill="#a02ad0"/><ellipse cx="736.5" cy="237.3" rx="7.8" ry="1.6" fill="#ba2ba8"/><ellipse cx="739.2" cy="240.0" rx="9.5" ry="1.4" fill="#8d24d5"/><ellipse cx="736.3" cy="242.8" rx="7.3" ry="1.1" fill="#781dd6"/><ellipse cx="740.2" cy="245.4" rx="6.3" ry="1.8" fill="#8722d7"/><ellipse cx="736.2" cy="248.8" rx="8.7" ry="0.9" fill="#6f1ace"/><ellipse cx="739.1" cy="252.3" rx="7.2" ry="1.8" fill="#c42c99"/><ellipse cx="735.5" cy="254.8" rx="6.1" ry="1.3" fill="#aa2bc1"/><ellipse cx="739.1" cy="257.4" rx="8.4" ry="0.9" fill="#b42bb2"/><ellipse cx="735.3" cy="260.4" rx="9.6" ry="1.6" fill="#9125d4"/><ellipse cx="740.1" cy="263.6" rx="7.6" ry="1.6" fill="#8922d7"/><ellipse cx="736.8" cy="267.2" rx="8.0" ry="1.4" fill="#a12ace"/><ellipse cx="739.7" cy="270.8" rx="8.5" ry="1.4" fill="#8421d8"/><ellipse cx="736.6" cy="273.6" rx="6.4" ry="1.3" fill="#9c29d1"/><ellipse cx="739.7" cy="276.5" rx="7.3" ry="1.8" fill="#a92ac2"/><ellipse cx="735.4" cy="280.1" rx="7.3" ry="0.9" fill="#7b1ed9"/><ellipse cx="740.7" cy="283.4" rx="7.6" ry="0.9" fill="#9526d3"/><ellipse cx="736.6" cy="286.1" rx="8.4" ry="1.1" fill="#a52ac8"/><ellipse cx="740.3" cy="289.2" rx="6.8" ry="1.2" fill="#6f1ace"/><ellipse cx="736.9" cy="292.9" rx="9.5" ry="1.6" fill="#751cd3"/><ellipse cx="739.8" cy="295.8" rx="8.3" ry="1.6" fill="#9526d3"/><ellipse cx="736.1" cy="298.1" rx="6.6" ry="1.0" fill="#8722d7"/><ellipse cx="740.5" cy="301.1" rx="7.2" ry="1.2" fill="#c62c96"/><ellipse cx="735.9" cy="304.8" rx="6.4" ry="1.0" fill="#b42bb2"/><ellipse cx="740.2" cy="308.1" rx="6.7" ry="1.5" fill="#8822d7"/><ellipse cx="736.8" cy="311.0" rx="7.0" ry="1.3" fill="#751cd3"/><ellipse cx="739.3" cy="313.9" rx="6.8" ry="1.4" fill="#c22c9c"/><ellipse cx="736.1" cy="316.3" rx="7.5" ry="1.5" fill="#6f1ace"/><ellipse cx="739.8" cy="319.1" rx="6.4" ry="1.0" fill="#8822d7"/><ellipse cx="735.2" cy="322.6" rx="8.7" ry="1.5" fill="#bd2ca3"/><ellipse cx="739.6" cy="325.5" rx="9.2" ry="1.3" fill="#9526d3"/><ellipse cx="736.6" cy="329.0" rx="8.3" ry="1.5" fill="#8722d7"/><ellipse cx="739.1" cy="331.8" rx="8.3" ry="1.0" fill="#9025d5"/><ellipse cx="735.7" cy="335.3" rx="7.0" ry="1.7" fill="#9a28d2"/><ellipse cx="739.1" cy="337.7" rx="8.7" ry="1.2" fill="#c72c93"/><ellipse cx="736.0" cy="341.3" rx="8.1" ry="1.4" fill="#9125d4"/><ellipse cx="739.5" cy="343.9" rx="6.1" ry="1.3" fill="#9125d4"/><ellipse cx="735.2" cy="350.5" rx="7.5" ry="1.7" fill="#9125d4"/><ellipse cx="740.6" cy="354.0" rx="6.9" ry="1.5" fill="#7b1ed9"/><ellipse cx="736.4" cy="356.5" rx="7.0" ry="1.1" fill="#b02bb7"/><ellipse cx="739.0" cy="362.8" rx="6.2" ry="1.5" fill="#bb2ba7"/><ellipse cx="735.2" cy="364.8" rx="5.6" ry="1.7" fill="#761cd4"/><ellipse cx="740.4" cy="367.2" rx="8.7" ry="1.2" fill="#6516c4"/><ellipse cx="736.1" cy="370.8" rx="5.5" ry="1.3" fill="#741bd2"/><ellipse cx="739.1" cy="372.9" rx="5.7" ry="1.3" fill="#711ad0"/><ellipse cx="736.2" cy="375.0" rx="5.7" ry="1.9" fill="#9928d2"/><ellipse cx="740.6" cy="377.3" rx="7.0" ry="1.6" fill="#6617c5"/><ellipse cx="735.5" cy="380.2" rx="7.3" ry="1.7" fill="#9e29d1"/><ellipse cx="739.0" cy="382.5" rx="6.6" ry="2.0" fill="#801fd9"/><ellipse cx="736.2" cy="385.0" rx="7.5" ry="1.4" fill="#a62ac7"/><ellipse cx="739.9" cy="387.5" rx="7.9" ry="1.7" fill="#a12acf"/><ellipse cx="736.8" cy="389.9" rx="5.6" ry="1.8" fill="#9f2ad0"/><ellipse cx="740.0" cy="392.1" rx="6.4" ry="1.6" fill="#7e1fd9"/><ellipse cx="736.1" cy="398.8" rx="8.4" ry="1.1" fill="#8c23d6"/><ellipse cx="739.1" cy="401.1" rx="8.3" ry="1.5" fill="#6516c4"/><ellipse cx="735.3" cy="404.3" rx="6.6" ry="1.3" fill="#9f2ad0"/><ellipse cx="740.3" cy="406.8" rx="8.1" ry="1.9" fill="#781dd6"/><ellipse cx="736.7" cy="411.0" rx="6.3" ry="1.2" fill="#2e0872"/><ellipse cx="740.0" cy="413.4" rx="7.7" ry="1.7" fill="#3c0b89"/><ellipse cx="736.1" cy="420.2" rx="8.1" ry="1.4" fill="#3c0b89"/><ellipse cx="739.3" cy="423.9" rx="6.6" ry="1.4" fill="#3e0b8c"/><ellipse cx="738.0" cy="113" rx="5.4" ry="2" fill="#e53426"/><ellipse cx="738.0" cy="127" rx="5.4" ry="2" fill="#de2830"/><ellipse cx="738.0" cy="222" rx="5.4" ry="2" fill="#d42a5c"/><ellipse cx="738.0" cy="232" rx="5.4" ry="2" fill="#db293f"/><ellipse cx="738.0" cy="322" rx="5.4" ry="2" fill="#db293f"/><ellipse cx="738.0" cy="334" rx="5.4" ry="2" fill="#db293f"/><ellipse cx="738.0" cy="346" rx="5.4" ry="2" fill="#db293f"/><ellipse cx="738.0" cy="360" rx="5.4" ry="2" fill="#ff8300"/><rect x="761.6" y="98" width="13.8" height="242" fill="#5c13bb" opacity="0.8"/><rect x="759.3" y="340" width="18.4" height="126" fill="#4e10a8" opacity="0.8"/><ellipse cx="764.4" cy="99.0" rx="10.5" ry="1.2" fill="#8b23d6"/><ellipse cx="772.3" cy="101.8" rx="12.2" ry="1.0" fill="#9e29d1"/><ellipse cx="766.8" cy="105.4" rx="12.9" ry="1.7" fill="#bd2ca3"/><ellipse cx="770.7" cy="108.8" rx="12.0" ry="1.6" fill="#c02c9f"/><ellipse cx="764.7" cy="112.2" rx="12.1" ry="1.2" fill="#9c29d1"/><ellipse cx="770.2" cy="115.8" rx="13.4" ry="1.2" fill="#8b23d6"/><ellipse cx="765.0" cy="119.2" rx="12.2" ry="1.2" fill="#bb2ba7"/><ellipse cx="772.1" cy="122.0" rx="10.3" ry="1.3" fill="#8a23d6"/><ellipse cx="764.9" cy="125.3" rx="11.5" ry="1.5" fill="#751cd4"/><ellipse cx="772.3" cy="128.5" rx="11.9" ry="1.2" fill="#7d1eda"/><ellipse cx="767.0" cy="130.7" rx="10.2" ry="1.0" fill="#7b1ed9"/><ellipse cx="770.2" cy="132.7" rx="9.8" ry="1.0" fill="#721bd0"/><ellipse cx="766.7" cy="135.3" rx="11.7" ry="1.2" fill="#751cd3"/><ellipse cx="771.7" cy="138.4" rx="10.2" ry="1.3" fill="#7c1eda"/><ellipse cx="764.4" cy="140.8" rx="10.0" ry="0.9" fill="#741bd2"/><ellipse cx="770.2" cy="143.9" rx="9.9" ry="1.1" fill="#721bd0"/><ellipse cx="766.3" cy="146.5" rx="12.7" ry="1.2" fill="#8521d8"/><ellipse cx="772.3" cy="150.1" rx="10.9" ry="1.2" fill="#a62ac7"/><ellipse cx="766.9" cy="153.0" rx="12.2" ry="1.6" fill="#c72c91"/><ellipse cx="772.6" cy="156.0" rx="10.4" ry="1.7" fill="#761cd4"/><ellipse cx="765.6" cy="158.8" rx="10.2" ry="1.2" fill="#751cd4"/><ellipse cx="771.5" cy="162.3" rx="12.1" ry="1.5" fill="#bd2ca4"/><ellipse cx="765.4" cy="165.1" rx="13.8" ry="1.6" fill="#ad2bbb"/><ellipse cx="771.2" cy="168.6" rx="9.5" ry="1.2" fill="#771cd5"/><ellipse cx="765.9" cy="170.7" rx="11.6" ry="1.6" fill="#b92baa"/><ellipse cx="770.0" cy="174.0" rx="9.3" ry="1.3" fill="#b92baa"/><ellipse cx="766.2" cy="177.0" rx="9.4" ry="1.1" fill="#c62c95"/><ellipse cx="771.4" cy="179.2" rx="10.0" ry="1.6" fill="#ab2bbf"/><ellipse cx="766.9" cy="181.9" rx="12.7" ry="1.6" fill="#7d1eda"/><ellipse cx="772.5" cy="185.1" rx="8.8" ry="1.0" fill="#c32c9a"/><ellipse cx="766.1" cy="187.9" rx="9.8" ry="1.1" fill="#9526d3"/><ellipse cx="771.0" cy="191.6" rx="12.5" ry="1.6" fill="#9326d4"/><ellipse cx="766.3" cy="195.0" rx="10.0" ry="1.4" fill="#af2bb9"/><ellipse cx="772.4" cy="198.2" rx="9.4" ry="1.1" fill="#7f1fd9"/><ellipse cx="766.8" cy="200.9" rx="10.3" ry="0.9" fill="#791dd7"/><ellipse cx="770.3" cy="203.9" rx="12.5" ry="1.3" fill="#9727d2"/><ellipse cx="765.7" cy="206.8" rx="9.3" ry="1.2" fill="#bb2ba7"/><ellipse cx="770.5" cy="209.1" rx="9.1" ry="1.3" fill="#bb2ba7"/><ellipse cx="767.1" cy="211.6" rx="9.9" ry="1.2" fill="#af2bb9"/><ellipse cx="772.3" cy="213.8" rx="13.4" ry="1.4" fill="#9426d3"/><ellipse cx="766.7" cy="215.8" rx="11.5" ry="1.5" fill="#9f2ad0"/><ellipse cx="770.6" cy="219.5" rx="9.2" ry="1.6" fill="#9928d2"/><ellipse cx="765.6" cy="222.1" rx="12.1" ry="1.4" fill="#8320d8"/><ellipse cx="771.7" cy="224.1" rx="13.1" ry="1.5" fill="#b52baf"/><ellipse cx="766.2" cy="227.2" rx="13.5" ry="1.2" fill="#7f1fd9"/><ellipse cx="771.1" cy="230.7" rx="13.6" ry="1.5" fill="#7e1fd9"/><ellipse cx="766.0" cy="233.6" rx="9.4" ry="1.4" fill="#6f1ace"/><ellipse cx="772.4" cy="237.3" rx="13.4" ry="1.1" fill="#7e1fd9"/><ellipse cx="766.7" cy="240.8" rx="9.5" ry="1.5" fill="#a72ac5"/><ellipse cx="772.0" cy="244.3" rx="12.0" ry="1.0" fill="#8220d8"/><ellipse cx="766.7" cy="247.5" rx="11.1" ry="0.9" fill="#8120d9"/><ellipse cx="772.6" cy="251.0" rx="13.7" ry="1.7" fill="#711acf"/><ellipse cx="767.0" cy="254.0" rx="10.6" ry="1.3" fill="#c62c95"/><ellipse cx="772.1" cy="256.3" rx="11.0" ry="0.9" fill="#a42ac9"/><ellipse cx="764.4" cy="258.8" rx="10.7" ry="0.9" fill="#b82bac"/><ellipse cx="770.0" cy="262.3" rx="11.3" ry="1.2" fill="#a62ac6"/><ellipse cx="764.6" cy="266.0" rx="10.9" ry="1.2" fill="#9928d2"/><ellipse cx="771.0" cy="268.9" rx="10.3" ry="1.1" fill="#741bd2"/><ellipse cx="765.1" cy="272.3" rx="11.8" ry="1.1" fill="#9928d2"/><ellipse cx="771.6" cy="274.8" rx="10.3" ry="1.0" fill="#791dd7"/><ellipse cx="764.4" cy="278.2" rx="10.4" ry="1.5" fill="#761cd4"/><ellipse cx="772.3" cy="281.8" rx="10.4" ry="1.4" fill="#7d1eda"/><ellipse cx="765.2" cy="284.6" rx="12.6" ry="1.2" fill="#9727d3"/><ellipse cx="771.3" cy="287.8" rx="11.1" ry="1.3" fill="#ba2ba9"/><ellipse cx="766.4" cy="290.1" rx="10.6" ry="1.7" fill="#9c29d1"/><ellipse cx="771.7" cy="292.6" rx="11.8" ry="1.7" fill="#8521d8"/><ellipse cx="766.6" cy="294.8" rx="9.5" ry="1.3" fill="#7f1fd9"/><ellipse cx="770.4" cy="298.1" rx="12.3" ry="1.1" fill="#b52bb0"/><ellipse cx="766.5" cy="300.9" rx="12.9" ry="1.5" fill="#761cd4"/><ellipse cx="770.2" cy="303.7" rx="10.2" ry="1.5" fill="#bb2ba7"/><ellipse cx="765.9" cy="305.9" rx="9.6" ry="1.1" fill="#8f24d5"/><ellipse cx="770.8" cy="308.4" rx="11.6" ry="1.2" fill="#9727d3"/><ellipse cx="765.4" cy="311.6" rx="13.0" ry="1.3" fill="#ba2ba8"/><ellipse cx="770.4" cy="313.8" rx="9.1" ry="1.6" fill="#bc2ba5"/><ellipse cx="765.9" cy="315.9" rx="9.0" ry="1.3" fill="#9426d3"/><ellipse cx="772.2" cy="318.1" rx="10.9" ry="1.4" fill="#a62ac7"/><ellipse cx="764.4" cy="320.8" rx="9.9" ry="1.4" fill="#9c29d1"/><ellipse cx="770.0" cy="322.8" rx="10.9" ry="1.2" fill="#be2ca2"/><ellipse cx="766.6" cy="325.7" rx="11.4" ry="1.6" fill="#7e1fda"/><ellipse cx="770.6" cy="329.4" rx="10.4" ry="1.0" fill="#8c23d6"/><ellipse cx="766.7" cy="332.9" rx="13.4" ry="1.3" fill="#b22bb5"/><ellipse cx="771.9" cy="335.9" rx="9.8" ry="1.2" fill="#9e29d0"/><ellipse cx="765.1" cy="338.8" rx="9.9" ry="1.1" fill="#9e29d0"/><ellipse cx="772.5" cy="342.0" rx="12.7" ry="2.0" fill="#a52ac9"/><ellipse cx="764.9" cy="345.5" rx="12.1" ry="1.3" fill="#6717c6"/><ellipse cx="770.0" cy="347.7" rx="9.6" ry="1.4" fill="#6d19cc"/><ellipse cx="764.8" cy="350.2" rx="8.0" ry="1.5" fill="#7c1eda"/><ellipse cx="771.5" cy="353.8" rx="8.8" ry="1.2" fill="#6516c5"/><ellipse cx="767.1" cy="357.2" rx="7.9" ry="1.4" fill="#a72ac5"/><ellipse cx="771.2" cy="359.9" rx="12.8" ry="1.1" fill="#9f2ad0"/><ellipse cx="764.6" cy="362.7" rx="8.4" ry="1.4" fill="#a52ac9"/><ellipse cx="771.6" cy="366.3" rx="10.2" ry="1.9" fill="#791dd7"/><ellipse cx="767.0" cy="368.5" rx="9.4" ry="1.5" fill="#9f2ad0"/><ellipse cx="770.1" cy="371.5" rx="12.6" ry="1.3" fill="#8220d8"/><ellipse cx="765.3" cy="374.9" rx="9.8" ry="1.9" fill="#6918c8"/><ellipse cx="771.1" cy="377.0" rx="8.7" ry="1.2" fill="#6817c7"/><ellipse cx="766.0" cy="379.7" rx="9.6" ry="1.3" fill="#9526d3"/><ellipse cx="770.2" cy="382.9" rx="8.9" ry="1.6" fill="#8f24d5"/><ellipse cx="765.9" cy="384.9" rx="8.3" ry="1.4" fill="#9928d2"/><ellipse cx="770.3" cy="387.5" rx="8.1" ry="1.2" fill="#7b1ed9"/><ellipse cx="766.7" cy="389.8" rx="8.6" ry="1.6" fill="#7a1dd8"/><ellipse cx="771.3" cy="392.7" rx="8.9" ry="1.9" fill="#8f24d5"/><ellipse cx="767.0" cy="395.7" rx="9.4" ry="1.9" fill="#7f1fd9"/><ellipse cx="771.1" cy="398.3" rx="12.2" ry="1.9" fill="#6617c5"/><ellipse cx="766.8" cy="401.1" rx="12.0" ry="1.3" fill="#a52ac8"/><ellipse cx="770.4" cy="404.2" rx="12.8" ry="1.9" fill="#701ace"/><ellipse cx="766.1" cy="406.9" rx="11.9" ry="1.9" fill="#8e24d5"/><ellipse cx="770.5" cy="409.4" rx="12.3" ry="1.8" fill="#771cd5"/><ellipse cx="765.0" cy="411.8" rx="8.4" ry="2.0" fill="#6c19cb"/><ellipse cx="771.1" cy="415.3" rx="10.9" ry="1.9" fill="#9f2ad0"/><ellipse cx="766.6" cy="420.8" rx="8.2" ry="1.1" fill="#9125d4"/><ellipse cx="771.0" cy="422.8" rx="9.2" ry="1.3" fill="#a22acd"/><ellipse cx="765.9" cy="425.6" rx="9.9" ry="2.0" fill="#6f1ace"/><ellipse cx="771.5" cy="431.0" rx="12.7" ry="1.4" fill="#8120d9"/><ellipse cx="764.7" cy="433.3" rx="10.7" ry="1.8" fill="#a32acc"/><ellipse cx="771.5" cy="435.8" rx="11.8" ry="1.6" fill="#6f1ace"/><ellipse cx="765.2" cy="439.3" rx="12.2" ry="1.6" fill="#9526d3"/><ellipse cx="770.7" cy="441.8" rx="12.7" ry="1.7" fill="#9025d4"/><ellipse cx="765.0" cy="445.5" rx="12.7" ry="1.2" fill="#801fd9"/><ellipse cx="770.9" cy="449.0" rx="8.3" ry="1.7" fill="#771cd5"/><ellipse cx="764.8" cy="451.7" rx="8.0" ry="1.9" fill="#6e19cd"/><ellipse cx="770.0" cy="453.9" rx="8.2" ry="1.2" fill="#721bd0"/><ellipse cx="765.6" cy="456.0" rx="12.4" ry="1.6" fill="#741bd3"/><ellipse cx="770.5" cy="459.4" rx="9.8" ry="1.3" fill="#9928d2"/><ellipse cx="765.0" cy="462.1" rx="9.9" ry="1.4" fill="#a62ac7"/><ellipse cx="772.4" cy="465.3" rx="8.2" ry="1.9" fill="#a42ac9"/><ellipse cx="768.5" cy="172" rx="6.0" ry="2" fill="#cd2b79"/><ellipse cx="768.1" cy="430.0" rx="6.9" ry="1.5" fill="#a52ac8"/><ellipse cx="768.4" cy="432.1" rx="6.9" ry="1.5" fill="#ad2bbd"/><ellipse cx="768.7" cy="434.2" rx="7.0" ry="1.5" fill="#b52baf"/><ellipse cx="768.9" cy="436.3" rx="7.2" ry="1.5" fill="#c02c9f"/><ellipse cx="768.1" cy="438.4" rx="7.4" ry="1.5" fill="#d52a57"/><ellipse cx="768.4" cy="440.5" rx="7.6" ry="1.5" fill="#cc2b7a"/><ellipse cx="770.2" cy="442.6" rx="8.0" ry="1.5" fill="#d52956"/><ellipse cx="769.3" cy="444.7" rx="8.4" ry="1.5" fill="#e93b1f"/><ellipse cx="768.6" cy="446.8" rx="8.9" ry="1.5" fill="#f7520c"/><ellipse cx="769.0" cy="448.9" rx="9.4" ry="1.5" fill="#e83a21"/><ellipse cx="770.4" cy="451.0" rx="10.0" ry="1.5" fill="#ff6800"/><ellipse cx="770.7" cy="453.1" rx="10.6" ry="1.5" fill="#ff6000"/><ellipse cx="770.2" cy="455.2" rx="11.3" ry="1.5" fill="#ff7700"/><ellipse cx="770.6" cy="457.3" rx="12.1" ry="1.5" fill="#ffa100"/><ellipse cx="769.9" cy="459.4" rx="13.0" ry="1.5" fill="#ffc002"/><ellipse cx="770.2" cy="461.5" rx="13.8" ry="1.5" fill="#ffd013"/><ellipse cx="771.5" cy="463.6" rx="14.8" ry="1.5" fill="#fffeb1"/><ellipse cx="117.0" cy="460.8" rx="3" ry="2.0" fill="#ffffbe"/><ellipse cx="120.5" cy="461.0" rx="3" ry="1.9" fill="#fffa70"/><ellipse cx="124.0" cy="461.2" rx="3" ry="1.8" fill="#ffef34"/><ellipse cx="127.5" cy="461.3" rx="3" ry="1.6" fill="#ffd81c"/><ellipse cx="131.0" cy="461.5" rx="3" ry="1.5" fill="#ffc204"/><ellipse cx="134.5" cy="461.7" rx="3" ry="1.4" fill="#ffa600"/><ellipse cx="138.0" cy="461.9" rx="3" ry="1.3" fill="#ff8a00"/><ellipse cx="141.5" cy="462.1" rx="3" ry="1.2" fill="#ff6e00"/><ellipse cx="145.0" cy="462.2" rx="3" ry="1.0" fill="#f95608"/><ellipse cx="148.5" cy="462.4" rx="3" ry="0.9" fill="#ee4319"/><ellipse cx="152.0" cy="462.6" rx="3" ry="0.8" fill="#e33029"/><ellipse cx="150.0" cy="460.8" rx="3" ry="2.0" fill="#a02ad0"/><ellipse cx="153.3" cy="460.9" rx="3" ry="1.9" fill="#9a28d2"/><ellipse cx="156.6" cy="461.1" rx="3" ry="1.8" fill="#9426d3"/><ellipse cx="159.9" cy="461.2" rx="3" ry="1.7" fill="#8d24d5"/><ellipse cx="163.1" cy="461.3" rx="3" ry="1.7" fill="#8722d7"/><ellipse cx="166.4" cy="461.4" rx="3" ry="1.6" fill="#8120d9"/><ellipse cx="169.7" cy="461.6" rx="3" ry="1.5" fill="#7b1ed9"/><ellipse cx="173.0" cy="461.7" rx="3" ry="1.4" fill="#771cd5"/><ellipse cx="176.3" cy="461.8" rx="3" ry="1.3" fill="#731bd2"/><ellipse cx="179.6" cy="462.0" rx="3" ry="1.2" fill="#6f1ace"/><ellipse cx="182.9" cy="462.1" rx="3" ry="1.1" fill="#6b18ca"/><ellipse cx="186.1" cy="462.2" rx="3" ry="1.1" fill="#6717c6"/><ellipse cx="189.4" cy="462.3" rx="3" ry="1.0" fill="#6316c2"/><ellipse cx="192.7" cy="462.5" rx="3" ry="0.9" fill="#5f14be"/><ellipse cx="196.0" cy="462.6" rx="3" ry="0.8" fill="#5a13ba"/><ellipse cx="196.0" cy="460.8" rx="3" ry="2.0" fill="#fffa7d"/><ellipse cx="199.3" cy="460.9" rx="3" ry="1.9" fill="#fff749"/><ellipse cx="202.7" cy="461.0" rx="3" ry="1.8" fill="#ffeb30"/><ellipse cx="206.0" cy="461.2" rx="3" ry="1.8" fill="#ffdc20"/><ellipse cx="209.3" cy="461.3" rx="3" ry="1.7" fill="#ffcd10"/><ellipse cx="212.7" cy="461.4" rx="3" ry="1.6" fill="#ffbe00"/><ellipse cx="216.0" cy="461.5" rx="3" ry="1.5" fill="#ffab00"/><ellipse cx="219.3" cy="461.6" rx="3" ry="1.4" fill="#ff9800"/><ellipse cx="222.7" cy="461.8" rx="3" ry="1.4" fill="#ff8600"/><ellipse cx="226.0" cy="461.9" rx="3" ry="1.3" fill="#ff7300"/><ellipse cx="229.3" cy="462.0" rx="3" ry="1.2" fill="#ff6000"/><ellipse cx="232.7" cy="462.1" rx="3" ry="1.1" fill="#f7530b"/><ellipse cx="236.0" cy="462.2" rx="3" ry="1.0" fill="#f04616"/><ellipse cx="239.3" cy="462.4" rx="3" ry="1.0" fill="#e83a21"/><ellipse cx="242.7" cy="462.5" rx="3" ry="0.9" fill="#e12d2c"/><ellipse cx="246.0" cy="462.6" rx="3" ry="0.8" fill="#db293f"/><ellipse cx="262.0" cy="460.8" rx="3" ry="2.0" fill="#fffa7d"/><ellipse cx="265.5" cy="461.0" rx="3" ry="1.9" fill="#fff43a"/><ellipse cx="268.9" cy="461.1" rx="3" ry="1.8" fill="#ffe024"/><ellipse cx="272.4" cy="461.3" rx="3" ry="1.7" fill="#ffcc0f"/><ellipse cx="275.8" cy="461.5" rx="3" ry="1.6" fill="#ffb500"/><ellipse cx="279.3" cy="461.6" rx="3" ry="1.5" fill="#ff9c00"/><ellipse cx="282.7" cy="461.8" rx="3" ry="1.3" fill="#ff8200"/><ellipse cx="286.2" cy="461.9" rx="3" ry="1.2" fill="#ff6900"/><ellipse cx="289.6" cy="462.1" rx="3" ry="1.1" fill="#f8540a"/><ellipse cx="293.1" cy="462.3" rx="3" ry="1.0" fill="#ee4319"/><ellipse cx="296.5" cy="462.4" rx="3" ry="0.9" fill="#e43128"/><ellipse cx="300.0" cy="462.6" rx="3" ry="0.8" fill="#db293f"/><ellipse cx="462.0" cy="460.8" rx="3" ry="2.0" fill="#ffbe00"/><ellipse cx="465.5" cy="461.0" rx="3" ry="1.9" fill="#ffa400"/><ellipse cx="468.9" cy="461.1" rx="3" ry="1.8" fill="#ff8b00"/><ellipse cx="472.4" cy="461.3" rx="3" ry="1.7" fill="#ff7100"/><ellipse cx="475.8" cy="461.5" rx="3" ry="1.6" fill="#fc5a05"/><ellipse cx="479.3" cy="461.6" rx="3" ry="1.5" fill="#f14914"/><ellipse cx="482.7" cy="461.8" rx="3" ry="1.3" fill="#e73723"/><ellipse cx="486.2" cy="461.9" rx="3" ry="1.2" fill="#dd2834"/><ellipse cx="489.6" cy="462.1" rx="3" ry="1.1" fill="#d62954"/><ellipse cx="493.1" cy="462.3" rx="3" ry="1.0" fill="#ce2b74"/><ellipse cx="496.5" cy="462.4" rx="3" ry="0.9" fill="#c72c93"/><ellipse cx="500.0" cy="462.6" rx="3" ry="0.8" fill="#bc2ca4"/><ellipse cx="527.0" cy="460.8" rx="3" ry="2.0" fill="#ffffbe"/><ellipse cx="530.2" cy="460.9" rx="3" ry="1.9" fill="#fffc97"/><ellipse cx="533.5" cy="461.0" rx="3" ry="1.9" fill="#fffa70"/><ellipse cx="536.8" cy="461.1" rx="3" ry="1.8" fill="#fff749"/><ellipse cx="540.0" cy="461.2" rx="3" ry="1.8" fill="#ffef34"/><ellipse cx="543.2" cy="461.2" rx="3" ry="1.7" fill="#ffe328"/><ellipse cx="546.5" cy="461.3" rx="3" ry="1.6" fill="#ffd81c"/><ellipse cx="549.8" cy="461.4" rx="3" ry="1.6" fill="#ffcd10"/><ellipse cx="553.0" cy="461.5" rx="3" ry="1.5" fill="#ffc204"/><ellipse cx="556.2" cy="461.6" rx="3" ry="1.5" fill="#ffb500"/><ellipse cx="559.5" cy="461.7" rx="3" ry="1.4" fill="#ffa600"/><ellipse cx="562.8" cy="461.8" rx="3" ry="1.3" fill="#ff9800"/><ellipse cx="566.0" cy="461.9" rx="3" ry="1.3" fill="#ff8a00"/><ellipse cx="569.2" cy="462.0" rx="3" ry="1.2" fill="#ff7c00"/><ellipse cx="572.5" cy="462.1" rx="3" ry="1.2" fill="#ff6e00"/><ellipse cx="575.8" cy="462.2" rx="3" ry="1.1" fill="#ff6000"/><ellipse cx="579.0" cy="462.2" rx="3" ry="1.0" fill="#f95608"/><ellipse cx="582.2" cy="462.3" rx="3" ry="1.0" fill="#f44d10"/><ellipse cx="585.5" cy="462.4" rx="3" ry="0.9" fill="#ee4319"/><ellipse cx="588.8" cy="462.5" rx="3" ry="0.9" fill="#e83a21"/><ellipse cx="592.0" cy="462.6" rx="3" ry="0.8" fill="#e33029"/><ellipse cx="598.0" cy="460.8" rx="3" ry="2.0" fill="#fffa7d"/><ellipse cx="601.3" cy="460.9" rx="3" ry="1.9" fill="#fff854"/><ellipse cx="604.5" cy="461.0" rx="3" ry="1.9" fill="#fff137"/><ellipse cx="607.8" cy="461.1" rx="3" ry="1.8" fill="#ffe52a"/><ellipse cx="611.1" cy="461.2" rx="3" ry="1.7" fill="#ffda1d"/><ellipse cx="614.3" cy="461.3" rx="3" ry="1.7" fill="#ffce11"/><ellipse cx="617.6" cy="461.4" rx="3" ry="1.6" fill="#ffc204"/><ellipse cx="620.8" cy="461.5" rx="3" ry="1.6" fill="#ffb400"/><ellipse cx="624.1" cy="461.6" rx="3" ry="1.5" fill="#ffa500"/><ellipse cx="627.4" cy="461.7" rx="3" ry="1.4" fill="#ff9600"/><ellipse cx="630.6" cy="461.7" rx="3" ry="1.4" fill="#ff8800"/><ellipse cx="633.9" cy="461.8" rx="3" ry="1.3" fill="#ff7900"/><ellipse cx="637.2" cy="461.9" rx="3" ry="1.2" fill="#ff6a00"/><ellipse cx="640.4" cy="462.0" rx="3" ry="1.2" fill="#fd5d03"/><ellipse cx="643.7" cy="462.1" rx="3" ry="1.1" fill="#f7530c"/><ellipse cx="646.9" cy="462.2" rx="3" ry="1.1" fill="#f14814"/><ellipse cx="650.2" cy="462.3" rx="3" ry="1.0" fill="#eb3e1d"/><ellipse cx="653.5" cy="462.4" rx="3" ry="0.9" fill="#e53426"/><ellipse cx="656.7" cy="462.5" rx="3" ry="0.9" fill="#df2a2e"/><ellipse cx="660.0" cy="462.6" rx="3" ry="0.8" fill="#db293f"/><ellipse cx="650.0" cy="460.8" rx="3" ry="2.0" fill="#cd2b79"/><ellipse cx="653.3" cy="460.9" rx="3" ry="1.9" fill="#c62c96"/><ellipse cx="656.7" cy="461.1" rx="3" ry="1.8" fill="#bc2ca5"/><ellipse cx="660.0" cy="461.2" rx="3" ry="1.7" fill="#b32bb3"/><ellipse cx="663.3" cy="461.4" rx="3" ry="1.6" fill="#aa2ac2"/><ellipse cx="666.7" cy="461.6" rx="3" ry="1.5" fill="#a02ad0"/><ellipse cx="670.0" cy="461.7" rx="3" ry="1.4" fill="#9928d2"/><ellipse cx="673.3" cy="461.9" rx="3" ry="1.3" fill="#9225d4"/><ellipse cx="676.7" cy="462.0" rx="3" ry="1.2" fill="#8a23d6"/><ellipse cx="680.0" cy="462.2" rx="3" ry="1.1" fill="#8320d8"/><ellipse cx="683.3" cy="462.3" rx="3" ry="1.0" fill="#7c1eda"/><ellipse cx="686.7" cy="462.4" rx="3" ry="0.9" fill="#771cd5"/><ellipse cx="690.0" cy="462.6" rx="3" ry="0.8" fill="#721bd1"/><ellipse cx="688.0" cy="460.8" rx="3" ry="2.0" fill="#ffffbe"/><ellipse cx="691.2" cy="460.9" rx="3" ry="1.9" fill="#fffc95"/><ellipse cx="694.3" cy="461.0" rx="3" ry="1.9" fill="#fff96c"/><ellipse cx="697.5" cy="461.1" rx="3" ry="1.8" fill="#fff643"/><ellipse cx="700.6" cy="461.2" rx="3" ry="1.7" fill="#ffec31"/><ellipse cx="703.8" cy="461.3" rx="3" ry="1.7" fill="#ffe025"/><ellipse cx="706.9" cy="461.4" rx="3" ry="1.6" fill="#ffd518"/><ellipse cx="710.1" cy="461.5" rx="3" ry="1.6" fill="#ffc90c"/><ellipse cx="713.3" cy="461.6" rx="3" ry="1.5" fill="#ffbd00"/><ellipse cx="716.4" cy="461.7" rx="3" ry="1.4" fill="#ffae00"/><ellipse cx="719.6" cy="461.7" rx="3" ry="1.4" fill="#ff9f00"/><ellipse cx="722.7" cy="461.8" rx="3" ry="1.3" fill="#ff9000"/><ellipse cx="725.9" cy="461.9" rx="3" ry="1.2" fill="#ff8100"/><ellipse cx="729.1" cy="462.0" rx="3" ry="1.2" fill="#ff7300"/><ellipse cx="732.2" cy="462.1" rx="3" ry="1.1" fill="#ff6400"/><ellipse cx="735.4" cy="462.2" rx="3" ry="1.1" fill="#fb5806"/><ellipse cx="738.5" cy="462.3" rx="3" ry="1.0" fill="#f54e0f"/><ellipse cx="741.7" cy="462.4" rx="3" ry="0.9" fill="#ef4418"/><ellipse cx="744.8" cy="462.5" rx="3" ry="0.9" fill="#e93a20"/><ellipse cx="748.0" cy="462.6" rx="3" ry="0.8" fill="#e33029"/><ellipse cx="757.0" cy="460.8" rx="3" ry="2.0" fill="#fff63c"/><ellipse cx="760.3" cy="461.0" rx="3" ry="1.9" fill="#ffdd21"/><ellipse cx="763.7" cy="461.2" rx="3" ry="1.7" fill="#ffc407"/><ellipse cx="767.0" cy="461.4" rx="3" ry="1.6" fill="#ffa600"/><ellipse cx="770.3" cy="461.6" rx="3" ry="1.5" fill="#ff8700"/><ellipse cx="773.7" cy="461.8" rx="3" ry="1.3" fill="#ff6800"/><ellipse cx="777.0" cy="462.0" rx="3" ry="1.2" fill="#f6500e"/><ellipse cx="780.3" cy="462.2" rx="3" ry="1.1" fill="#e93b20"/><ellipse cx="783.7" cy="462.4" rx="3" ry="0.9" fill="#dd2835"/><ellipse cx="787.0" cy="462.6" rx="3" ry="0.8" fill="#d42a5c"/></g><g filter="url(#sb2)"><path d="M172 104.6q4.5 -1.2 9.0 1.2t9.0 -.6" stroke="#9225d4" stroke-width="1" fill="none" opacity=".5"/><path d="M248 104.6q3.5 -1.2 7.0 1.2t7.0 -.6" stroke="#9225d4" stroke-width="1" fill="none" opacity=".5"/><path d="M340 104.6q3.0 -1.2 6.0 1.2t6.0 -.6" stroke="#9225d4" stroke-width="1" fill="none" opacity=".5"/><path d="M416 104.6q6.0 -1.2 12.0 1.2t12.0 -.6" stroke="#9225d4" stroke-width="1" fill="none" opacity=".5"/><path d="M503 104.6q4.2 -1.2 8.5 1.2t8.5 -.6" stroke="#9225d4" stroke-width="1" fill="none" opacity=".5"/><path d="M584 104.6q4.5 -1.2 9.0 1.2t9.0 -.6" stroke="#9225d4" stroke-width="1" fill="none" opacity=".5"/><path d="M668 104.6q5.0 -1.2 10.0 1.2t10.0 -.6" stroke="#9225d4" stroke-width="1" fill="none" opacity=".5"/><path d="M746 104.6q3.5 -1.2 7.0 1.2t7.0 -.6" stroke="#9225d4" stroke-width="1" fill="none" opacity=".5"/><rect x="262" y="420.4" width="38" height="1.2" fill="#8320d8" opacity="0.28"/><rect x="262" y="429.4" width="38" height="1.2" fill="#9426d3" opacity="0.43"/><rect x="262" y="433.9" width="38" height="1.2" fill="#a22acd" opacity="0.51"/><rect x="262" y="438.4" width="38" height="1.2" fill="#b62bae" opacity="0.59"/><rect x="262" y="442.9" width="38" height="1.2" fill="#ca2b83" opacity="0.66"/><rect x="262" y="447.4" width="38" height="1.2" fill="#dc283a" opacity="0.74"/><rect x="262" y="451.9" width="38" height="1.2" fill="#f44d10" opacity="0.82"/><rect x="262" y="456.4" width="38" height="1.2" fill="#ff8800" opacity="0.90"/><rect x="463" y="379.1" width="37" height="1.2" fill="#8b23d6" opacity="0.37"/><rect x="463" y="387.6" width="37" height="1.2" fill="#9326d4" opacity="0.42"/><rect x="463" y="391.9" width="37" height="1.2" fill="#9727d2" opacity="0.45"/><rect x="463" y="396.1" width="37" height="1.2" fill="#9c29d1" opacity="0.48"/><rect x="463" y="400.4" width="37" height="1.2" fill="#a22acd" opacity="0.51"/><rect x="463" y="404.6" width="37" height="1.2" fill="#a92ac2" opacity="0.54"/><rect x="463" y="408.9" width="55" height="1.2" fill="#b12bb7" opacity="0.57"/><rect x="463" y="417.4" width="55" height="1.2" fill="#c12c9e" opacity="0.63"/><rect x="463" y="425.9" width="37" height="1.2" fill="#ce2b73" opacity="0.68"/><rect x="463" y="430.1" width="37" height="1.2" fill="#d52a57" opacity="0.71"/><rect x="463" y="434.4" width="37" height="1.2" fill="#db283b" opacity="0.74"/><rect x="463" y="438.6" width="37" height="1.2" fill="#e43128" opacity="0.77"/><rect x="463" y="442.9" width="55" height="1.2" fill="#ed421a" opacity="0.80"/><rect x="463" y="447.1" width="55" height="1.2" fill="#f7520c" opacity="0.83"/><rect x="463" y="451.4" width="55" height="1.2" fill="#ff6400" opacity="0.86"/><rect x="463" y="455.6" width="37" height="1.2" fill="#ff7d00" opacity="0.88"/><rect x="463" y="459.9" width="37" height="1.2" fill="#ff9700" opacity="0.91"/><rect x="114" y="451.6" width="46" height="1.2" fill="#9b28d1" opacity="0.47"/><rect x="114" y="455.8" width="46" height="1.2" fill="#cc2b7f" opacity="0.67"/><rect x="114" y="460.0" width="46" height="1.2" fill="#ff6c00" opacity="0.86"/><rect x="500" y="435.4" width="28" height="1.2" fill="#8320d8" opacity="0.28"/><rect x="500" y="439.7" width="28" height="1.2" fill="#8e24d5" opacity="0.39"/><rect x="500" y="452.6" width="28" height="1.2" fill="#d42a59" opacity="0.71"/><rect x="500" y="456.9" width="46" height="1.2" fill="#f44d11" opacity="0.82"/><rect x="500" y="461.2" width="28" height="1.2" fill="#ffa200" opacity="0.93"/></g></g></defs><rect x="114" y="98" width="674" height="368" fill="#000"/><use href="#stripes"/><rect x="427" y="341" width="36" height="125" fill="url(#dk)" opacity=".55"/><g filter="url(#sb2)"><rect x="427" y="341.0" width="30.0" height="1.5" fill="#000033" opacity="0.78"/><rect x="427" y="343.2" width="27.0" height="2.5" fill="#000049" opacity="0.67"/><rect x="427" y="347.2" width="31.6" height="1.8" fill="#000030" opacity="0.89"/><rect x="427" y="349.1" width="31.1" height="3.2" fill="#000043" opacity="0.73"/><rect x="427" y="353.6" width="35.5" height="3.0" fill="#00003c" opacity="0.73"/><rect x="427" y="357.0" width="34.2" height="2.2" fill="#000047" opacity="0.93"/><rect x="427" y="359.8" width="28.3" height="2.8" fill="#00003f" opacity="0.85"/><rect x="427" y="363.0" width="26.4" height="2.6" fill="#000032" opacity="0.60"/><rect x="427" y="365.8" width="34.9" height="1.5" fill="#000025" opacity="0.72"/><rect x="427" y="368.2" width="34.7" height="2.2" fill="#000026" opacity="0.56"/><rect x="427" y="371.4" width="32.6" height="1.8" fill="#000039" opacity="0.90"/><rect x="427" y="374.0" width="31.1" height="1.7" fill="#000043" opacity="0.79"/><rect x="427" y="377.1" width="32.5" height="1.4" fill="#000031" opacity="0.67"/><rect x="427" y="378.6" width="26.2" height="2.0" fill="#000041" opacity="0.89"/><rect x="427" y="382.0" width="30.1" height="1.6" fill="#000026" opacity="0.94"/><rect x="427" y="383.6" width="28.1" height="2.2" fill="#000032" opacity="0.87"/><rect x="427" y="387.1" width="28.9" height="2.9" fill="#000024" opacity="0.89"/><rect x="427" y="390.5" width="27.0" height="1.3" fill="#000045" opacity="0.56"/><rect x="427" y="392.7" width="31.1" height="1.9" fill="#000040" opacity="0.89"/><rect x="427" y="395.9" width="34.5" height="1.6" fill="#00003c" opacity="0.60"/><rect x="427" y="398.6" width="26.8" height="2.1" fill="#000047" opacity="0.88"/><rect x="427" y="401.5" width="35.9" height="1.5" fill="#000031" opacity="0.75"/><rect x="427" y="404.3" width="36.0" height="1.3" fill="#00004a" opacity="0.94"/><rect x="427" y="406.0" width="31.2" height="1.8" fill="#000049" opacity="0.74"/><rect x="427" y="409.3" width="29.4" height="3.4" fill="#000025" opacity="0.59"/><rect x="427" y="413.6" width="28.8" height="2.1" fill="#000042" opacity="0.81"/><rect x="427" y="417.0" width="35.3" height="2.2" fill="#000030" opacity="0.72"/><rect x="427" y="420.3" width="26.1" height="1.3" fill="#00002f" opacity="0.69"/><rect x="427" y="423.1" width="33.4" height="2.8" fill="#00002b" opacity="0.87"/><rect x="427" y="427.0" width="29.0" height="1.8" fill="#000038" opacity="0.82"/><rect x="427" y="430.2" width="29.7" height="2.1" fill="#000049" opacity="0.78"/><rect x="427" y="433.8" width="35.5" height="2.5" fill="#000038" opacity="0.57"/><rect x="427" y="437.7" width="34.4" height="2.3" fill="#000033" opacity="0.62"/><rect x="427" y="440.7" width="34.6" height="2.2" fill="#00003e" opacity="0.64"/><rect x="427" y="443.6" width="27.6" height="1.4" fill="#000048" opacity="0.91"/><rect x="427" y="445.9" width="30.1" height="1.7" fill="#000062" opacity="0.88"/><rect x="427" y="447.9" width="36.0" height="1.3" fill="#00004d" opacity="0.56"/><rect x="427" y="450.1" width="36.0" height="2.3" fill="#000076" opacity="0.81"/><rect x="427" y="453.2" width="36.0" height="1.2" fill="#000087" opacity="0.73"/><rect x="427" y="454.5" width="36.0" height="2.5" fill="#00008e" opacity="0.57"/><rect x="427" y="458.1" width="36.0" height="2.5" fill="#00007d" opacity="0.65"/><rect x="427" y="460.8" width="36.0" height="2.2" fill="#00009d" opacity="0.67"/><rect x="427" y="464.1" width="36.0" height="3.0" fill="#00009c" opacity="0.71"/></g><ellipse cx="437" cy="460" rx="16" ry="9" fill="#0000d0" opacity=".75" filter="url(#sb3)"/><rect x="428" y="98" width="24" height="35" fill="#000060" opacity=".5" filter="url(#sb)"/><rect x="364" y="98" width="26" height="35" fill="#000050" opacity=".4" filter="url(#sb)"/><rect x="114" y="180.8" width="674" height="26.2" fill="#0404dc"/><rect x="114" y="279" width="674" height="23.6" fill="#0404d8"/><g clip-path="url(#semi)" opacity=".42" style="mix-blend-mode:screen"><use href="#stripes"/></g><rect x="249" y="98" width="12.2" height="368" fill="#0008f4" opacity=".93"/><rect x="114" y="133" width="674" height="27.7" fill="#0000ff"/><rect x="114" y="237" width="674" height="16.4" fill="#0000ff"/><circle cx="262" cy="389" r="46" fill="url(#blob2)"/><circle cx="277" cy="388.5" r="34" fill="url(#blob)"/><path d="M536 340V432" stroke="#0018e0" stroke-width="1.1" stroke-dasharray="5 3 9 2" opacity=".85"/><path d="M577 367l-1.5 8l2 7l-2.5 8l1 9l-2.5 8" stroke="#0014f0" stroke-width="1.6" fill="none" stroke-dasharray="6 2 3 2" opacity=".9"/><path d="M534 320v3M535 328v2M536 334v4" stroke="#0018e8" stroke-width="1.6"/><path d="M268 332l8 -3l7 3M276 325l2 6" stroke="#0018e8" stroke-width="1.2" fill="none"/><circle cx="432.5" cy="370" r="1.1" fill="#0020ff"/><rect x="113" y="97.6" width="676" height="1" fill="#8c8c8c"/><rect x="113.3" y="98" width="1.1" height="368.4" fill="#c81414"/><rect x="114.4" y="466" width="674.4" height="1" fill="#a8a8a8"/><rect x="788" y="98" width=".9" height="369" fill="#9a9a9a"/></svg>
<svg class="a" style="left:786px;top:96px" width="14" height="374" viewBox="786 96 14 374"><defs><linearGradient id="vt" x1="0" y1="0" x2="1" y2="0"><stop offset="0" stop-color="#9c9c9c"/><stop offset=".5" stop-color="#d4d4d4"/><stop offset="1" stop-color="#c0c0c0"/></linearGradient><linearGradient id="vth" x1="0" y1="0" x2="1" y2="0"><stop offset="0" stop-color="#ddd"/><stop offset=".4" stop-color="#fff"/><stop offset=".8" stop-color="#fff"/><stop offset="1" stop-color="#e4e4e4"/></linearGradient></defs><rect x="790.2" y="98" width="7.8" height="368.4" fill="#555"/><rect x="790.4" y="109.5" width="7.4" height="347" rx="3.6" fill="url(#vt)"/><rect x="790.6" y="225" width="7" height="114.4" rx="3.4" fill="url(#vth)"/><path d="M794.1 101.6l3.4 4.6h-6.8z" fill="#fff"/><path d="M794.1 465l3.3 -4.4h-6.6z" fill="#fff"/><path d="M789.2 98v12.5" stroke="#d01818" stroke-width="1"/><path d="M789.4 454.5v12" stroke="#d01818" stroke-width="1"/></svg>
<svg class="a" style="left:0;top:466px" width="800" height="13" viewBox="0 466 800 13"><defs><linearGradient id="hs" x1="0" y1="0" x2="0" y2="1"><stop offset="0" stop-color="#d8d8d8"/><stop offset=".3" stop-color="#fff"/><stop offset=".75" stop-color="#fff"/><stop offset="1" stop-color="#dcdcdc"/></linearGradient></defs><rect x="12.8" y="468.4" width="766" height="8.2" rx="4.1" fill="url(#hs)"/><path d="M4.6 472.6l4.8 -3v6z" fill="#fff"/><path d="M786.2 472.6l-4.4 -3v6z" fill="#fff"/></svg>
<svg class="a" style="left:0;top:478px" width="800" height="40" viewBox="0 478 800 40"><rect x="261.2" y="484.6" width="21" height="21.4" rx="2" fill="#4d7e9f"/><path d="M297.6 484.2 L320.4 495.8 L297.6 507.4 Z" fill="#fff"/><rect x="338.8" y="484.4" width="2.8" height="22.8" fill="#fff"/><rect x="347.4" y="484.4" width="2.8" height="22.8" fill="#fff"/><rect x="373" y="484.4" width="2.8" height="22.8" fill="#fff"/><path d="M388.6 484.4 L376.6 495.8 L388.6 507.2 Z" fill="#fff"/><path d="M417.6 484.4 L405.8 495.8 L417.6 507.2 Z" fill="#fff"/><path d="M429.6 484.4 L417.8 495.8 L429.6 507.2 Z" fill="#fff"/><g fill="#fff" stroke="#fff" stroke-width=".8" stroke-linejoin="round"><path d="M444.8 482.8 L455.8 495 L444.8 507.2 Z"/><path d="M456.8 482.8 L467.8 495 L456.8 507.2 Z"/><path d="M483.8 482.9 L495.4 495 L483.8 507.1 Z"/></g><rect x="497.2" y="482.6" width="2.5" height="24.8" fill="#fff"/><path d="M529.6 488.8 H519.3 Q517.3 488.8 517.3 490.8 V502.6 Q517.3 504.6 519.3 504.6 H537.6 Q539.6 504.6 539.6 502.6 V494" fill="none" stroke="#4d7e9f" stroke-width="2.2"/><path d="M529.4 482.4 L542.8 487.7 L529.4 493 Z" fill="#4d7e9f" stroke="#4d7e9f" stroke-width=".8" stroke-linejoin="round"/><g transform="translate(640.3 495) scale(1.13 1.03) translate(-640.2 -495)"><path d="M648.6 486.2 C645 481.8 636.2 481.6 633.6 487 C631.6 492 635.8 494.8 639.6 497.4" fill="none" stroke="#4d7e9f" stroke-width="3.1"/><path d="M631.8 503.8 C635.4 508.2 644.2 508.4 646.8 503 C648.8 498 644.6 495.2 640.8 492.6" fill="none" stroke="#4d7e9f" stroke-width="3.1"/></g><rect x="0" y="513.4" width="800" height="1.2" fill="#5e5e5e"/><rect x="0" y="514.6" width="800" height="4" fill="#2e2e2e"/><path d="M786.4 513.6L799 501M790.6 513.6L799 505.2M794.8 513.6L799 509.4" stroke="#8a8a8a" stroke-width=".9"/></svg>
<div class="a" style="left:296.2px;top:173.2px;width:207.4px;height:167.4px;background:linear-gradient(#4e4e4e 0,#464646 8px,#3e3e3e 17.5px,#414141 19px,#414141 164px,#4c4c4c 165.5px,#4a4a4a 100%);border-radius:4px 4px 0 0;box-shadow:inset 0 .8px 0 #5a5a5a"></div>
<div class="t" style="left:338.40px;top:178px;font-size:10px;color:#dcdcdc;letter-spacing:0.530px;font-weight:bold;">Visualization Settings</div>
<svg class="a" style="left:296px;top:173px" width="208" height="80" viewBox="296 173 208 80"><path d="M491.6 180l5.6 5.6M497.2 180l-5.6 5.6" stroke="#f0f0f0" stroke-width="1.7"/><defs><linearGradient id="trk2" x1="0" y1="0" x2="0" y2="1"><stop offset="0" stop-color="#6c6c6c"/><stop offset="1" stop-color="#909090"/></linearGradient><radialGradient id="knob2" cx=".4" cy=".35" r=".7"><stop offset="0" stop-color="#dedeff"/><stop offset="1" stop-color="#b8b8f2"/></radialGradient><linearGradient id="cb" x1="0" y1="0" x2="0" y2="1"><stop offset="0" stop-color="#ececff"/><stop offset=".5" stop-color="#c6c6f0"/><stop offset="1" stop-color="#b4b4e6"/></linearGradient></defs><rect x="313" y="210" width="80" height="4.4" rx="2.2" fill="url(#trk2)"/><circle cx="369.6" cy="212.2" r="5" fill="url(#knob2)" stroke="#e8e8ff" stroke-width=".7"/><rect x="397" y="205.6" width="29.4" height="13.2" fill="#fff" stroke="#3a3a3a" stroke-width=".7"/><rect x="309" y="227.2" width="117.4" height="17.2" rx="1.5" fill="#fff" stroke="#a8a8e0" stroke-width="1.2"/><rect x="412.4" y="228" width="13.4" height="15.6" fill="url(#cb)"/><path d="M419.1 231l3 3.6h-6zM419.1 241l3 -3.6h-6z" fill="#3a3a50"/></svg>
<div class="t" style="left:404.70px;top:208px;font-size:9.5px;color:#000;letter-spacing:0.536px;font-weight:normal;">-60</div>
<div class="t" style="left:436.50px;top:209px;font-size:9.3px;color:#141414;letter-spacing:0.203px;font-weight:normal;">Clip (dB)</div>
<div class="t" style="left:436.50px;top:233px;font-size:9.3px;color:#141414;letter-spacing:0.300px;font-weight:normal;">Color Map</div>
<div class="t" style="left:313.00px;top:233px;font-size:9.3px;color:#000;letter-spacing:0.223px;font-weight:normal;">Purple</div>
<div class="a" style="left:308.8px;top:246.2px;width:118.6px;height:247.4px;background:repeating-linear-gradient(#fbfdff 0,#fbfdff 1.4px,#f4f7fb 1.4px,#f4f7fb 2.2px);box-shadow:0 0 0 .7px #aab0b8;"></div>
<div class="a" style="left:309.4px;top:246.79999999999998px;width:117.4px;height:16.66px;background:#6a6ac6;"></div>
<div class="t" style="left:329.40px;top:250px;font-size:10.7px;color:#fff;letter-spacing:0.197px;font-weight:normal;">Purple</div>
<div class="t" style="left:329.40px;top:267px;font-size:10.7px;color:#0a0a0a;letter-spacing:0.228px;font-weight:normal;">Jet</div>
<div class="t" style="left:329.40px;top:285px;font-size:10.7px;color:#0a0a0a;letter-spacing:0.176px;font-weight:normal;">Black and White</div>
<div class="t" style="left:329.40px;top:303px;font-size:10.7px;color:#0a0a0a;letter-spacing:0.234px;font-weight:normal;">Cool</div>
<div class="t" style="left:329.40px;top:320px;font-size:10.7px;color:#0a0a0a;letter-spacing:0.267px;font-weight:normal;">Hot</div>
<div class="t" style="left:329.40px;top:338px;font-size:10.7px;color:#0a0a0a;letter-spacing:0.176px;font-weight:normal;">Hue Saturation</div>
<div class="t" style="left:329.40px;top:356px;font-size:10.7px;color:#0a0a0a;letter-spacing:0.197px;font-weight:normal;">Spring</div>
<div class="t" style="left:329.40px;top:373px;font-size:10.7px;color:#0a0a0a;letter-spacing:0.260px;font-weight:normal;">Summer</div>
<div class="t" style="left:329.40px;top:391px;font-size:10.7px;color:#0a0a0a;letter-spacing:0.237px;font-weight:normal;">Autumn</div>
<div class="t" style="left:329.40px;top:409px;font-size:10.7px;color:#0a0a0a;letter-spacing:0.198px;font-weight:normal;">Winter</div>
<div class="t" style="left:329.40px;top:427px;font-size:10.7px;color:#0a0a0a;letter-spacing:0.268px;font-weight:normal;">Bone</div>
<div class="t" style="left:329.40px;top:444px;font-size:10.7px;color:#0a0a0a;letter-spacing:0.224px;font-weight:normal;">Copper</div>
<div class="t" style="left:329.40px;top:462px;font-size:10.7px;color:#0a0a0a;letter-spacing:0.216px;font-weight:normal;">Pink</div>
<div class="t" style="left:329.40px;top:480px;font-size:10.7px;color:#0a0a0a;letter-spacing:0.175px;font-weight:normal;">White and Black</div>
<svg class="a" style="left:309px;top:246px" width="70" height="30" viewBox="309 246 70 30"><path d="M313.6 255.6l3 3.6l6.8 -9" fill="none" stroke="#fff" stroke-width="1.6" stroke-linecap="round" stroke-linejoin="round"/><path d="M361.4 255.2v11.4l2.6 -2.4l2 4.4l1.8 -0.8l-2 -4.4h3.6z" fill="#111" stroke="#fff" stroke-width=".7" stroke-linejoin="round"/></svg>
<div class="a" style="left:0px;top:17px;width:2px;height:501px;background:#363636;"></div>
<div class="a" style="left:798.4px;top:4px;width:1.6px;height:514px;background:#303030;"></div>
</div></body></html>
